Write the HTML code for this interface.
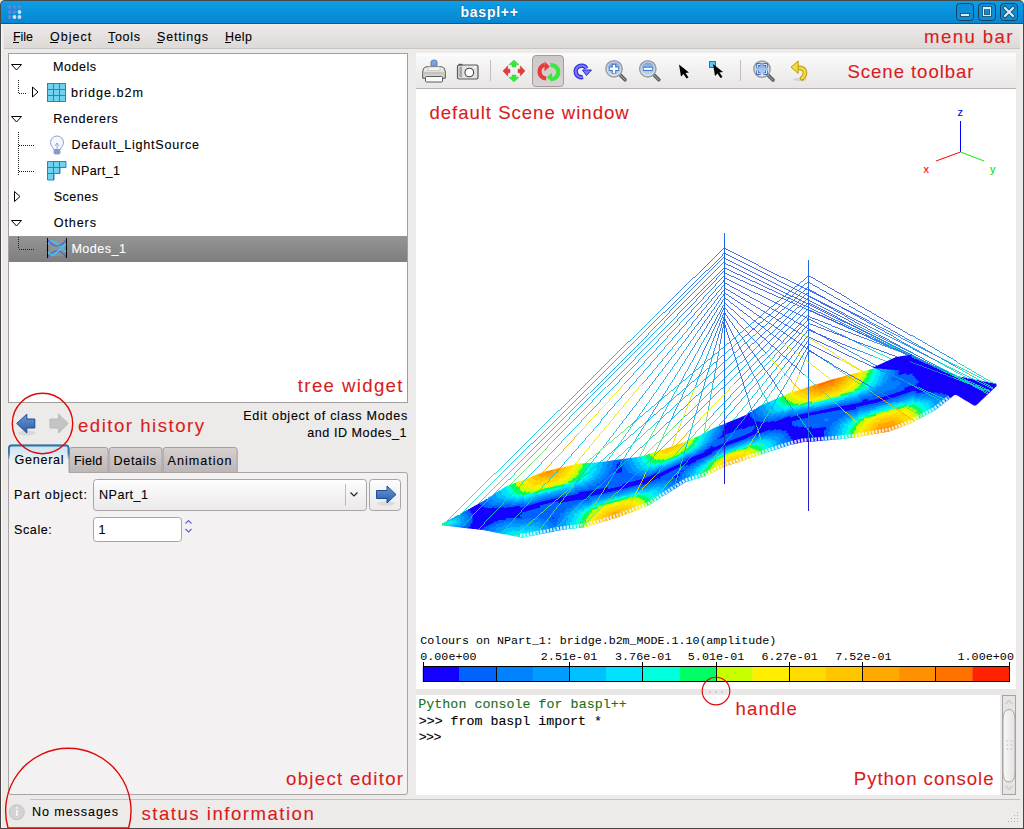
<!DOCTYPE html>
<html><head><meta charset="utf-8">
<style>
*{box-sizing:border-box}
html,body{margin:0;padding:0}
body{width:1024px;height:829px;overflow:hidden;position:relative;background:#edebea;font-family:"Liberation Sans",sans-serif}
.a{position:absolute}
</style></head><body>
<div class="a" style="left:0;top:0;width:1024px;height:829px;background:#4a4747;border-radius:5px 5px 0 0"></div>
<div class="a" style="left:1px;top:24px;width:1022px;height:804px;background:#edebea;border-left:1px solid #f8f7f7"></div>
<div class="a" style="left:1px;top:1px;width:1022px;height:23px;background:linear-gradient(#0c9ee8,#0a92dc 45%,#0886d0);border-radius:4px 4px 0 0;border-bottom:1px solid #0b5b92"></div>
<div class="a" style="left:4px;top:24px;width:1016px;height:25px;background:linear-gradient(#edebea,#dcd9d7);border-bottom:1px solid #c9c5c3"></div>
<div class="a" style="left:8px;top:53px;width:400px;height:350px;background:#fff;border:1px solid #a39d9d"></div>
<div class="a" style="left:8px;top:472px;width:400px;height:323px;background:#f3f1f1;border:1px solid #aaa4a4;border-radius:0 3px 3px 3px"></div>
<div class="a" style="left:416px;top:53px;width:600px;height:36px;background:linear-gradient(#fbfbfb,#e8e6e5);border-bottom:1px solid #bab5b5"></div>
<div class="a" style="left:416px;top:89px;width:600px;height:600px;background:#fff"></div>
<div class="a" style="left:416px;top:695px;width:584px;height:100px;background:#fff"></div>
<div class="a" style="left:30px;top:799px;width:990px;height:1px;background:#c6c1c0"></div>
<svg class="a" style="left:0;top:0" width="1024" height="829" viewBox="0 0 1024 829"><defs>
<linearGradient id="tabblue" x1="0" y1="0" x2="0" y2="1"><stop offset="0" stop-color="#2a76aa"/><stop offset="0.5" stop-color="#2a76aa"/><stop offset="1" stop-color="#2a76aa" stop-opacity="0"/></linearGradient>
<linearGradient id="selg" x1="0" y1="0" x2="0" y2="1"><stop offset="0" stop-color="#959595"/><stop offset="1" stop-color="#7e7e7e"/></linearGradient>
<linearGradient id="blueg" x1="0" y1="0" x2="0" y2="1"><stop offset="0" stop-color="#6a98d4"/><stop offset="1" stop-color="#2c5ca8"/></linearGradient>
<linearGradient id="tabg" x1="0" y1="0" x2="0" y2="1"><stop offset="0" stop-color="#d6d0d0"/><stop offset="1" stop-color="#bdb6b6"/></linearGradient>
<linearGradient id="acttab" x1="0" y1="0" x2="0" y2="1"><stop offset="0" stop-color="#c8e2f2"/><stop offset="0.6" stop-color="#eef2f4"/><stop offset="1" stop-color="#f3f1f1"/></linearGradient>
<linearGradient id="combog" x1="0" y1="0" x2="0" y2="1"><stop offset="0" stop-color="#fdfdfd"/><stop offset="1" stop-color="#ebe9e9"/></linearGradient>
<linearGradient id="pressg" x1="0" y1="0" x2="0" y2="1"><stop offset="0" stop-color="#cdc8c8"/><stop offset="1" stop-color="#d8d4d4"/></linearGradient>
<linearGradient id="scrollg" x1="0" y1="0" x2="1" y2="0"><stop offset="0" stop-color="#f8f8f8"/><stop offset="1" stop-color="#e4e2e2"/></linearGradient>
<linearGradient id="lensg" x1="0" y1="0" x2="0" y2="1"><stop offset="0" stop-color="#6e9edc"/><stop offset="1" stop-color="#cfe2f6"/></linearGradient>
<linearGradient id="printg" x1="0" y1="0" x2="0" y2="1"><stop offset="0" stop-color="#f2f2f0"/><stop offset="1" stop-color="#c8cac4"/></linearGradient>
</defs><circle cx="9.5" cy="7" r="1.9" fill="#5a86dc"/>
<circle cx="14.5" cy="7" r="1.9" fill="#5a86dc"/>
<circle cx="19.5" cy="7" r="1.9" fill="#5a86dc"/>
<circle cx="9.5" cy="12" r="1.9" fill="#5a86dc"/>
<circle cx="14.5" cy="12" r="1.9" fill="#5a86dc"/>
<circle cx="19.5" cy="12" r="1.9" fill="#d0e0fa"/>
<circle cx="9.5" cy="17" r="1.9" fill="#5a86dc"/>
<circle cx="14.5" cy="17" r="1.9" fill="#d0e0fa"/>
<circle cx="19.5" cy="17" r="1.9" fill="#d0e0fa"/>
<text x="460.5" y="16.8" font-family="Liberation Sans" font-size="14" fill="#fff" font-weight="bold" textLength="57.5" lengthAdjust="spacing" stroke="#0a3a60" stroke-width="0.4" paint-order="stroke">baspl++</text>
<rect x="956.5" y="3.5" width="17" height="17" rx="3.2" fill="#0a90d8" stroke="#15405e" stroke-width="1"/>
<rect x="978.5" y="3.5" width="17" height="17" rx="3.2" fill="#0a90d8" stroke="#15405e" stroke-width="1"/>
<rect x="1000.5" y="3.5" width="17" height="17" rx="3.2" fill="#0a90d8" stroke="#15405e" stroke-width="1"/>
<rect x="960.5" y="13.5" width="9" height="3" fill="#d4eefa" stroke="#15405e" stroke-width="0.8"/>
<rect x="983.5" y="7.5" width="7" height="8" fill="none" stroke="#15405e" stroke-width="2.6"/><rect x="983.5" y="7.5" width="7" height="8" fill="none" stroke="#d4eefa" stroke-width="1.2"/><rect x="983" y="7" width="8" height="2" fill="#d4eefa"/>
<path d="M1005 8 L1013 16 M1013 8 L1005 16" stroke="#15405e" stroke-width="3.8" stroke-linecap="square"/>
<path d="M1005 8 L1013 16 M1013 8 L1005 16" stroke="#d8f0fc" stroke-width="2.2" stroke-linecap="square"/>
<text x="13.0" y="40.5" font-family="Liberation Sans" font-size="12.5" fill="#000" textLength="20.0" lengthAdjust="spacing" stroke="#000" stroke-width="0.1">File</text>
<rect x="13" y="42" width="6" height="1" fill="#000"/>
<text x="50.0" y="40.5" font-family="Liberation Sans" font-size="12.5" fill="#000" textLength="41.2" lengthAdjust="spacing" stroke="#000" stroke-width="0.1">Object</text>
<rect x="50" y="42" width="8" height="1" fill="#000"/>
<text x="108.0" y="40.5" font-family="Liberation Sans" font-size="12.5" fill="#000" textLength="32.0" lengthAdjust="spacing" stroke="#000" stroke-width="0.1">Tools</text>
<rect x="108" y="42" width="6" height="1" fill="#000"/>
<text x="157.0" y="40.5" font-family="Liberation Sans" font-size="12.5" fill="#000" textLength="51.0" lengthAdjust="spacing" stroke="#000" stroke-width="0.1">Settings</text>
<rect x="157" y="42" width="6" height="1" fill="#000"/>
<text x="225.0" y="40.5" font-family="Liberation Sans" font-size="12.5" fill="#000" textLength="27.0" lengthAdjust="spacing" stroke="#000" stroke-width="0.1">Help</text>
<rect x="225" y="42" width="6" height="1" fill="#000"/>
<text x="924.0" y="43.0" font-family="Liberation Sans" font-size="18.6" fill="#d91c1c" textLength="88.5" lengthAdjust="spacing" stroke="#d91c1c" stroke-width="0.1">menu bar</text>
<rect x="9" y="236" width="398" height="26" fill="url(#selg)"/>
<path d="M11.5 64.5 L21.5 64.5 L16.5 70.0 Z" fill="none" stroke="#000" stroke-width="1"/>
<text x="53.1" y="70.8" font-family="Liberation Sans" font-size="12.6" fill="#000" textLength="43.0" lengthAdjust="spacing" stroke="#000" stroke-width="0.1">Models</text>
<line x1="18.5" y1="80" x2="18.5" y2="93" stroke="#222" stroke-width="1" stroke-dasharray="1 1"/>
<line x1="19" y1="93.5" x2="26" y2="93.5" stroke="#222" stroke-width="1" stroke-dasharray="1 1"/>
<path d="M32.5 87 L38.0 92 L32.5 97 Z" fill="none" stroke="#000" stroke-width="1"/>
<rect x="47.5" y="83.5" width="18" height="18" fill="#6fd3f0" stroke="#2b7fd0"/>
<path d="M53.5 84 V101 M59.5 84 V101 M48 89.5 H65 M48 95.5 H65" stroke="#2b7fd0" stroke-width="1"/>
<text x="71.1" y="96.9" font-family="Liberation Sans" font-size="12.6" fill="#000" textLength="72.0" lengthAdjust="spacing" stroke="#000" stroke-width="0.1">bridge.b2m</text>
<path d="M11.5 116.5 L21.5 116.5 L16.5 122.0 Z" fill="none" stroke="#000" stroke-width="1"/>
<text x="53.3" y="123.0" font-family="Liberation Sans" font-size="12.6" fill="#000" textLength="64.6" lengthAdjust="spacing" stroke="#000" stroke-width="0.1">Renderers</text>
<line x1="18.5" y1="132" x2="18.5" y2="175" stroke="#222" stroke-width="1" stroke-dasharray="1 1"/>
<line x1="19" y1="145.5" x2="35" y2="145.5" stroke="#222" stroke-width="1" stroke-dasharray="1 1"/>
<line x1="19" y1="171.5" x2="35" y2="171.5" stroke="#222" stroke-width="1" stroke-dasharray="1 1"/>
<path d="M57 136 a6.5 6.5 0 0 1 6.5 6.5 c0 3 -2.5 4.5 -3 7 h-7 c-0.5 -2.5 -3 -4 -3 -7 a6.5 6.5 0 0 1 6.5 -6.5z" fill="#f4f8fc" stroke="#8aa0c8" stroke-width="1"/>
<path d="M55 146 l2 -3 l2 3 M57 143 v6.5" stroke="#8aa0c8" fill="none" stroke-width="0.8"/>
<rect x="53.5" y="149.5" width="7" height="5" rx="2" fill="#8a9cc0"/>
<text x="71.4" y="148.7" font-family="Liberation Sans" font-size="12.6" fill="#000" textLength="127.6" lengthAdjust="spacing" stroke="#000" stroke-width="0.1">Default_LightSource</text>
<path d="M47.5 161.5 H66 V167.5 H60 V173.5 H54 V180 H47.5 Z" fill="#6fd3f0" stroke="#2b7fd0"/>
<path d="M53.5 162 V180 M59.5 162 V174 M48 167.5 H60 M48 173.5 H54" stroke="#2b7fd0" stroke-width="1"/>
<text x="71.4" y="174.7" font-family="Liberation Sans" font-size="12.6" fill="#000" textLength="48.6" lengthAdjust="spacing" stroke="#000" stroke-width="0.1">NPart_1</text>
<path d="M14.5 191.5 L20.0 196.5 L14.5 201.5 Z" fill="none" stroke="#000" stroke-width="1"/>
<text x="53.7" y="201.0" font-family="Liberation Sans" font-size="12.6" fill="#000" textLength="44.3" lengthAdjust="spacing" stroke="#000" stroke-width="0.1">Scenes</text>
<path d="M11.5 220.5 L21.5 220.5 L16.5 226.0 Z" fill="none" stroke="#000" stroke-width="1"/>
<text x="53.7" y="227.0" font-family="Liberation Sans" font-size="12.6" fill="#000" textLength="42.3" lengthAdjust="spacing" stroke="#000" stroke-width="0.1">Others</text>
<line x1="18.5" y1="237" x2="18.5" y2="249" stroke="#222" stroke-width="1" stroke-dasharray="1 1"/>
<line x1="19" y1="249.5" x2="35" y2="249.5" stroke="#222" stroke-width="1" stroke-dasharray="1 1"/>
<rect x="50" y="241" width="14" height="15" fill="#8898a4" opacity="0.7"/>
<path d="M47.5 238 V258 M66.5 238 V258" stroke="#000" stroke-width="1"/>
<path d="M48 244 q4.5 -6 9 0 t9 0" fill="none" stroke="#39c8f0" stroke-width="1.3"/>
<path d="M48 240 q9 12 18 0" fill="none" stroke="#4a58f0" stroke-width="1.2"/>
<path d="M48 257 q9 -12 18 0" fill="none" stroke="#4a58f0" stroke-width="1.2"/>
<path d="M48 252 q4.5 6 9 0 t9 0" fill="none" stroke="#39c8f0" stroke-width="1.3"/>
<text x="71.4" y="253.0" font-family="Liberation Sans" font-size="12.6" fill="#fff" textLength="54.7" lengthAdjust="spacing" stroke="#fff" stroke-width="0.1">Modes_1</text>
<text x="297.8" y="391.8" font-family="Liberation Sans" font-size="18.6" fill="#d91c1c" textLength="104.7" lengthAdjust="spacing" stroke="#d91c1c" stroke-width="0.1">tree widget</text>
<ellipse cx="27" cy="433" rx="9" ry="2.5" fill="#000" opacity="0.08"/>
<path d="M16.7 423.4 L26.8 414.2 V419 H34.8 V428 H26.8 V433 Z" fill="url(#blueg)" stroke="#1c4c94" stroke-width="1" stroke-linejoin="round"/>
<path d="M68.1 423.4 L58.6 414.2 V419 H50 V428 H58.6 V433 Z" fill="#c4c4c4" stroke="#b8b8b8" stroke-width="1" stroke-linejoin="round"/>
<text x="78.0" y="431.5" font-family="Liberation Sans" font-size="18.6" fill="#d91c1c" textLength="126.0" lengthAdjust="spacing" stroke="#d91c1c" stroke-width="0.1">editor history</text>
<text x="243.2" y="419.7" font-family="Liberation Sans" font-size="12.6" fill="#000" textLength="164.0" lengthAdjust="spacing" stroke="#000" stroke-width="0.1">Edit object of class Modes</text>
<text x="307.3" y="436.6" font-family="Liberation Sans" font-size="12.6" fill="#000" textLength="99.3" lengthAdjust="spacing" stroke="#000" stroke-width="0.1">and ID Modes_1</text>
<path d="M69.5 472 V450 q0 -2.5 2.5 -2.5 H105.6 q2.5 0 2.5 2.5 V472" fill="url(#tabg)" stroke="#a59d9d" stroke-width="1"/>
<path d="M109.1 472 V450 q0 -2.5 2.5 -2.5 H159.6 q2.5 0 2.5 2.5 V472" fill="url(#tabg)" stroke="#a59d9d" stroke-width="1"/>
<path d="M163.1 472 V450 q0 -2.5 2.5 -2.5 H234.7 q2.5 0 2.5 2.5 V472" fill="url(#tabg)" stroke="#a59d9d" stroke-width="1"/>
<path d="M8.5 473 V448 q0 -3 3 -3 H66 q3 0 3 3 V473" fill="url(#acttab)" stroke="#a9a3a3" stroke-width="1"/>
<path d="M9 460 V448 q0 -2.5 2.5 -2.5 H66 q2.5 0 2.5 2.5 V460" fill="none" stroke="url(#tabblue)" stroke-width="1.8"/>
<rect x="9" y="471" width="59.5" height="3" fill="#f3f1f1"/>
<text x="14.4" y="464.0" font-family="Liberation Sans" font-size="12.6" fill="#000" textLength="49.2" lengthAdjust="spacing" stroke="#000" stroke-width="0.1">General</text>
<text x="73.9" y="465.0" font-family="Liberation Sans" font-size="12.6" fill="#000" textLength="28.4" lengthAdjust="spacing" stroke="#000" stroke-width="0.1">Field</text>
<text x="113.4" y="465.0" font-family="Liberation Sans" font-size="12.6" fill="#000" textLength="42.7" lengthAdjust="spacing" stroke="#000" stroke-width="0.1">Details</text>
<text x="167.6" y="465.0" font-family="Liberation Sans" font-size="12.6" fill="#000" textLength="64.0" lengthAdjust="spacing" stroke="#000" stroke-width="0.1">Animation</text>
<text x="14.1" y="499.3" font-family="Liberation Sans" font-size="12.6" fill="#000" textLength="72.8" lengthAdjust="spacing" stroke="#000" stroke-width="0.1">Part object:</text>
<rect x="93.5" y="479.5" width="273" height="31" rx="3" fill="url(#combog)" stroke="#aaa3a3"/>
<line x1="345.5" y1="484" x2="345.5" y2="506" stroke="#c0baba"/>
<path d="M350.5 492.5 L354 496 L357.5 492.5" fill="none" stroke="#222" stroke-width="1.2"/>
<text x="99.0" y="499.0" font-family="Liberation Sans" font-size="12.6" fill="#000" textLength="49.0" lengthAdjust="spacing" stroke="#000" stroke-width="0.1">NPart_1</text>
<rect x="369.5" y="479.5" width="31" height="31" rx="3" fill="url(#combog)" stroke="#aaa3a3"/>
<ellipse cx="386" cy="503.5" rx="9" ry="2" fill="#000" opacity="0.08"/>
<path d="M396 494.5 L387 486 V490.5 H376.5 V498.5 H387 V503 Z" fill="url(#blueg)" stroke="#1c4c94" stroke-width="1" stroke-linejoin="round"/>
<text x="14.1" y="534.0" font-family="Liberation Sans" font-size="12.6" fill="#000" textLength="37.7" lengthAdjust="spacing" stroke="#000" stroke-width="0.1">Scale:</text>
<rect x="93.5" y="517.5" width="88" height="24" rx="3" fill="#fff" stroke="#a9a2a2"/>
<text x="98.6" y="534.0" font-family="Liberation Sans" font-size="12.6" fill="#000" stroke="#000" stroke-width="0.1">1</text>
<path d="M185.5 523.5 L188.5 520.5 L191.5 523.5 M185.5 529 L188.5 532 L191.5 529" fill="none" stroke="#5a64d0" stroke-width="1.1"/>
<text x="286.0" y="785.3" font-family="Liberation Sans" font-size="18.6" fill="#d91c1c" textLength="117.0" lengthAdjust="spacing" stroke="#d91c1c" stroke-width="0.1">object editor</text>
<circle cx="16.8" cy="812.3" r="7.5" fill="#d4d2d2" stroke="#c4c2c2"/>
<rect x="16" y="810" width="1.8" height="6" fill="#f4f4f4"/><rect x="16" y="807" width="1.8" height="1.8" fill="#f4f4f4"/>
<text x="32.0" y="816.0" font-family="Liberation Sans" font-size="12.6" fill="#000" textLength="86.0" lengthAdjust="spacing" stroke="#000" stroke-width="0.1">No messages</text>
<text x="141.5" y="820.0" font-family="Liberation Sans" font-size="18.6" fill="#d91c1c" textLength="172.3" lengthAdjust="spacing" stroke="#d91c1c" stroke-width="0.1">status information</text>
<rect x="1017" y="812" width="1" height="1" fill="#b0acab"/>
<rect x="1014" y="815" width="1" height="1" fill="#b0acab"/>
<rect x="1017" y="815" width="1" height="1" fill="#b0acab"/>
<rect x="1011" y="818" width="1" height="1" fill="#b0acab"/>
<rect x="1014" y="818" width="1" height="1" fill="#b0acab"/>
<rect x="1017" y="818" width="1" height="1" fill="#b0acab"/>
<rect x="1008" y="821" width="1" height="1" fill="#b0acab"/>
<rect x="1011" y="821" width="1" height="1" fill="#b0acab"/>
<rect x="1014" y="821" width="1" height="1" fill="#b0acab"/>
<rect x="1017" y="821" width="1" height="1" fill="#b0acab"/>
<path d="M431 66 V62 Q431 60 434 60 Q437 60 437 62 V66 Z" fill="#7aa4dc" stroke="#4c78bc" stroke-width="0.9"/>
<path d="M426 66.8 H442 Q445.3 67.5 445.3 72 V78.3 H422.7 V72 Q422.7 67.5 426 66.8 Z" fill="url(#printg)" stroke="#5b5d59" stroke-width="1"/>
<path d="M428 67 H440 V70.5 H428 Z" fill="#f4f4f2" stroke="#b8bab6" stroke-width="0.6"/>
<rect x="423.5" y="72" width="21" height="2.5" fill="#c2c4be"/>
<rect x="443.5" y="72" width="1.2" height="1.5" fill="#e8d840"/>
<rect x="425.5" y="76.5" width="17" height="5.5" rx="1" fill="#fafaf8" stroke="#5b5d59" stroke-width="1"/>
<rect x="457.5" y="65" width="20.5" height="14" rx="1.5" fill="#e2e2e0" stroke="#585858" stroke-width="1.2"/>
<rect x="459.3" y="66.8" width="2.8" height="10.5" fill="#a6a6a4"/>
<circle cx="469.3" cy="72.5" r="4.3" fill="#fff" stroke="#444" stroke-width="1.1"/>
<rect x="458.5" y="63.8" width="4" height="1.6" fill="#585858"/>
<rect x="473" y="66.5" width="3" height="1" fill="#fff"/>
<line x1="490.5" y1="60" x2="490.5" y2="81" stroke="#c2bebe"/>
<path d="M513.9 60 L519 64.7 H516 V67 H512 V64.7 H508.9 Z M513.9 81.9 L519 77.2 H516 V75 H512 V77.2 H508.9 Z" fill="#3ae83a" stroke="#30c030" stroke-width="0.4"/>
<path d="M502.9 70.9 L507.8 65.8 V69.2 H510 V72.8 H507.8 V75.9 Z M525 70.9 L520.3 65.8 V69.2 H518 V72.8 H520.3 V75.9 Z" fill="#e83a3a" stroke="#c82828" stroke-width="0.4"/>
<rect x="532.5" y="55.5" width="31" height="31" rx="3.5" fill="url(#pressg)" stroke="#a39d9d"/>
<path d="M546.2 78.5 A7 7 0 0 1 544.5 64.8" fill="none" stroke="#e83a3a" stroke-width="4.2"/>
<path d="M544.5 61.5 L549.8 66.5 L544.5 71.2 Z" fill="#e83a3a"/>
<path d="M550.5 65.2 A7 7 0 0 1 552 79.2" fill="none" stroke="#3ae83a" stroke-width="4.2"/>
<path d="M552 72.8 L546.6 77.2 L552 81.8 Z" fill="#3ae83a"/>
<path d="M586.5 68.5 A5.8 5.8 0 1 0 583 77" fill="none" stroke="#2a2ae0" stroke-width="4.4"/>
<path d="M586.5 68.5 A5.8 5.8 0 1 0 583 77" fill="none" stroke="#7878f8" stroke-width="2.2"/>
<path d="M582.5 70 L591.5 70 L586.5 75.5 Z" fill="#7878f8" stroke="#2a2ae0" stroke-width="1"/>
<line x1="620" y1="74.8" x2="625" y2="79.8" stroke="#5a5a5a" stroke-width="3.6" stroke-linecap="round"/><line x1="620" y1="74.8" x2="625" y2="79.8" stroke="#9a9a9a" stroke-width="1.2" stroke-linecap="round"/><circle cx="614" cy="68.8" r="8.1" fill="url(#lensg)" stroke="#9c9c9c" stroke-width="1.6"/><circle cx="614" cy="68.8" r="6.9" fill="none" stroke="#f0f4f8" stroke-width="0.7"/><path d="M609.3 68.8 H618.7 M614 64.1 V73.5" stroke="#3a6ec0" stroke-width="4.4"/><path d="M609.9 68.8 H618.1 M614 64.7 V72.9" stroke="#fff" stroke-width="2.4"/>
<line x1="653.8" y1="74.8" x2="658.8" y2="79.8" stroke="#5a5a5a" stroke-width="3.6" stroke-linecap="round"/><line x1="653.8" y1="74.8" x2="658.8" y2="79.8" stroke="#9a9a9a" stroke-width="1.2" stroke-linecap="round"/><circle cx="647.8" cy="68.8" r="8.1" fill="url(#lensg)" stroke="#9c9c9c" stroke-width="1.6"/><circle cx="647.8" cy="68.8" r="6.9" fill="none" stroke="#f0f4f8" stroke-width="0.7"/><path d="M643 68.8 H652.6" stroke="#3a6ec0" stroke-width="4.2"/><path d="M643.6 68.8 H652" stroke="#fff" stroke-width="2.2"/>
<line x1="768" y1="75.1" x2="773" y2="80.1" stroke="#5a5a5a" stroke-width="3.6" stroke-linecap="round"/><line x1="768" y1="75.1" x2="773" y2="80.1" stroke="#9a9a9a" stroke-width="1.2" stroke-linecap="round"/><circle cx="762" cy="69.1" r="8.1" fill="url(#lensg)" stroke="#9c9c9c" stroke-width="1.6"/><circle cx="762" cy="69.1" r="6.9" fill="none" stroke="#f0f4f8" stroke-width="0.7"/><path d="M757.5 67.5 V64.5 H760.5 M766.5 67.5 V64.5 H763.5 M757.5 70.7 V73.7 H760.5 M766.5 70.7 V73.7 H763.5" fill="none" stroke="#2a5cb8" stroke-width="2.4"/><path d="M757.5 67.5 V64.5 H760.5 M766.5 67.5 V64.5 H763.5 M757.5 70.7 V73.7 H760.5 M766.5 70.7 V73.7 H763.5" fill="none" stroke="#f4f8ff" stroke-width="0.9"/>
<path d="M679 64.5 L689 72.5 L685.5 73 L688.5 77.5 L686.5 78.5 L683.5 74 L681 76.5 Z" fill="#000"/>
<rect x="709.5" y="61.5" width="6" height="6" fill="#5ac8f0" stroke="#2a70d0"/>
<path d="M713 64 L723 72 L719.5 72.5 L722.5 77 L720.5 78 L717.5 73.5 L715 76 Z" fill="#000"/>
<line x1="740.5" y1="60" x2="740.5" y2="81" stroke="#c2bebe"/>
<ellipse cx="800" cy="79.5" rx="7" ry="1.8" fill="#000" opacity="0.09"/>
<path d="M797 67.6 Q805 67.6 805 72.5 Q805 76 802 78.3" fill="none" stroke="#b89a10" stroke-width="4.6" stroke-linecap="round"/>
<path d="M797 67.6 Q805 67.6 805 72.5 Q805 76 802 78.3" fill="none" stroke="#f0dc40" stroke-width="2.6" stroke-linecap="round"/>
<path d="M791 67.2 L798.2 61 V73.4 Z" fill="#f0dc40" stroke="#b89a10" stroke-width="1" stroke-linejoin="round"/>
<text x="847.5" y="78.0" font-family="Liberation Sans" font-size="18.6" fill="#d91c1c" textLength="126.0" lengthAdjust="spacing" stroke="#d91c1c" stroke-width="0.1">Scene toolbar</text>
<text x="429.4" y="119.4" font-family="Liberation Sans" font-size="18.6" fill="#d91c1c" textLength="199.3" lengthAdjust="spacing" stroke="#d91c1c" stroke-width="0.1">default Scene window</text>
<line x1="960.5" y1="121" x2="960.5" y2="152" stroke="#0000ff"/>
<line x1="960.5" y1="152" x2="936" y2="161" stroke="#ff0000"/>
<line x1="960.5" y1="152" x2="984" y2="161" stroke="#00ee00"/>
<text x="957.5" y="116.0" font-family="Liberation Sans" font-size="11" fill="#0000ff" textLength="6.0" lengthAdjust="spacing" stroke="#0000ff" stroke-width="0.1">z</text>
<text x="923.5" y="172.5" font-family="Liberation Sans" font-size="11" fill="#ff0000" textLength="6.5" lengthAdjust="spacing" stroke="#ff0000" stroke-width="0.1">x</text>
<text x="990.0" y="172.5" font-family="Liberation Sans" font-size="11" fill="#00dd00" textLength="6.5" lengthAdjust="spacing" stroke="#00dd00" stroke-width="0.1">y</text>
<path fill="#1400ff" d="M468.0 509.4L470.5 508.3L470.5 510.9L468.0 511.8ZM468.0 526.0L470.5 526.1L470.5 528.6L468.0 528.4ZM470.0 508.3L472.5 507.2L472.5 513.4L470.0 514.2ZM470.0 522.8L472.5 522.7L472.5 528.9L470.0 528.6ZM472.0 507.2L474.5 506.1L474.5 529.1L472.0 528.9ZM474.0 506.1L476.5 505.0L476.5 529.3L474.0 529.1ZM476.0 505.0L478.5 503.9L478.5 529.6L476.0 529.3ZM478.0 503.9L480.5 502.8L480.5 529.8L478.0 529.6ZM480.0 504.6L482.5 503.6L482.5 530.1L480.0 529.8ZM482.0 506.3L484.5 505.3L484.5 529.3L482.0 529.1ZM484.0 507.2L486.5 506.3L486.5 527.6L484.0 527.4ZM486.0 507.4L488.5 506.5L488.5 526.7L486.0 526.6ZM488.0 507.6L490.5 506.8L490.5 525.8L488.0 525.6ZM490.0 507.9L492.5 507.2L492.5 524.7L490.0 524.6ZM492.0 507.2L494.5 506.5L494.5 523.5L492.0 523.5ZM494.0 507.7L496.5 507.1L496.5 522.1L494.0 522.2ZM496.0 507.1L498.5 506.4L498.5 522.1L496.0 522.1ZM498.0 507.7L500.5 507.1L500.5 520.6L498.0 520.7ZM500.0 507.1L502.5 506.5L502.5 520.5L500.0 520.6ZM502.0 506.5L504.5 505.9L504.5 520.4L502.0 520.5ZM504.0 507.4L506.5 507.0L506.5 520.3L504.0 520.4ZM506.0 507.0L508.5 506.7L508.5 518.7L506.0 518.7ZM508.0 506.7L510.5 506.5L510.5 518.7L508.0 518.7ZM510.0 506.5L512.5 506.2L512.5 518.8L510.0 518.7ZM512.0 506.2L514.5 505.9L514.5 518.8L512.0 518.8ZM514.0 505.9L516.5 505.7L516.5 518.8L514.0 518.8ZM516.0 505.7L518.5 505.4L518.5 518.8L516.0 518.8ZM518.0 505.4L520.5 505.1L520.5 518.8L518.0 518.8ZM520.0 507.0L522.5 506.8L522.5 515.0L520.0 515.1ZM520.0 516.3L522.5 516.3L522.5 518.8L520.0 518.8ZM522.0 506.8L524.5 506.2L524.5 512.5L522.0 513.1ZM524.0 506.2L526.5 505.6L526.5 512.0L524.0 512.5ZM526.0 505.6L528.5 505.0L528.5 511.4L526.0 512.0ZM528.0 505.0L530.5 504.4L530.5 510.9L528.0 511.4ZM530.0 504.4L532.5 503.8L532.5 510.3L530.0 510.9ZM532.0 503.8L534.5 503.2L534.5 509.7L532.0 510.3ZM534.0 503.2L536.5 502.6L536.5 509.2L534.0 509.7ZM536.0 502.6L538.5 502.0L538.5 508.6L536.0 509.2ZM538.0 502.0L540.5 501.4L540.5 508.1L538.0 508.6ZM540.0 501.4L542.5 500.8L542.5 505.5L540.0 506.1ZM542.0 500.8L544.5 500.2L544.5 504.9L542.0 505.5ZM544.0 500.2L546.5 499.8L546.5 504.5L544.0 504.9ZM546.0 499.8L548.5 499.4L548.5 504.0L546.0 504.5ZM548.0 499.4L550.5 498.9L550.5 503.6L548.0 504.0ZM550.0 498.9L552.5 498.5L552.5 503.2L550.0 503.6ZM552.0 498.5L554.5 498.0L554.5 502.7L552.0 503.2ZM552.0 516.9L554.5 516.5L554.5 519.2L552.0 519.6ZM554.0 498.0L556.5 497.6L556.5 502.3L554.0 502.7ZM556.0 497.6L558.5 497.1L558.5 501.9L556.0 502.3ZM558.0 497.1L560.5 496.7L560.5 503.5L558.0 503.9ZM560.0 496.7L562.5 496.3L562.5 503.1L560.0 503.5ZM562.0 496.3L564.5 496.0L564.5 502.8L562.0 503.1ZM564.0 496.0L566.5 495.6L566.5 502.4L564.0 502.8ZM566.0 495.6L568.5 495.2L568.5 502.1L566.0 502.4ZM568.0 495.2L570.5 494.8L570.5 501.8L568.0 502.1ZM570.0 494.8L572.5 494.5L572.5 501.4L570.0 501.8ZM572.0 494.5L574.5 494.1L574.5 501.1L572.0 501.4ZM574.0 494.1L576.5 493.7L576.5 500.7L574.0 501.1ZM576.0 493.7L578.5 493.5L578.5 500.4L576.0 500.7ZM578.0 491.3L580.5 491.1L580.5 500.3L578.0 500.4ZM580.0 491.1L582.5 491.0L582.5 500.1L580.0 500.3ZM582.0 491.0L584.5 490.8L584.5 499.9L582.0 500.1ZM584.0 490.8L586.5 490.5L586.5 499.6L584.0 499.9ZM586.0 490.5L588.5 490.2L588.5 499.2L586.0 499.6ZM588.0 490.2L590.5 489.8L590.5 496.7L588.0 497.1ZM590.0 489.8L592.5 489.5L592.5 496.3L590.0 496.7ZM592.0 489.5L594.5 489.2L594.5 495.9L592.0 496.3ZM594.0 489.2L596.5 488.8L596.5 495.5L594.0 495.9ZM596.0 488.8L598.5 488.5L598.5 495.1L596.0 495.5ZM598.0 488.5L600.5 488.1L600.5 494.7L598.0 495.1ZM600.0 488.1L602.5 487.7L602.5 494.3L600.0 494.7ZM602.0 487.7L604.5 487.3L604.5 493.8L602.0 494.3ZM604.0 487.3L606.5 486.8L606.5 493.4L604.0 493.8ZM606.0 486.8L608.5 486.4L608.5 492.9L606.0 493.4ZM608.0 488.4L610.5 488.0L610.5 492.5L608.0 492.9ZM610.0 488.0L612.5 487.5L612.5 492.0L610.0 492.5ZM612.0 487.5L614.5 487.1L614.5 491.6L612.0 492.0ZM614.0 469.8L616.5 469.4L616.5 473.9L614.0 474.2ZM614.0 487.1L616.5 486.7L616.5 491.1L614.0 491.6ZM616.0 463.7L618.5 463.4L618.5 473.5L616.0 473.9ZM616.0 486.7L618.5 486.2L618.5 490.7L616.0 491.1ZM618.0 461.5L620.5 461.2L620.5 473.1L618.0 473.5ZM618.0 486.2L620.5 485.7L620.5 490.1L618.0 490.7ZM620.0 466.9L622.5 466.5L622.5 472.7L620.0 473.1ZM620.0 485.7L622.5 485.2L622.5 489.6L620.0 490.1ZM622.0 483.4L624.5 482.9L624.5 489.0L622.0 489.6ZM624.0 482.9L626.5 482.4L626.5 488.5L624.0 489.0ZM626.0 482.4L628.5 481.9L628.5 488.0L626.0 488.5ZM628.0 481.9L630.5 481.4L630.5 487.4L628.0 488.0ZM630.0 481.4L632.5 480.9L632.5 486.9L630.0 487.4ZM632.0 480.9L634.5 480.4L634.5 486.4L632.0 486.9ZM634.0 480.4L636.5 479.9L636.5 485.8L634.0 486.4ZM636.0 479.9L638.5 479.5L638.5 485.3L636.0 485.8ZM638.0 479.5L640.5 479.0L640.5 484.7L638.0 485.3ZM640.0 479.0L642.5 478.5L642.5 484.2L640.0 484.7ZM642.0 478.5L644.5 477.8L644.5 485.2L642.0 485.9ZM644.0 477.8L646.5 477.1L646.5 484.5L644.0 485.2ZM646.0 477.1L648.5 476.4L648.5 483.7L646.0 484.5ZM648.0 476.4L650.5 475.4L650.5 482.7L648.0 483.7ZM650.0 475.4L652.5 474.5L652.5 481.7L650.0 482.7ZM652.0 474.5L654.5 473.6L654.5 480.7L652.0 481.7ZM654.0 473.6L656.5 472.6L656.5 479.7L654.0 480.7ZM656.0 472.6L658.5 471.7L658.5 478.7L656.0 479.7ZM658.0 473.3L660.5 472.3L660.5 479.2L658.0 480.3ZM660.0 472.3L662.5 471.4L662.5 476.6L660.0 477.7ZM662.0 471.4L664.5 470.4L664.5 475.6L662.0 476.6ZM664.0 470.4L666.5 469.5L666.5 474.6L664.0 475.6ZM666.0 469.5L668.5 468.5L668.5 473.6L666.0 474.6ZM668.0 468.5L670.5 467.6L670.5 472.6L668.0 473.6ZM670.0 467.6L672.5 466.6L672.5 471.6L670.0 472.6ZM672.0 466.6L674.5 465.7L674.5 470.6L672.0 471.6ZM672.0 476.8L674.5 475.7L674.5 477.7L672.0 478.8ZM674.0 465.7L676.5 464.8L676.5 469.6L674.0 470.6ZM674.0 475.7L676.5 474.6L676.5 478.1L674.0 479.2ZM676.0 464.8L678.5 463.8L678.5 468.6L676.0 469.6ZM676.0 474.6L678.5 473.5L678.5 479.7L676.0 480.9ZM678.0 463.8L680.5 462.8L680.5 467.5L678.0 468.6ZM678.0 473.5L680.5 472.4L680.5 475.8L678.0 476.9ZM680.0 462.8L682.5 461.8L682.5 466.5L680.0 467.5ZM680.0 471.1L682.5 469.9L682.5 471.9L680.0 473.0ZM682.0 461.8L684.5 460.8L684.5 465.4L682.0 466.5ZM682.0 469.9L684.5 468.8L684.5 470.8L682.0 471.9ZM684.0 460.8L686.5 459.9L686.5 465.9L684.0 466.8ZM686.0 458.6L688.5 457.9L688.5 465.2L686.0 465.9ZM688.0 457.9L690.5 457.1L690.5 465.9L688.0 466.6ZM690.0 457.1L692.5 456.4L692.5 463.8L690.0 464.5ZM692.0 456.4L694.5 455.7L694.5 463.2L692.0 463.8ZM694.0 455.7L696.5 455.0L696.5 462.5L694.0 463.2ZM696.0 455.0L698.5 454.2L698.5 460.4L696.0 461.1ZM698.0 454.2L700.5 453.4L700.5 459.6L698.0 460.4ZM700.0 453.4L702.5 452.5L702.5 458.8L700.0 459.6ZM702.0 452.5L704.5 451.6L704.5 457.9L702.0 458.8ZM704.0 450.2L706.5 449.2L706.5 457.0L704.0 457.9ZM706.0 449.2L708.5 448.3L708.5 456.0L706.0 457.0ZM708.0 448.3L710.5 447.3L710.5 455.0L708.0 456.0ZM710.0 445.8L712.5 444.9L712.5 454.1L710.0 455.0ZM712.0 446.3L714.5 445.3L714.5 451.7L712.0 452.6ZM714.0 446.8L716.5 445.8L716.5 450.7L714.0 451.7ZM716.0 445.8L718.5 444.9L718.5 449.9L716.0 450.7ZM718.0 437.7L720.5 436.9L720.5 439.0L718.0 439.8ZM718.0 444.9L720.5 444.1L720.5 449.0L718.0 449.9ZM720.0 435.5L722.5 434.7L722.5 438.1L720.0 439.0ZM720.0 444.1L722.5 443.3L722.5 448.2L720.0 449.0ZM722.0 430.4L724.5 429.6L724.5 437.3L722.0 438.1ZM722.0 443.3L724.5 442.4L724.5 447.3L722.0 448.2ZM724.0 425.3L726.5 424.5L726.5 435.1L724.0 435.9ZM724.0 442.4L726.5 441.6L726.5 446.5L724.0 447.3ZM726.0 423.1L728.5 422.3L728.5 434.3L726.0 435.1ZM726.0 441.6L728.5 440.8L728.5 445.6L726.0 446.5ZM728.0 422.3L730.5 421.5L730.5 433.5L728.0 434.3ZM728.0 440.8L730.5 440.0L730.5 444.9L728.0 445.6ZM730.0 421.5L732.5 420.6L732.5 432.7L730.0 433.5ZM730.0 440.0L732.5 439.3L732.5 444.2L730.0 444.9ZM732.0 420.6L734.5 419.8L734.5 431.9L732.0 432.7ZM732.0 439.3L734.5 438.5L734.5 443.4L732.0 444.2ZM734.0 419.8L736.5 419.0L736.5 431.1L734.0 431.9ZM734.0 438.5L736.5 437.8L736.5 442.7L734.0 443.4ZM736.0 419.0L738.5 418.2L738.5 430.4L736.0 431.1ZM736.0 437.8L738.5 437.0L738.5 442.0L736.0 442.7ZM738.0 418.2L740.5 417.4L740.5 429.6L738.0 430.4ZM738.0 437.0L740.5 436.3L740.5 441.2L738.0 442.0ZM740.0 417.4L742.5 416.5L742.5 428.8L740.0 429.6ZM740.0 436.3L742.5 435.5L742.5 440.5L740.0 441.2ZM742.0 416.5L744.5 415.7L744.5 429.5L742.0 430.3ZM742.0 435.5L744.5 434.8L744.5 439.8L742.0 440.5ZM744.0 415.7L746.5 414.7L746.5 428.6L744.0 429.5ZM744.0 434.8L746.5 433.9L746.5 438.9L744.0 439.8ZM746.0 414.7L748.5 413.4L748.5 427.5L746.0 428.6ZM746.0 433.9L748.5 432.9L748.5 438.0L746.0 438.9ZM748.0 413.4L750.5 412.1L750.5 426.4L748.0 427.5ZM748.0 432.9L750.5 431.9L750.5 437.0L748.0 438.0ZM750.0 416.7L752.5 415.4L752.5 426.8L750.0 427.9ZM750.0 431.9L752.5 430.8L752.5 436.1L750.0 437.0ZM752.0 418.5L754.5 417.3L754.5 425.7L752.0 426.8ZM752.0 429.3L754.5 428.3L754.5 435.1L752.0 436.1ZM754.0 420.5L756.5 419.3L756.5 435.7L754.0 436.7ZM756.0 420.9L758.5 419.8L758.5 434.8L756.0 435.7ZM758.0 421.4L760.5 420.3L760.5 433.9L758.0 434.8ZM760.0 421.9L762.5 421.1L762.5 433.1L760.0 433.9ZM762.0 421.1L764.5 420.3L764.5 432.4L762.0 433.1ZM764.0 422.0L766.5 421.2L766.5 431.6L764.0 432.4ZM766.0 421.2L768.5 420.4L768.5 430.9L766.0 431.6ZM768.0 422.0L770.5 421.2L770.5 430.1L768.0 430.9ZM770.0 421.2L772.5 420.4L772.5 431.0L770.0 431.8ZM772.0 420.4L774.5 419.7L774.5 430.3L772.0 431.0ZM774.0 421.3L776.5 420.5L776.5 429.5L774.0 430.3ZM776.0 420.5L778.5 419.8L778.5 430.5L776.0 431.2ZM778.0 419.8L780.5 419.0L780.5 429.7L778.0 430.5ZM780.0 419.0L782.5 418.2L782.5 430.7L780.0 431.4ZM782.0 418.2L784.5 417.4L784.5 431.6L782.0 432.4ZM784.0 417.4L786.5 416.6L786.5 430.9L784.0 431.6ZM786.0 416.6L788.5 415.9L788.5 433.6L786.0 434.3ZM788.0 415.9L790.5 415.1L790.5 436.4L788.0 437.1ZM790.0 416.9L792.5 416.3L792.5 439.4L790.0 439.9ZM792.0 416.3L794.5 415.7L794.5 421.6L792.0 422.1ZM792.0 425.0L794.5 424.4L794.5 444.1L792.0 444.6ZM794.0 415.7L796.5 415.2L796.5 421.0L794.0 421.6ZM794.0 426.2L796.5 425.7L796.5 443.7L794.0 444.1ZM796.0 415.2L798.5 414.6L798.5 420.5L796.0 421.0ZM796.0 425.7L798.5 425.1L798.5 443.2L796.0 443.7ZM798.0 414.6L800.5 414.1L800.5 419.9L798.0 420.5ZM798.0 426.9L800.5 426.4L800.5 442.8L798.0 443.2ZM800.0 414.1L802.5 413.5L802.5 419.4L800.0 419.9ZM800.0 426.4L802.5 425.9L802.5 442.3L800.0 442.8ZM802.0 413.5L804.5 413.1L804.5 419.0L802.0 419.4ZM802.0 425.9L804.5 425.6L804.5 442.1L802.0 442.3ZM804.0 413.1L806.5 412.7L806.5 418.7L804.0 419.0ZM804.0 427.3L806.5 427.0L806.5 442.0L804.0 442.1ZM806.0 412.7L808.5 412.3L808.5 418.3L806.0 418.7ZM806.0 427.0L808.5 426.8L808.5 441.8L806.0 442.0ZM808.0 412.3L810.5 411.9L810.5 416.1L808.0 416.5ZM808.0 426.8L810.5 426.5L810.5 441.7L808.0 441.8ZM810.0 411.9L812.5 411.5L812.5 415.7L810.0 416.1ZM810.0 426.5L812.5 426.2L812.5 441.5L810.0 441.7ZM812.0 411.5L814.5 411.1L814.5 415.4L812.0 415.7ZM812.0 428.0L814.5 427.8L814.5 441.4L812.0 441.5ZM814.0 411.1L816.5 410.6L816.5 415.0L814.0 415.4ZM814.0 427.8L816.5 427.5L816.5 441.2L814.0 441.4ZM816.0 410.6L818.5 410.2L818.5 414.6L816.0 415.0ZM816.0 427.5L818.5 427.2L818.5 441.0L816.0 441.2ZM818.0 410.2L820.5 409.8L820.5 414.2L818.0 414.6ZM818.0 427.2L820.5 426.9L820.5 440.9L818.0 441.0ZM820.0 409.8L822.5 409.4L822.5 413.8L820.0 414.2ZM820.0 426.9L822.5 426.7L822.5 440.7L820.0 440.9ZM822.0 409.4L824.5 409.0L824.5 413.5L822.0 413.8ZM822.0 426.7L824.5 426.4L824.5 438.6L822.0 438.8ZM824.0 409.0L826.5 408.6L826.5 413.1L824.0 413.5ZM824.0 426.4L826.5 426.1L826.5 430.6L824.0 430.9ZM826.0 408.6L828.5 408.2L828.5 412.7L826.0 413.1ZM828.0 408.2L830.5 407.7L830.5 412.3L828.0 412.7ZM830.0 407.7L832.5 407.3L832.5 411.9L830.0 412.3ZM832.0 407.3L834.5 406.9L834.5 411.6L832.0 411.9ZM834.0 406.9L836.5 406.6L836.5 411.2L834.0 411.6ZM836.0 406.6L838.5 406.2L838.5 410.9L836.0 411.2ZM838.0 406.2L840.5 405.9L840.5 410.6L838.0 410.9ZM840.0 405.9L842.5 405.5L842.5 410.2L840.0 410.6ZM842.0 405.5L844.5 405.1L844.5 409.8L842.0 410.2ZM844.0 405.1L846.5 404.7L846.5 411.5L844.0 411.9ZM846.0 404.7L848.5 404.3L848.5 411.2L846.0 411.5ZM848.0 404.3L850.5 403.9L850.5 410.8L848.0 411.2ZM850.0 403.9L852.5 403.5L852.5 410.5L850.0 410.8ZM852.0 403.5L854.5 403.2L854.5 410.1L852.0 410.5ZM854.0 403.2L856.5 402.8L856.5 409.7L854.0 410.1ZM856.0 402.8L858.5 402.3L858.5 407.2L856.0 407.6ZM858.0 402.3L860.5 401.9L860.5 406.8L858.0 407.2ZM860.0 401.9L862.5 401.5L862.5 406.3L860.0 406.8ZM862.0 399.3L864.5 398.9L864.5 405.9L862.0 406.3ZM864.0 398.9L866.5 398.4L866.5 405.5L864.0 405.9ZM866.0 398.4L868.5 398.0L868.5 405.0L866.0 405.5ZM868.0 400.1L870.5 399.7L870.5 404.6L868.0 405.0ZM870.0 399.7L872.5 399.3L872.5 404.2L870.0 404.6ZM872.0 399.3L874.5 398.8L874.5 403.8L872.0 404.2ZM874.0 398.8L876.5 398.4L876.5 403.3L874.0 403.8ZM876.0 398.4L878.5 397.8L878.5 402.8L876.0 403.3ZM878.0 397.8L880.5 397.2L880.5 402.2L878.0 402.8ZM880.0 397.2L882.5 396.5L882.5 401.6L880.0 402.2ZM882.0 396.5L884.5 395.9L884.5 401.0L882.0 401.6ZM884.0 395.9L886.5 395.2L886.5 400.4L884.0 401.0ZM886.0 395.2L888.5 394.6L888.5 399.8L886.0 400.4ZM888.0 394.6L890.5 394.1L890.5 399.3L888.0 399.8ZM890.0 394.1L892.5 393.5L892.5 398.6L890.0 399.3ZM892.0 393.5L894.5 392.8L894.5 397.9L892.0 398.6ZM894.0 392.8L896.5 392.1L896.5 397.3L894.0 397.9ZM896.0 392.1L898.5 391.5L898.5 396.6L896.0 397.3ZM898.0 371.1L900.5 370.5L900.5 375.6L898.0 376.2ZM898.0 391.5L900.5 390.8L900.5 395.9L898.0 396.6ZM900.0 366.0L902.5 365.4L902.5 375.0L900.0 375.6ZM900.0 390.8L902.5 390.1L902.5 395.2L900.0 395.9ZM902.0 358.6L904.5 358.0L904.5 374.3L902.0 375.0ZM902.0 390.1L904.5 389.5L904.5 394.5L902.0 395.2ZM904.0 358.0L906.5 357.4L906.5 373.7L904.0 374.3ZM904.0 387.2L906.5 386.6L906.5 393.9L904.0 394.5ZM906.0 357.4L908.5 356.9L908.5 375.3L906.0 376.0ZM906.0 386.6L908.5 385.9L908.5 393.2L906.0 393.9ZM908.0 356.9L910.5 356.3L910.5 374.7L908.0 375.3ZM908.0 385.9L910.5 385.2L910.5 392.5L908.0 393.2ZM910.0 356.3L912.5 355.7L912.5 374.0L910.0 374.7ZM910.0 385.2L912.5 384.5L912.5 391.7L910.0 392.5ZM912.0 355.7L914.5 356.6L914.5 376.6L912.0 376.2ZM912.0 384.5L914.5 384.6L914.5 391.6L912.0 391.7ZM914.0 356.6L916.5 357.6L916.5 379.0L914.0 378.7ZM914.0 384.6L916.5 384.6L916.5 391.5L914.0 391.6ZM916.0 357.6L918.5 358.5L918.5 381.2L916.0 381.1ZM916.0 382.5L918.5 382.7L918.5 393.3L916.0 393.5ZM918.0 358.5L920.5 359.4L920.5 393.1L918.0 393.3ZM920.0 359.4L922.5 360.4L922.5 392.9L920.0 393.1ZM922.0 360.4L924.5 361.3L924.5 392.7L922.0 392.9ZM924.0 361.3L926.5 362.2L926.5 392.5L924.0 392.7ZM926.0 362.2L928.5 363.1L928.5 392.3L926.0 392.5ZM928.0 363.1L930.5 364.1L930.5 392.1L928.0 392.3ZM930.0 364.1L932.5 365.0L932.5 393.4L930.0 393.7ZM932.0 365.0L934.5 365.9L934.5 393.1L932.0 393.4ZM934.0 365.9L936.5 366.9L936.5 392.7L934.0 393.1ZM936.0 366.9L938.5 367.8L938.5 393.4L936.0 394.1ZM938.0 367.8L940.5 368.7L940.5 394.0L938.0 394.7ZM940.0 368.7L942.5 369.7L942.5 393.2L940.0 394.0ZM942.0 369.7L944.5 370.6L944.5 394.6L942.0 395.5ZM944.0 370.6L946.5 371.5L946.5 394.6L944.0 395.7ZM946.0 371.5L948.5 372.4L948.5 395.4L946.0 396.6ZM948.0 372.4L950.5 373.4L950.5 397.5L948.0 399.0ZM950.0 373.4L952.5 374.3L952.5 396.7L950.0 398.3ZM952.0 374.3L954.5 375.2L954.5 395.1L952.0 396.7ZM954.0 375.2L956.5 375.9L956.5 394.9L954.0 395.1ZM956.0 375.9L958.5 376.3L958.5 396.1L956.0 394.9ZM958.0 376.3L960.5 376.7L960.5 397.3L958.0 396.1ZM960.0 376.7L962.5 377.1L962.5 398.5L960.0 397.3ZM962.0 377.1L964.5 377.5L964.5 399.7L962.0 398.5ZM964.0 377.5L966.5 377.8L966.5 400.9L964.0 399.7ZM966.0 377.8L968.5 378.2L968.5 402.1L966.0 400.9ZM968.0 378.2L970.5 378.6L970.5 403.3L968.0 402.1ZM970.0 378.6L972.5 379.0L972.5 404.5L970.0 403.3ZM972.0 379.0L974.5 379.4L974.5 405.7L972.0 404.5ZM974.0 379.4L976.5 379.8L976.5 405.3L974.0 405.7ZM976.0 379.8L978.5 380.2L978.5 403.4L976.0 405.3ZM978.0 380.2L980.5 380.6L980.5 401.5L978.0 403.4ZM980.0 380.6L982.5 381.0L982.5 399.6L980.0 401.5ZM982.0 381.0L984.5 381.4L984.5 397.7L982.0 399.6ZM984.0 381.4L986.5 381.7L986.5 395.8L984.0 397.7ZM986.0 381.7L988.5 382.1L988.5 393.9L986.0 395.8ZM988.0 382.1L990.5 382.5L990.5 392.0L988.0 393.9ZM990.0 382.5L992.5 382.9L992.5 390.1L990.0 392.0ZM992.0 382.9L994.5 383.3L994.5 388.2L992.0 390.1ZM994.0 383.3L996.5 383.7L996.5 386.3L994.0 388.2Z"/>
<path fill="#0062ff" d="M462.0 512.7L464.5 511.6L464.5 512.7L462.0 513.8ZM462.0 526.6L464.5 526.8L464.5 527.9L462.0 527.7ZM464.0 511.6L466.5 510.5L466.5 513.4L464.0 514.3ZM464.0 525.2L466.5 525.3L466.5 528.2L464.0 527.9ZM466.0 510.5L468.5 509.4L468.5 515.5L466.0 516.2ZM466.0 522.4L468.5 522.3L468.5 528.4L466.0 528.2ZM468.0 511.2L470.5 510.3L470.5 526.7L468.0 526.6ZM470.0 513.6L472.5 512.8L472.5 523.3L470.0 523.4ZM480.0 502.8L482.5 501.7L482.5 504.2L480.0 505.2ZM482.0 501.7L484.5 500.4L484.5 505.9L482.0 506.9ZM482.0 528.5L484.5 528.7L484.5 530.3L482.0 530.1ZM484.0 500.4L486.5 499.1L486.5 506.9L484.0 507.8ZM484.0 526.8L486.5 527.0L486.5 530.7L484.0 530.3ZM486.0 502.2L488.5 501.1L488.5 507.1L486.0 508.0ZM486.0 526.0L488.5 526.1L488.5 531.1L486.0 530.7ZM488.0 503.2L490.5 502.2L490.5 507.4L488.0 508.2ZM488.0 525.0L490.5 525.2L490.5 530.3L488.0 530.0ZM490.0 504.5L492.5 503.6L492.5 507.8L490.0 508.5ZM490.0 524.0L492.5 524.1L492.5 528.3L490.0 528.0ZM492.0 504.8L494.5 504.0L494.5 507.1L492.0 507.8ZM492.0 522.9L494.5 522.9L494.5 527.2L492.0 527.1ZM494.0 505.2L496.5 504.4L496.5 507.7L494.0 508.3ZM494.0 521.6L496.5 521.5L496.5 526.1L494.0 526.0ZM496.0 504.4L498.5 503.6L498.5 507.0L496.0 507.7ZM496.0 521.5L498.5 521.5L498.5 524.8L496.0 524.8ZM498.0 505.0L500.5 504.3L500.5 507.7L498.0 508.3ZM498.0 520.1L500.5 520.0L500.5 524.9L498.0 524.8ZM500.0 504.3L502.5 503.5L502.5 507.1L500.0 507.7ZM500.0 520.0L502.5 519.9L502.5 523.4L500.0 523.4ZM502.0 505.0L504.5 504.3L504.5 506.5L502.0 507.1ZM502.0 519.9L504.5 519.8L504.5 523.4L502.0 523.4ZM504.0 504.3L506.5 503.8L506.5 507.6L504.0 508.0ZM504.0 519.8L506.5 519.7L506.5 521.9L504.0 521.9ZM506.0 503.8L508.5 503.5L508.5 507.3L506.0 507.6ZM506.0 518.1L508.5 518.1L508.5 522.0L506.0 521.9ZM508.0 503.5L510.5 503.1L510.5 507.1L508.0 507.3ZM508.0 518.1L510.5 518.1L510.5 522.1L508.0 522.0ZM510.0 504.8L512.5 504.5L512.5 506.8L510.0 507.1ZM510.0 518.1L512.5 518.2L512.5 522.2L510.0 522.1ZM512.0 504.5L514.5 504.2L514.5 506.5L512.0 506.8ZM512.0 518.2L514.5 518.2L514.5 522.3L512.0 522.2ZM514.0 504.2L516.5 503.9L516.5 506.3L514.0 506.5ZM514.0 518.2L516.5 518.2L516.5 520.6L514.0 520.5ZM516.0 503.9L518.5 503.6L518.5 506.0L516.0 506.3ZM516.0 518.2L518.5 518.2L518.5 520.6L516.0 520.6ZM518.0 503.6L520.5 503.3L520.5 505.7L518.0 506.0ZM518.0 518.2L520.5 518.2L520.5 520.6L518.0 520.6ZM520.0 503.3L522.5 503.0L522.5 507.4L520.0 507.6ZM520.0 514.5L522.5 514.4L522.5 516.9L520.0 516.9ZM520.0 518.2L522.5 518.2L522.5 520.7L520.0 520.6ZM522.0 503.0L524.5 502.4L524.5 506.8L522.0 507.4ZM522.0 512.5L524.5 511.9L524.5 520.2L522.0 520.7ZM524.0 504.3L526.5 503.7L526.5 506.2L524.0 506.8ZM524.0 511.9L526.5 511.4L526.5 519.7L524.0 520.2ZM526.0 503.7L528.5 503.1L528.5 505.6L526.0 506.2ZM526.0 511.4L528.5 510.8L528.5 519.2L526.0 519.7ZM528.0 503.1L530.5 502.5L530.5 505.0L528.0 505.6ZM528.0 510.8L530.5 510.3L530.5 518.7L528.0 519.2ZM530.0 502.5L532.5 501.8L532.5 504.4L530.0 505.0ZM530.0 510.3L532.5 509.7L532.5 520.1L530.0 520.6ZM532.0 501.8L534.5 501.2L534.5 503.8L532.0 504.4ZM532.0 509.7L534.5 509.1L534.5 519.6L532.0 520.1ZM534.0 501.2L536.5 500.6L536.5 503.2L534.0 503.8ZM534.0 509.1L536.5 508.6L536.5 519.1L534.0 519.6ZM536.0 500.6L538.5 500.0L538.5 502.6L536.0 503.2ZM536.0 508.6L538.5 508.0L538.5 518.6L536.0 519.1ZM538.0 500.0L540.5 499.4L540.5 502.0L538.0 502.6ZM538.0 508.0L540.5 507.5L540.5 518.1L538.0 518.6ZM540.0 499.4L542.5 498.8L542.5 501.4L540.0 502.0ZM540.0 505.5L542.5 504.9L542.5 519.7L540.0 520.2ZM542.0 498.8L544.5 498.2L544.5 500.8L542.0 501.4ZM542.0 504.9L544.5 504.3L544.5 519.2L542.0 519.7ZM544.0 498.2L546.5 497.8L546.5 500.4L544.0 500.8ZM544.0 504.3L546.5 503.9L546.5 520.8L544.0 521.2ZM546.0 497.8L548.5 497.3L548.5 500.0L546.0 500.4ZM546.0 503.9L548.5 503.4L548.5 520.4L546.0 520.8ZM548.0 497.3L550.5 496.9L550.5 499.5L548.0 500.0ZM548.0 503.4L550.5 503.0L550.5 522.0L548.0 522.4ZM550.0 496.9L552.5 496.4L552.5 499.1L550.0 499.5ZM550.0 503.0L552.5 502.6L552.5 523.7L550.0 524.1ZM552.0 496.4L554.5 496.0L554.5 498.6L552.0 499.1ZM552.0 502.6L554.5 502.1L554.5 517.1L552.0 517.5ZM552.0 519.0L554.5 518.6L554.5 525.3L552.0 525.7ZM554.0 496.0L556.5 495.5L556.5 498.2L554.0 498.6ZM554.0 502.1L556.5 501.7L556.5 529.0L554.0 529.4ZM556.0 495.5L558.5 495.1L558.5 497.7L556.0 498.2ZM556.0 501.7L558.5 501.3L558.5 522.5L556.0 522.9ZM558.0 495.1L560.5 494.6L560.5 497.3L558.0 497.7ZM558.0 503.3L560.5 502.9L560.5 517.9L558.0 518.3ZM560.0 494.6L562.5 494.3L562.5 496.9L560.0 497.3ZM560.0 502.9L562.5 502.5L562.5 513.5L560.0 513.8ZM562.0 494.3L564.5 493.9L564.5 496.6L562.0 496.9ZM562.0 502.5L564.5 502.2L564.5 513.2L562.0 513.5ZM564.0 493.9L566.5 493.5L566.5 496.2L564.0 496.6ZM564.0 502.2L566.5 501.8L566.5 510.8L564.0 511.1ZM566.0 493.5L568.5 493.1L568.5 495.8L566.0 496.2ZM566.0 501.8L568.5 501.5L568.5 508.4L566.0 508.7ZM568.0 493.1L570.5 492.7L570.5 495.4L568.0 495.8ZM568.0 501.5L570.5 501.2L570.5 508.1L568.0 508.4ZM570.0 492.7L572.5 492.4L572.5 495.1L570.0 495.4ZM570.0 501.2L572.5 500.8L572.5 507.7L570.0 508.1ZM572.0 492.4L574.5 492.0L574.5 494.7L572.0 495.1ZM572.0 500.8L574.5 500.5L574.5 505.3L572.0 505.6ZM574.0 489.9L576.5 489.5L576.5 494.3L574.0 494.7ZM574.0 500.5L576.5 500.1L576.5 505.0L574.0 505.3ZM576.0 489.5L578.5 489.2L578.5 494.1L576.0 494.3ZM576.0 500.1L578.5 499.8L578.5 504.7L576.0 505.0ZM578.0 489.2L580.5 489.0L580.5 491.7L578.0 491.9ZM578.0 499.8L580.5 499.7L580.5 502.4L578.0 502.6ZM580.0 489.0L582.5 488.8L582.5 491.6L580.0 491.7ZM580.0 499.7L582.5 499.5L582.5 502.2L580.0 502.4ZM582.0 488.8L584.5 488.7L584.5 491.4L582.0 491.6ZM582.0 499.5L584.5 499.3L584.5 502.0L582.0 502.2ZM584.0 488.7L586.5 488.4L586.5 491.1L584.0 491.4ZM584.0 499.3L586.5 499.0L586.5 501.7L584.0 502.0ZM586.0 488.4L588.5 488.1L588.5 490.8L586.0 491.1ZM586.0 499.0L588.5 498.6L588.5 501.3L586.0 501.7ZM588.0 486.0L590.5 485.7L590.5 490.4L588.0 490.8ZM588.0 496.5L590.5 496.1L590.5 500.8L588.0 501.3ZM590.0 485.7L592.5 485.4L592.5 490.1L590.0 490.4ZM590.0 496.1L592.5 495.7L592.5 498.4L590.0 498.8ZM592.0 485.4L594.5 485.1L594.5 489.8L592.0 490.1ZM592.0 495.7L594.5 495.3L594.5 498.0L592.0 498.4ZM594.0 485.1L596.5 484.8L596.5 489.4L594.0 489.8ZM594.0 495.3L596.5 494.9L596.5 497.5L594.0 498.0ZM596.0 482.7L598.5 482.4L598.5 489.1L596.0 489.4ZM596.0 494.9L598.5 494.5L598.5 497.1L596.0 497.5ZM598.0 482.4L600.5 482.1L600.5 488.7L598.0 489.1ZM598.0 494.5L600.5 494.1L600.5 496.7L598.0 497.1ZM600.0 480.1L602.5 479.7L602.5 488.3L600.0 488.7ZM600.0 494.1L602.5 493.7L602.5 496.3L600.0 496.7ZM602.0 479.7L604.5 479.3L604.5 487.9L602.0 488.3ZM602.0 493.7L604.5 493.2L604.5 495.8L602.0 496.3ZM604.0 477.4L606.5 477.0L606.5 487.4L604.0 487.9ZM604.0 493.2L606.5 492.8L606.5 495.3L604.0 495.8ZM606.0 475.0L608.5 474.7L608.5 487.0L606.0 487.4ZM606.0 492.8L608.5 492.3L608.5 494.9L606.0 495.3ZM608.0 470.8L610.5 470.4L610.5 488.6L608.0 489.0ZM608.0 492.3L610.5 491.9L610.5 494.4L608.0 494.9ZM610.0 466.5L612.5 466.2L612.5 488.1L610.0 488.6ZM610.0 491.9L612.5 491.4L612.5 493.9L610.0 494.4ZM612.0 460.4L614.5 460.1L614.5 487.7L612.0 488.1ZM612.0 491.4L614.5 491.0L614.5 493.5L612.0 493.9ZM614.0 460.1L616.5 459.9L616.5 470.0L614.0 470.4ZM614.0 473.6L616.5 473.3L616.5 487.3L614.0 487.7ZM614.0 491.0L616.5 490.5L616.5 493.0L614.0 493.5ZM616.0 459.9L618.5 459.6L618.5 464.0L616.0 464.3ZM616.0 473.3L618.5 472.9L618.5 486.8L616.0 487.3ZM616.0 490.5L618.5 490.1L618.5 492.6L616.0 493.0ZM618.0 459.6L620.5 459.3L620.5 461.8L618.0 462.1ZM618.0 472.9L620.5 472.5L620.5 486.3L618.0 486.8ZM618.0 490.1L620.5 489.5L620.5 492.0L618.0 492.6ZM620.0 459.3L622.5 459.0L622.5 467.1L620.0 467.5ZM620.0 472.5L622.5 472.1L622.5 485.8L620.0 486.3ZM620.0 489.5L622.5 489.0L622.5 491.4L620.0 492.0ZM622.0 459.0L624.5 458.8L624.5 483.5L622.0 484.0ZM622.0 489.0L624.5 488.4L624.5 490.9L622.0 491.4ZM624.0 466.2L626.5 465.8L626.5 483.0L624.0 483.5ZM624.0 488.4L626.5 487.9L626.5 490.3L624.0 490.9ZM626.0 469.5L628.5 469.2L628.5 482.5L626.0 483.0ZM626.0 487.9L628.5 487.4L628.5 489.8L626.0 490.3ZM628.0 472.8L630.5 472.4L630.5 482.0L628.0 482.5ZM628.0 487.4L630.5 486.8L630.5 489.2L628.0 489.8ZM630.0 472.4L632.5 472.0L632.5 481.5L630.0 482.0ZM630.0 486.8L632.5 486.3L632.5 488.7L630.0 489.2ZM632.0 473.8L634.5 473.3L634.5 481.0L632.0 481.5ZM632.0 486.3L634.5 485.8L634.5 488.1L632.0 488.7ZM634.0 475.1L636.5 474.7L636.5 480.5L634.0 481.0ZM634.0 485.8L636.5 485.2L636.5 487.6L634.0 488.1ZM636.0 474.7L638.5 474.2L638.5 480.1L636.0 480.5ZM636.0 485.2L638.5 484.7L638.5 487.0L636.0 487.6ZM638.0 476.0L640.5 475.5L640.5 479.6L638.0 480.1ZM638.0 484.7L640.5 484.1L640.5 486.5L638.0 487.0ZM640.0 475.5L642.5 475.1L642.5 479.1L640.0 479.6ZM640.0 484.1L642.5 483.6L642.5 487.6L640.0 488.2ZM642.0 475.1L644.5 474.4L644.5 478.4L642.0 479.1ZM642.0 485.3L644.5 484.6L644.5 486.9L642.0 487.6ZM644.0 474.4L646.5 473.7L646.5 477.7L644.0 478.4ZM644.0 484.6L646.5 483.9L646.5 486.2L644.0 486.9ZM646.0 475.4L648.5 474.7L648.5 477.0L646.0 477.7ZM646.0 483.9L648.5 483.1L648.5 485.4L646.0 486.2ZM648.0 474.7L650.5 473.8L650.5 476.0L648.0 477.0ZM648.0 483.1L650.5 482.1L650.5 484.4L648.0 485.4ZM650.0 473.8L652.5 472.8L652.5 475.1L650.0 476.0ZM650.0 482.1L652.5 481.1L652.5 483.4L650.0 484.4ZM652.0 472.8L654.5 471.9L654.5 474.2L652.0 475.1ZM652.0 481.1L654.5 480.1L654.5 484.0L652.0 485.0ZM654.0 471.9L656.5 471.0L656.5 473.2L654.0 474.2ZM654.0 480.1L656.5 479.1L656.5 482.9L654.0 484.0ZM656.0 471.0L658.5 470.1L658.5 472.3L656.0 473.2ZM656.0 479.1L658.5 478.1L658.5 481.9L656.0 482.9ZM658.0 470.1L660.5 469.2L660.5 472.9L658.0 473.9ZM658.0 479.7L660.5 478.6L660.5 482.4L658.0 483.4ZM660.0 469.2L662.5 468.3L662.5 472.0L660.0 472.9ZM660.0 477.1L662.5 476.0L662.5 481.3L660.0 482.4ZM662.0 469.8L664.5 468.9L664.5 471.0L662.0 472.0ZM662.0 476.0L664.5 475.0L664.5 480.2L662.0 481.3ZM664.0 468.9L666.5 468.0L666.5 470.1L664.0 471.0ZM664.0 475.0L666.5 474.0L666.5 480.6L664.0 481.7ZM666.0 468.0L668.5 467.0L668.5 469.1L666.0 470.1ZM666.0 474.0L668.5 473.0L668.5 481.0L666.0 482.2ZM668.0 467.0L670.5 466.1L670.5 468.2L668.0 469.1ZM668.0 473.0L670.5 472.0L670.5 479.9L668.0 481.0ZM670.0 466.1L672.5 465.2L672.5 467.2L670.0 468.2ZM670.0 472.0L672.5 471.0L672.5 481.7L670.0 482.9ZM672.0 465.2L674.5 464.3L674.5 466.3L672.0 467.2ZM672.0 471.0L674.5 470.0L674.5 476.3L672.0 477.4ZM672.0 478.2L674.5 477.1L674.5 483.5L672.0 484.6ZM674.0 464.3L676.5 463.4L676.5 465.4L674.0 466.3ZM674.0 470.0L676.5 469.0L676.5 475.2L674.0 476.3ZM674.0 478.6L676.5 477.5L676.5 486.5L674.0 487.7ZM676.0 463.4L678.5 462.4L678.5 464.4L676.0 465.4ZM676.0 469.0L678.5 468.0L678.5 474.1L676.0 475.2ZM676.0 480.3L678.5 479.1L678.5 486.7L676.0 487.9ZM678.0 462.4L680.5 461.4L680.5 463.4L678.0 464.4ZM678.0 468.0L680.5 466.9L680.5 473.0L678.0 474.1ZM678.0 476.3L680.5 475.2L680.5 484.0L678.0 485.3ZM680.0 461.4L682.5 460.4L682.5 462.4L680.0 463.4ZM680.0 466.9L682.5 465.9L682.5 470.6L680.0 471.7ZM680.0 472.4L682.5 471.3L682.5 478.7L680.0 479.9ZM682.0 459.1L684.5 458.1L684.5 461.4L682.0 462.4ZM682.0 465.9L684.5 464.8L684.5 469.4L682.0 470.6ZM682.0 471.3L684.5 470.2L684.5 473.5L682.0 474.6ZM684.0 458.1L686.5 457.2L686.5 460.5L684.0 461.4ZM684.0 466.2L686.5 465.3L686.5 471.3L684.0 472.1ZM686.0 457.2L688.5 456.5L688.5 458.5L686.0 459.2ZM686.0 465.3L688.5 464.6L688.5 469.3L686.0 469.9ZM688.0 456.5L690.5 455.8L690.5 457.7L688.0 458.5ZM688.0 465.9L690.5 465.3L690.5 468.6L688.0 469.3ZM690.0 455.8L692.5 455.1L692.5 457.0L690.0 457.7ZM690.0 463.9L692.5 463.2L692.5 466.6L690.0 467.2ZM692.0 455.1L694.5 454.3L694.5 456.3L692.0 457.0ZM692.0 463.2L694.5 462.6L694.5 465.9L692.0 466.6ZM694.0 454.3L696.5 453.6L696.5 455.6L694.0 456.3ZM694.0 462.6L696.5 461.9L696.5 463.9L694.0 464.5ZM696.0 453.6L698.5 452.8L698.5 454.8L696.0 455.6ZM696.0 460.5L698.5 459.8L698.5 463.1L696.0 463.9ZM698.0 451.4L700.5 450.6L700.5 454.0L698.0 454.8ZM698.0 459.8L700.5 459.0L700.5 462.4L698.0 463.1ZM700.0 450.6L702.5 449.7L702.5 453.1L700.0 454.0ZM700.0 459.0L702.5 458.2L702.5 461.6L700.0 462.4ZM702.0 449.7L704.5 448.8L704.5 452.2L702.0 453.1ZM702.0 458.2L704.5 457.3L704.5 459.4L702.0 460.2ZM704.0 448.8L706.5 447.8L706.5 449.8L704.0 450.8ZM704.0 457.3L706.5 456.4L706.5 458.4L704.0 459.4ZM706.0 446.4L708.5 445.4L708.5 448.9L706.0 449.8ZM706.0 456.4L708.5 455.4L708.5 457.4L706.0 458.4ZM708.0 445.4L710.5 444.4L710.5 447.9L708.0 448.9ZM708.0 455.4L710.5 454.4L710.5 456.5L708.0 457.4ZM710.0 443.0L712.5 442.0L712.5 445.5L710.0 446.4ZM710.0 454.4L712.5 453.5L712.5 455.5L710.0 456.5ZM712.0 440.5L714.5 439.6L714.5 445.9L712.0 446.9ZM712.0 452.0L714.5 451.1L714.5 454.6L712.0 455.5ZM714.0 439.6L716.5 438.6L716.5 446.4L714.0 447.4ZM714.0 451.1L716.5 450.1L716.5 453.6L714.0 454.6ZM716.0 435.7L718.5 434.9L718.5 445.5L716.0 446.4ZM716.0 450.1L718.5 449.3L718.5 451.3L716.0 452.2ZM718.0 432.0L720.5 431.2L720.5 437.5L718.0 438.3ZM718.0 439.2L720.5 438.4L720.5 444.7L718.0 445.5ZM718.0 449.3L720.5 448.4L720.5 450.4L718.0 451.3ZM720.0 425.4L722.5 424.7L722.5 435.3L720.0 436.1ZM720.0 438.4L722.5 437.5L722.5 443.9L720.0 444.7ZM720.0 448.4L722.5 447.6L722.5 449.6L720.0 450.4ZM722.0 424.7L724.5 423.9L724.5 430.2L722.0 431.0ZM722.0 437.5L724.5 436.7L724.5 443.0L722.0 443.9ZM722.0 447.6L724.5 446.7L724.5 448.7L722.0 449.6ZM724.0 423.9L726.5 423.1L726.5 425.1L724.0 425.9ZM724.0 435.3L726.5 434.5L726.5 442.2L724.0 443.0ZM724.0 446.7L726.5 445.9L726.5 447.9L724.0 448.7ZM726.0 434.5L728.5 433.7L728.5 441.4L726.0 442.2ZM726.0 445.9L728.5 445.0L728.5 447.1L726.0 447.9ZM728.0 433.7L730.5 432.9L730.5 440.6L728.0 441.4ZM728.0 445.0L730.5 444.3L730.5 446.3L728.0 447.1ZM730.0 432.9L732.5 432.1L732.5 439.9L730.0 440.6ZM730.0 444.3L732.5 443.6L732.5 445.6L730.0 446.3ZM732.0 432.1L734.5 431.3L734.5 439.1L732.0 439.9ZM732.0 443.6L734.5 442.8L734.5 444.9L732.0 445.6ZM734.0 431.3L736.5 430.5L736.5 438.4L734.0 439.1ZM734.0 442.8L736.5 442.1L736.5 444.1L734.0 444.9ZM736.0 430.5L738.5 429.8L738.5 437.6L736.0 438.4ZM736.0 442.1L738.5 441.4L738.5 443.4L736.0 444.1ZM738.0 429.8L740.5 429.0L740.5 436.9L738.0 437.6ZM738.0 441.4L740.5 440.6L740.5 442.7L738.0 443.4ZM740.0 429.0L742.5 428.2L742.5 436.1L740.0 436.9ZM740.0 440.6L742.5 439.9L742.5 442.0L740.0 442.7ZM742.0 429.7L744.5 428.9L744.5 435.4L742.0 436.1ZM742.0 439.9L744.5 439.2L744.5 441.2L742.0 442.0ZM744.0 428.9L746.5 428.0L746.5 434.5L744.0 435.4ZM744.0 439.2L746.5 438.3L746.5 440.4L744.0 441.2ZM746.0 428.0L748.5 426.9L748.5 433.5L746.0 434.5ZM746.0 438.3L748.5 437.4L748.5 439.5L746.0 440.4ZM748.0 426.9L750.5 425.8L750.5 432.5L748.0 433.5ZM748.0 437.4L750.5 436.4L750.5 438.5L748.0 439.5ZM750.0 412.1L752.5 410.8L752.5 416.0L750.0 417.3ZM750.0 427.3L752.5 426.2L752.5 431.4L750.0 432.5ZM750.0 436.4L752.5 435.5L752.5 439.1L750.0 440.1ZM752.0 410.8L754.5 409.5L754.5 417.9L752.0 419.1ZM752.0 426.2L754.5 425.1L754.5 428.9L752.0 429.9ZM752.0 435.5L754.5 434.5L754.5 438.2L752.0 439.1ZM754.0 411.1L756.5 409.8L756.5 419.9L754.0 421.1ZM754.0 436.1L756.5 435.1L756.5 437.3L754.0 438.2ZM756.0 414.6L758.5 413.4L758.5 420.4L756.0 421.5ZM756.0 435.1L758.5 434.2L758.5 436.4L756.0 437.3ZM758.0 416.6L760.5 415.4L760.5 420.9L758.0 422.0ZM758.0 434.2L760.5 433.3L760.5 435.5L758.0 436.4ZM760.0 417.1L762.5 416.2L762.5 421.7L760.0 422.5ZM760.0 433.3L762.5 432.5L762.5 434.8L760.0 435.5ZM762.0 417.9L764.5 417.1L764.5 420.9L762.0 421.7ZM762.0 432.5L764.5 431.8L764.5 434.0L762.0 434.8ZM764.0 418.7L766.5 417.9L766.5 421.8L764.0 422.6ZM764.0 431.8L766.5 431.0L766.5 434.9L764.0 435.6ZM766.0 417.9L768.5 417.1L768.5 421.0L766.0 421.8ZM766.0 431.0L768.5 430.3L768.5 434.2L766.0 434.9ZM768.0 418.7L770.5 417.9L770.5 421.8L768.0 422.6ZM768.0 430.3L770.5 429.5L770.5 433.4L768.0 434.2ZM770.0 417.9L772.5 417.1L772.5 421.0L770.0 421.8ZM770.0 431.2L772.5 430.4L772.5 432.7L770.0 433.4ZM772.0 418.8L774.5 418.0L774.5 420.3L772.0 421.0ZM772.0 430.4L774.5 429.7L774.5 433.6L772.0 434.3ZM774.0 418.0L776.5 417.2L776.5 421.1L774.0 421.9ZM774.0 429.7L776.5 428.9L776.5 432.9L774.0 433.6ZM776.0 417.2L778.5 416.4L778.5 420.4L776.0 421.1ZM776.0 430.6L778.5 429.9L778.5 433.8L776.0 434.6ZM778.0 416.4L780.5 415.6L780.5 419.6L778.0 420.4ZM778.0 429.9L780.5 429.1L780.5 433.1L778.0 433.8ZM780.0 417.3L782.5 416.5L782.5 418.8L780.0 419.6ZM780.0 430.8L782.5 430.1L782.5 434.1L780.0 434.8ZM782.0 416.5L784.5 415.7L784.5 418.0L782.0 418.8ZM782.0 431.8L784.5 431.0L784.5 435.1L782.0 435.8ZM784.0 415.7L786.5 414.9L786.5 417.2L784.0 418.0ZM784.0 431.0L786.5 430.3L786.5 439.5L784.0 440.2ZM786.0 414.9L788.5 414.2L788.5 416.5L786.0 417.2ZM786.0 433.7L788.5 433.0L788.5 443.9L786.0 444.6ZM788.0 414.2L790.5 413.4L790.5 415.7L788.0 416.5ZM788.0 436.5L790.5 435.8L790.5 445.1L788.0 445.6ZM790.0 413.4L792.5 412.8L792.5 416.9L790.0 417.5ZM790.0 439.3L792.5 438.8L792.5 444.6L790.0 445.1ZM792.0 414.6L794.5 414.0L794.5 416.3L792.0 416.9ZM792.0 421.5L794.5 421.0L794.5 425.0L792.0 425.6ZM794.0 414.0L796.5 413.5L796.5 415.8L794.0 416.3ZM794.0 421.0L796.5 420.4L796.5 426.3L794.0 426.8ZM796.0 413.5L798.5 412.9L798.5 415.2L796.0 415.8ZM796.0 420.4L798.5 419.9L798.5 425.7L796.0 426.3ZM798.0 412.9L800.5 412.3L800.5 414.7L798.0 415.2ZM798.0 419.9L800.5 419.3L800.5 427.0L798.0 427.5ZM800.0 412.3L802.5 411.8L802.5 414.1L800.0 414.7ZM800.0 419.3L802.5 418.8L802.5 426.5L800.0 427.0ZM802.0 411.8L804.5 411.3L804.5 413.7L802.0 414.1ZM802.0 418.8L804.5 418.4L804.5 426.2L802.0 426.5ZM804.0 411.3L806.5 410.9L806.5 413.3L804.0 413.7ZM804.0 418.4L806.5 418.1L806.5 427.6L804.0 427.9ZM806.0 410.9L808.5 410.5L808.5 412.9L806.0 413.3ZM806.0 418.1L808.5 417.7L808.5 427.4L806.0 427.6ZM808.0 410.5L810.5 410.1L810.5 412.5L808.0 412.9ZM808.0 415.9L810.5 415.5L810.5 427.1L808.0 427.4ZM810.0 410.1L812.5 409.6L812.5 412.1L810.0 412.5ZM810.0 415.5L812.5 415.1L812.5 426.8L810.0 427.1ZM812.0 409.6L814.5 409.2L814.5 411.7L812.0 412.1ZM812.0 415.1L814.5 414.8L814.5 428.4L812.0 428.6ZM814.0 409.2L816.5 408.8L816.5 411.2L814.0 411.7ZM814.0 414.8L816.5 414.4L816.5 428.1L814.0 428.4ZM816.0 408.8L818.5 408.3L818.5 410.8L816.0 411.2ZM816.0 414.4L818.5 414.0L818.5 427.8L816.0 428.1ZM818.0 408.3L820.5 407.9L820.5 410.4L818.0 410.8ZM818.0 414.0L820.5 413.6L820.5 427.5L818.0 427.8ZM820.0 407.9L822.5 407.5L822.5 410.0L820.0 410.4ZM820.0 413.6L822.5 413.2L822.5 427.3L820.0 427.5ZM822.0 407.5L824.5 407.1L824.5 409.6L822.0 410.0ZM822.0 413.2L824.5 412.9L824.5 427.0L822.0 427.3ZM822.0 438.2L824.5 438.0L824.5 440.6L822.0 440.7ZM824.0 407.1L826.5 406.6L826.5 409.2L824.0 409.6ZM824.0 412.9L826.5 412.5L826.5 418.9L824.0 419.3ZM824.0 420.6L826.5 420.3L826.5 426.7L824.0 427.0ZM824.0 430.3L826.5 430.0L826.5 440.4L824.0 440.6ZM826.0 406.6L828.5 406.2L828.5 408.8L826.0 409.2ZM826.0 412.5L828.5 412.1L828.5 418.6L826.0 418.9ZM826.0 420.3L828.5 420.0L828.5 440.2L826.0 440.4ZM828.0 406.2L830.5 405.8L830.5 408.3L828.0 408.8ZM828.0 412.1L830.5 411.7L830.5 432.2L828.0 432.4ZM830.0 405.8L832.5 405.3L832.5 407.9L830.0 408.3ZM830.0 411.7L832.5 411.3L832.5 425.9L830.0 426.2ZM832.0 405.3L834.5 404.9L834.5 407.5L832.0 407.9ZM832.0 411.3L834.5 411.0L834.5 423.6L832.0 423.9ZM834.0 404.9L836.5 404.5L836.5 407.2L834.0 407.5ZM834.0 411.0L836.5 410.6L836.5 421.4L834.0 421.6ZM836.0 404.5L838.5 404.2L838.5 406.8L836.0 407.2ZM836.0 410.6L838.5 410.3L838.5 421.1L836.0 421.4ZM838.0 404.2L840.5 403.8L840.5 406.5L838.0 406.8ZM838.0 410.3L840.5 410.0L840.5 418.8L838.0 419.1ZM840.0 403.8L842.5 403.4L842.5 406.1L840.0 406.5ZM840.0 410.0L842.5 409.6L842.5 418.5L840.0 418.8ZM842.0 403.4L844.5 403.0L844.5 405.7L842.0 406.1ZM842.0 409.6L844.5 409.2L844.5 416.0L842.0 416.4ZM844.0 403.0L846.5 402.6L846.5 405.3L844.0 405.7ZM844.0 411.3L846.5 410.9L846.5 415.7L844.0 416.0ZM846.0 402.6L848.5 402.2L848.5 404.9L846.0 405.3ZM846.0 410.9L848.5 410.6L848.5 413.3L846.0 413.6ZM848.0 402.2L850.5 401.8L850.5 404.5L848.0 404.9ZM848.0 410.6L850.5 410.2L850.5 412.9L848.0 413.3ZM850.0 401.8L852.5 401.4L852.5 404.1L850.0 404.5ZM850.0 410.2L852.5 409.9L852.5 412.6L850.0 412.9ZM852.0 401.4L854.5 401.0L854.5 403.8L852.0 404.1ZM852.0 409.9L854.5 409.5L854.5 412.2L852.0 412.6ZM854.0 401.0L856.5 400.6L856.5 403.4L854.0 403.8ZM854.0 409.5L856.5 409.1L856.5 411.8L854.0 412.2ZM856.0 400.6L858.5 400.2L858.5 402.9L856.0 403.4ZM856.0 407.0L858.5 406.6L858.5 411.4L856.0 411.8ZM858.0 400.2L860.5 399.8L860.5 402.5L858.0 402.9ZM858.0 406.6L860.5 406.2L860.5 408.9L858.0 409.3ZM860.0 397.6L862.5 397.2L862.5 402.1L860.0 402.5ZM860.0 406.2L862.5 405.7L862.5 408.5L860.0 408.9ZM862.0 397.2L864.5 396.7L864.5 399.5L862.0 399.9ZM862.0 405.7L864.5 405.3L864.5 408.0L862.0 408.5ZM864.0 396.7L866.5 396.3L866.5 399.0L864.0 399.5ZM864.0 405.3L866.5 404.9L866.5 407.6L864.0 408.0ZM866.0 396.3L868.5 395.8L868.5 398.6L866.0 399.0ZM866.0 404.9L868.5 404.4L868.5 407.2L866.0 407.6ZM868.0 395.8L870.5 395.4L870.5 400.3L868.0 400.7ZM868.0 404.4L870.5 404.0L870.5 406.8L868.0 407.2ZM870.0 395.4L872.5 394.9L872.5 399.9L870.0 400.3ZM870.0 404.0L872.5 403.6L872.5 406.4L870.0 406.8ZM872.0 392.8L874.5 392.3L874.5 399.4L872.0 399.9ZM872.0 403.6L874.5 403.2L874.5 405.9L872.0 406.4ZM874.0 392.3L876.5 391.9L876.5 399.0L874.0 399.4ZM874.0 403.2L876.5 402.7L876.5 405.5L874.0 405.9ZM876.0 394.0L878.5 393.5L878.5 398.4L876.0 399.0ZM876.0 402.7L878.5 402.2L878.5 405.0L876.0 405.5ZM878.0 393.5L880.5 392.8L880.5 397.8L878.0 398.4ZM878.0 402.2L880.5 401.6L880.5 404.4L878.0 405.0ZM880.0 392.8L882.5 392.1L882.5 397.1L880.0 397.8ZM880.0 401.6L882.5 401.0L882.5 403.8L880.0 404.4ZM882.0 392.1L884.5 391.4L884.5 396.5L882.0 397.1ZM882.0 401.0L884.5 400.4L884.5 403.2L882.0 403.8ZM884.0 391.4L886.5 390.7L886.5 395.8L884.0 396.5ZM884.0 400.4L886.5 399.8L886.5 402.6L884.0 403.2ZM886.0 390.7L888.5 390.0L888.5 395.2L886.0 395.8ZM886.0 399.8L888.5 399.2L888.5 402.0L886.0 402.6ZM888.0 390.0L890.5 389.6L890.5 394.7L888.0 395.2ZM888.0 399.2L890.5 398.7L890.5 401.6L888.0 402.0ZM890.0 378.1L892.5 377.5L892.5 380.4L890.0 381.0ZM890.0 389.6L892.5 388.9L892.5 394.1L890.0 394.7ZM890.0 398.7L892.5 398.0L892.5 400.9L890.0 401.6ZM892.0 375.2L894.5 374.6L894.5 382.0L892.0 382.7ZM892.0 388.9L894.5 388.2L894.5 393.4L892.0 394.1ZM892.0 398.0L894.5 397.3L894.5 400.2L892.0 400.9ZM894.0 370.0L896.5 369.4L896.5 381.4L894.0 382.0ZM894.0 388.2L896.5 387.6L896.5 392.7L894.0 393.4ZM894.0 397.3L896.5 396.7L896.5 399.5L894.0 400.2ZM896.0 362.6L898.5 362.0L898.5 380.7L896.0 381.4ZM896.0 385.3L898.5 384.7L898.5 392.1L896.0 392.7ZM896.0 396.7L898.5 396.0L898.5 398.8L896.0 399.5ZM898.0 359.8L900.5 359.2L900.5 371.1L898.0 371.7ZM898.0 375.6L900.5 375.0L900.5 382.4L898.0 383.0ZM898.0 384.7L900.5 384.0L900.5 391.4L898.0 392.1ZM898.0 396.0L900.5 395.3L900.5 398.2L898.0 398.8ZM900.0 359.2L902.5 358.6L902.5 366.0L900.0 366.6ZM900.0 375.0L902.5 374.4L902.5 390.7L900.0 391.4ZM900.0 395.3L902.5 394.6L902.5 397.5L900.0 398.2ZM902.0 374.4L904.5 373.7L904.5 390.1L902.0 390.7ZM902.0 394.6L904.5 393.9L904.5 396.8L902.0 397.5ZM904.0 373.7L906.5 373.1L906.5 387.2L904.0 387.8ZM904.0 393.9L906.5 393.3L906.5 396.1L904.0 396.8ZM906.0 375.4L908.5 374.7L908.5 386.5L906.0 387.2ZM906.0 393.3L908.5 392.6L908.5 395.4L906.0 396.1ZM908.0 374.7L910.5 374.1L910.5 385.8L908.0 386.5ZM908.0 392.6L910.5 391.9L910.5 394.7L908.0 395.4ZM910.0 374.1L912.5 373.4L912.5 385.1L910.0 385.8ZM910.0 391.9L912.5 391.1L912.5 394.0L910.0 394.7ZM912.0 375.6L914.5 376.0L914.5 385.2L912.0 385.1ZM912.0 391.1L914.5 391.0L914.5 393.7L912.0 394.0ZM914.0 378.1L916.5 378.4L916.5 385.2L914.0 385.2ZM914.0 391.0L916.5 390.9L916.5 395.6L914.0 395.9ZM916.0 380.5L918.5 380.6L918.5 383.3L916.0 383.1ZM916.0 392.9L918.5 392.7L918.5 395.3L916.0 395.6ZM918.0 392.7L920.5 392.5L920.5 395.1L918.0 395.3ZM920.0 392.5L922.5 392.3L922.5 394.8L920.0 395.1ZM922.0 392.3L924.5 392.1L924.5 394.5L922.0 394.8ZM924.0 392.1L926.5 391.9L926.5 394.2L924.0 394.5ZM926.0 391.9L928.5 391.7L928.5 395.6L926.0 396.0ZM928.0 391.7L930.5 391.5L930.5 395.3L928.0 395.6ZM930.0 393.1L932.5 392.8L932.5 396.5L930.0 396.9ZM932.0 392.8L934.5 392.5L934.5 396.1L932.0 396.5ZM934.0 392.5L936.5 392.1L936.5 396.9L934.0 397.5ZM936.0 393.5L938.5 392.8L938.5 396.0L936.0 396.9ZM938.0 394.1L940.5 393.4L940.5 396.4L938.0 397.4ZM940.0 393.4L942.5 392.6L942.5 396.7L940.0 397.7ZM942.0 394.9L944.5 394.0L944.5 398.8L942.0 400.1ZM944.0 395.1L946.5 394.0L946.5 401.5L944.0 403.1ZM946.0 396.0L948.5 394.8L948.5 399.9L946.0 401.5ZM948.0 398.4L950.5 396.9L950.5 398.3L948.0 399.9Z"/>
<path fill="#0082ff" d="M456.0 516.0L458.5 514.9L458.5 515.9L456.0 516.9ZM456.0 526.0L458.5 526.2L458.5 527.2L456.0 527.0ZM458.0 514.9L460.5 513.8L460.5 515.7L458.0 516.7ZM458.0 525.4L460.5 525.5L460.5 527.4L458.0 527.2ZM460.0 513.8L462.5 512.7L462.5 515.7L460.0 516.6ZM460.0 524.7L462.5 524.7L462.5 527.7L460.0 527.4ZM462.0 513.2L464.5 512.1L464.5 516.9L462.0 517.6ZM462.0 522.8L464.5 522.6L464.5 527.4L462.0 527.2ZM464.0 513.7L466.5 512.8L466.5 525.9L464.0 525.8ZM466.0 515.6L468.5 514.9L468.5 522.9L466.0 523.0ZM486.0 499.1L488.5 497.8L488.5 501.7L486.0 502.8ZM488.0 497.8L490.5 496.5L490.5 502.8L488.0 503.8ZM488.0 529.4L490.5 529.7L490.5 531.5L488.0 531.1ZM490.0 497.6L492.5 496.4L492.5 504.2L490.0 505.1ZM490.0 527.4L492.5 527.7L492.5 531.9L490.0 531.5ZM492.0 500.0L494.5 498.9L494.5 504.6L492.0 505.4ZM492.0 526.5L494.5 526.6L494.5 532.3L492.0 531.9ZM494.0 501.4L496.5 500.5L496.5 505.0L494.0 505.8ZM494.0 525.4L496.5 525.5L496.5 531.4L494.0 531.0ZM496.0 501.8L498.5 500.9L498.5 504.2L496.0 505.0ZM496.0 524.2L498.5 524.2L498.5 528.9L496.0 528.7ZM498.0 502.3L500.5 501.4L500.5 504.9L498.0 505.6ZM498.0 524.2L500.5 524.3L500.5 527.7L498.0 527.6ZM500.0 501.4L502.5 500.5L502.5 504.1L500.0 504.9ZM500.0 522.8L502.5 522.8L502.5 527.9L500.0 527.7ZM502.0 502.0L504.5 501.2L504.5 504.9L502.0 505.6ZM502.0 522.8L504.5 522.8L504.5 526.5L502.0 526.4ZM504.0 501.2L506.5 500.6L506.5 504.4L504.0 504.9ZM504.0 521.3L506.5 521.3L506.5 525.1L504.0 525.0ZM506.0 502.2L508.5 501.8L508.5 504.1L506.0 504.4ZM506.0 521.3L508.5 521.4L508.5 525.3L506.0 525.1ZM508.0 501.8L510.5 501.5L510.5 503.7L508.0 504.1ZM508.0 521.4L510.5 521.5L510.5 525.4L508.0 525.3ZM510.0 501.5L512.5 501.1L512.5 505.1L510.0 505.4ZM510.0 521.5L512.5 521.6L512.5 523.9L510.0 523.8ZM512.0 502.8L514.5 502.4L514.5 504.8L512.0 505.1ZM512.0 521.6L514.5 521.7L514.5 524.0L512.0 523.9ZM514.0 502.4L516.5 502.1L516.5 504.5L514.0 504.8ZM514.0 519.9L516.5 520.0L516.5 524.1L514.0 524.0ZM516.0 502.1L518.5 501.8L518.5 504.2L516.0 504.5ZM516.0 520.0L518.5 520.0L518.5 524.2L516.0 524.1ZM518.0 501.8L520.5 501.4L520.5 503.9L518.0 504.2ZM518.0 520.0L520.5 520.0L520.5 524.4L518.0 524.2ZM520.0 501.4L522.5 501.1L522.5 503.6L520.0 503.9ZM520.0 520.0L522.5 520.1L522.5 524.5L520.0 524.4ZM522.0 501.1L524.5 500.4L524.5 503.0L522.0 503.6ZM522.0 520.1L524.5 519.6L524.5 524.0L522.0 524.5ZM524.0 502.4L526.5 501.7L526.5 504.3L524.0 504.9ZM524.0 519.6L526.5 519.1L526.5 523.5L524.0 524.0ZM526.0 501.7L528.5 501.1L528.5 503.7L526.0 504.3ZM526.0 519.1L528.5 518.6L528.5 523.0L526.0 523.5ZM528.0 501.1L530.5 500.5L530.5 503.1L528.0 503.7ZM528.0 518.6L530.5 518.1L530.5 522.6L528.0 523.0ZM530.0 500.5L532.5 499.9L532.5 502.4L530.0 503.1ZM530.0 520.0L532.5 519.5L532.5 522.1L530.0 522.6ZM532.0 499.9L534.5 499.3L534.5 501.8L532.0 502.4ZM532.0 519.5L534.5 519.0L534.5 521.6L532.0 522.1ZM534.0 499.3L536.5 498.6L536.5 501.2L534.0 501.8ZM534.0 519.0L536.5 518.5L536.5 523.1L534.0 523.6ZM536.0 498.6L538.5 498.0L538.5 500.6L536.0 501.2ZM536.0 518.5L538.5 518.0L538.5 522.6L536.0 523.1ZM538.0 498.0L540.5 497.4L540.5 500.0L538.0 500.6ZM538.0 518.0L540.5 517.5L540.5 522.2L538.0 522.6ZM540.0 497.4L542.5 496.8L542.5 499.4L540.0 500.0ZM540.0 519.6L542.5 519.1L542.5 523.7L540.0 524.2ZM542.0 496.8L544.5 496.2L544.5 498.8L542.0 499.4ZM542.0 519.1L544.5 518.6L544.5 525.3L542.0 525.7ZM544.0 496.2L546.5 495.7L546.5 498.4L544.0 498.8ZM544.0 520.6L546.5 520.2L546.5 524.9L544.0 525.3ZM546.0 495.7L548.5 495.3L548.5 497.9L546.0 498.4ZM546.0 520.2L548.5 519.8L548.5 526.5L546.0 526.9ZM548.0 495.3L550.5 494.8L550.5 497.5L548.0 497.9ZM548.0 521.8L550.5 521.4L550.5 530.2L548.0 530.6ZM550.0 494.8L552.5 494.4L552.5 497.0L550.0 497.5ZM550.0 523.5L552.5 523.1L552.5 531.9L550.0 532.3ZM552.0 494.4L554.5 493.9L554.5 496.6L552.0 497.0ZM552.0 525.1L554.5 524.7L554.5 531.5L552.0 531.9ZM554.0 493.9L556.5 493.5L556.5 496.1L554.0 496.6ZM554.0 528.8L556.5 528.4L556.5 531.1L554.0 531.5ZM556.0 493.5L558.5 493.0L558.5 495.7L556.0 496.1ZM556.0 522.3L558.5 521.9L558.5 530.7L556.0 531.1ZM558.0 493.0L560.5 492.6L560.5 495.2L558.0 495.7ZM558.0 517.7L560.5 517.3L560.5 530.3L558.0 530.7ZM560.0 492.6L562.5 492.2L562.5 494.9L560.0 495.2ZM560.0 513.2L562.5 512.9L562.5 523.8L560.0 524.1ZM562.0 492.2L564.5 491.8L564.5 494.5L562.0 494.9ZM562.0 512.9L564.5 512.6L564.5 519.4L562.0 519.7ZM564.0 491.8L566.5 491.4L566.5 494.1L564.0 494.5ZM564.0 510.5L566.5 510.2L566.5 515.0L564.0 515.3ZM566.0 491.4L568.5 491.0L568.5 493.7L566.0 494.1ZM566.0 508.1L568.5 507.8L568.5 512.6L566.0 512.9ZM568.0 491.0L570.5 490.6L570.5 493.3L568.0 493.7ZM568.0 507.8L570.5 507.5L570.5 512.3L568.0 512.6ZM570.0 490.6L572.5 490.3L572.5 493.0L570.0 493.3ZM570.0 507.5L572.5 507.1L572.5 509.9L570.0 510.2ZM572.0 490.3L574.5 489.9L574.5 492.6L572.0 493.0ZM572.0 505.0L574.5 504.7L574.5 509.5L572.0 509.9ZM574.0 487.7L576.5 487.3L576.5 490.1L574.0 490.5ZM574.0 504.7L576.5 504.4L576.5 507.1L574.0 507.4ZM576.0 487.3L578.5 487.1L578.5 489.8L576.0 490.1ZM576.0 504.4L578.5 504.1L578.5 506.8L576.0 507.1ZM578.0 487.1L580.5 486.9L580.5 489.6L578.0 489.8ZM578.0 502.0L580.5 501.8L580.5 506.6L578.0 506.8ZM580.0 486.9L582.5 486.7L582.5 489.4L580.0 489.6ZM580.0 501.8L582.5 501.6L582.5 504.3L580.0 504.5ZM582.0 486.7L584.5 486.5L584.5 489.3L582.0 489.4ZM582.0 501.6L584.5 501.4L584.5 504.1L582.0 504.3ZM584.0 486.5L586.5 486.3L586.5 489.0L584.0 489.3ZM584.0 501.4L586.5 501.1L586.5 503.8L584.0 504.1ZM586.0 484.2L588.5 483.9L588.5 488.7L586.0 489.0ZM586.0 501.1L588.5 500.7L588.5 503.3L586.0 503.8ZM588.0 483.9L590.5 483.6L590.5 486.3L588.0 486.6ZM588.0 500.7L590.5 500.2L590.5 502.9L588.0 503.3ZM590.0 483.6L592.5 483.3L592.5 486.0L590.0 486.3ZM590.0 498.2L592.5 497.8L592.5 502.5L590.0 502.9ZM592.0 481.2L594.5 481.0L594.5 485.7L592.0 486.0ZM592.0 497.8L594.5 497.4L594.5 500.0L592.0 500.4ZM594.0 481.0L596.5 480.7L596.5 485.4L594.0 485.7ZM594.0 497.4L596.5 496.9L596.5 499.6L594.0 500.0ZM596.0 478.7L598.5 478.4L598.5 483.0L596.0 483.3ZM596.0 496.9L598.5 496.5L598.5 499.2L596.0 499.6ZM598.0 478.4L600.5 478.1L600.5 482.7L598.0 483.0ZM598.0 496.5L600.5 496.1L600.5 498.7L598.0 499.2ZM600.0 476.1L602.5 475.7L602.5 480.3L600.0 480.7ZM600.0 496.1L602.5 495.7L602.5 498.2L600.0 498.7ZM602.0 473.7L604.5 473.4L604.5 479.9L602.0 480.3ZM602.0 495.7L604.5 495.2L604.5 497.8L602.0 498.2ZM604.0 469.4L606.5 469.1L606.5 477.6L604.0 478.0ZM604.0 495.2L606.5 494.7L606.5 497.3L604.0 497.8ZM606.0 463.2L608.5 462.9L608.5 475.3L606.0 475.6ZM606.0 494.7L608.5 494.3L608.5 496.8L606.0 497.3ZM608.0 461.0L610.5 460.7L610.5 471.0L608.0 471.4ZM608.0 494.3L610.5 493.8L610.5 496.4L608.0 496.8ZM610.0 460.7L612.5 460.4L612.5 466.8L610.0 467.1ZM610.0 493.8L612.5 493.3L612.5 495.9L610.0 496.4ZM612.0 493.3L614.5 492.9L614.5 495.4L612.0 495.9ZM614.0 492.9L616.5 492.4L616.5 494.9L614.0 495.4ZM616.0 492.4L618.5 492.0L618.5 494.5L616.0 494.9ZM618.0 492.0L620.5 491.4L620.5 493.9L618.0 494.5ZM620.0 491.4L622.5 490.8L622.5 493.3L620.0 493.9ZM622.0 490.8L624.5 490.3L624.5 492.7L622.0 493.3ZM624.0 458.8L626.5 458.5L626.5 466.4L624.0 466.8ZM624.0 490.3L626.5 489.7L626.5 492.2L624.0 492.7ZM626.0 458.5L628.5 458.2L628.5 469.8L626.0 470.1ZM626.0 489.7L628.5 489.2L628.5 491.6L626.0 492.2ZM628.0 463.7L630.5 463.4L630.5 473.0L628.0 473.4ZM628.0 489.2L630.5 488.6L630.5 491.0L628.0 491.6ZM630.0 467.0L632.5 466.6L632.5 472.6L630.0 473.0ZM630.0 488.6L632.5 488.1L632.5 490.5L630.0 491.0ZM632.0 470.2L634.5 469.8L634.5 473.9L632.0 474.4ZM632.0 488.1L634.5 487.5L634.5 489.9L632.0 490.5ZM634.0 471.6L636.5 471.2L636.5 475.3L634.0 475.7ZM634.0 487.5L636.5 487.0L636.5 489.3L634.0 489.9ZM636.0 471.2L638.5 470.8L638.5 474.8L636.0 475.3ZM636.0 487.0L638.5 486.4L638.5 488.8L636.0 489.3ZM638.0 472.5L640.5 472.1L640.5 476.1L638.0 476.6ZM638.0 486.4L640.5 485.9L640.5 489.9L638.0 490.5ZM640.0 472.1L642.5 471.7L642.5 475.7L640.0 476.1ZM640.0 487.6L642.5 487.0L642.5 489.3L640.0 489.9ZM642.0 473.4L644.5 472.7L644.5 475.0L642.0 475.7ZM642.0 487.0L644.5 486.3L644.5 488.6L642.0 489.3ZM644.0 472.7L646.5 472.0L646.5 474.3L644.0 475.0ZM644.0 486.3L646.5 485.6L646.5 487.9L644.0 488.6ZM646.0 472.0L648.5 471.3L648.5 475.3L646.0 476.0ZM646.0 485.6L648.5 484.8L648.5 487.1L646.0 487.9ZM648.0 473.0L650.5 472.1L650.5 474.4L648.0 475.3ZM648.0 484.8L650.5 483.8L650.5 486.1L648.0 487.1ZM650.0 472.1L652.5 471.2L652.5 473.4L650.0 474.4ZM650.0 483.8L652.5 482.8L652.5 486.7L650.0 487.8ZM652.0 471.2L654.5 470.3L654.5 472.5L652.0 473.4ZM652.0 484.4L654.5 483.4L654.5 485.6L652.0 486.7ZM654.0 470.3L656.5 469.4L656.5 471.6L654.0 472.5ZM654.0 483.4L656.5 482.3L656.5 484.5L654.0 485.6ZM656.0 469.4L658.5 468.5L658.5 470.7L656.0 471.6ZM656.0 482.3L658.5 481.3L658.5 485.0L656.0 486.1ZM658.0 468.5L660.5 467.6L660.5 469.8L658.0 470.7ZM658.0 482.8L660.5 481.8L660.5 483.9L658.0 485.0ZM660.0 467.6L662.5 466.7L662.5 468.9L660.0 469.8ZM660.0 481.8L662.5 480.7L662.5 484.4L660.0 485.5ZM662.0 466.7L664.5 465.8L664.5 469.5L662.0 470.4ZM662.0 480.7L664.5 479.6L664.5 483.3L662.0 484.4ZM664.0 467.4L666.5 466.5L666.5 468.6L664.0 469.5ZM664.0 481.1L666.5 480.0L666.5 483.7L664.0 484.8ZM666.0 466.5L668.5 465.5L668.5 467.6L666.0 468.6ZM666.0 481.6L668.5 480.4L668.5 485.5L666.0 486.7ZM668.0 465.5L670.5 464.6L670.5 466.7L668.0 467.6ZM668.0 480.4L670.5 479.3L670.5 487.3L668.0 488.5ZM670.0 464.6L672.5 463.7L672.5 465.8L670.0 466.7ZM670.0 482.3L672.5 481.1L672.5 490.4L670.0 491.7ZM672.0 463.7L674.5 462.8L674.5 464.9L672.0 465.8ZM672.0 484.0L674.5 482.9L674.5 489.2L672.0 490.4ZM674.0 462.8L676.5 461.9L676.5 464.0L674.0 464.9ZM674.0 487.1L676.5 485.9L676.5 487.9L674.0 489.2ZM676.0 461.9L678.5 461.0L678.5 463.0L676.0 464.0ZM678.0 461.0L680.5 460.0L680.5 462.0L678.0 463.0ZM678.0 484.7L680.5 483.4L680.5 485.4L678.0 486.7ZM680.0 458.7L682.5 457.7L682.5 461.0L680.0 462.0ZM680.0 479.3L682.5 478.1L682.5 484.2L680.0 485.4ZM682.0 457.7L684.5 456.7L684.5 458.7L682.0 459.7ZM682.0 474.0L684.5 472.9L684.5 482.9L682.0 484.2ZM684.0 456.7L686.5 455.9L686.5 457.8L684.0 458.7ZM684.0 471.5L686.5 470.7L686.5 478.0L684.0 478.9ZM686.0 455.9L688.5 455.2L688.5 457.1L686.0 457.8ZM686.0 469.3L688.5 468.7L688.5 473.3L686.0 473.9ZM688.0 455.2L690.5 454.4L690.5 456.4L688.0 457.1ZM688.0 468.7L690.5 468.0L690.5 471.3L688.0 472.0ZM690.0 454.4L692.5 453.7L692.5 455.7L690.0 456.4ZM690.0 466.6L692.5 466.0L692.5 469.3L690.0 469.9ZM692.0 453.7L694.5 453.0L694.5 454.9L692.0 455.7ZM692.0 466.0L694.5 465.3L694.5 468.6L692.0 469.3ZM694.0 453.0L696.5 452.2L696.5 454.2L694.0 454.9ZM694.0 463.9L696.5 463.3L696.5 466.6L694.0 467.3ZM696.0 450.9L698.5 450.1L698.5 453.4L696.0 454.2ZM696.0 463.3L698.5 462.5L698.5 465.9L696.0 466.6ZM698.0 450.1L700.5 449.2L700.5 451.2L698.0 452.0ZM698.0 462.5L700.5 461.8L700.5 463.8L698.0 464.5ZM700.0 449.2L702.5 448.3L702.5 450.3L700.0 451.2ZM700.0 461.8L702.5 461.0L702.5 463.0L700.0 463.8ZM702.0 446.9L704.5 445.9L704.5 449.4L702.0 450.3ZM702.0 459.6L704.5 458.8L704.5 462.2L702.0 463.0ZM704.0 445.9L706.5 445.0L706.5 448.4L704.0 449.4ZM704.0 458.8L706.5 457.8L706.5 459.8L704.0 460.8ZM706.0 443.5L708.5 442.5L708.5 446.0L706.0 447.0ZM706.0 457.8L708.5 456.8L708.5 458.9L706.0 459.8ZM708.0 442.5L710.5 441.5L710.5 445.0L708.0 446.0ZM708.0 456.8L710.5 455.9L710.5 457.9L708.0 458.9ZM710.0 440.1L712.5 439.1L712.5 442.6L710.0 443.6ZM710.0 455.9L712.5 454.9L712.5 457.0L710.0 457.9ZM712.0 436.2L714.5 435.2L714.5 440.2L712.0 441.1ZM712.0 454.9L714.5 454.0L714.5 456.0L712.0 457.0ZM714.0 432.3L716.5 431.3L716.5 439.2L714.0 440.2ZM714.0 454.0L716.5 453.0L716.5 455.0L714.0 456.0ZM716.0 427.0L718.5 426.2L718.5 435.5L716.0 436.3ZM716.0 451.6L718.5 450.7L718.5 452.7L716.0 453.6ZM718.0 426.2L720.5 425.4L720.5 431.8L718.0 432.6ZM718.0 450.7L720.5 449.8L720.5 451.9L718.0 452.7ZM720.0 449.8L722.5 449.0L722.5 451.0L720.0 451.9ZM722.0 449.0L724.5 448.1L724.5 450.2L722.0 451.0ZM724.0 448.1L726.5 447.3L726.5 449.3L724.0 450.2ZM726.0 447.3L728.5 446.5L728.5 448.5L726.0 449.3ZM728.0 446.5L730.5 445.7L730.5 447.8L728.0 448.5ZM730.0 445.7L732.5 445.0L732.5 447.0L730.0 447.8ZM732.0 445.0L734.5 444.3L734.5 446.3L732.0 447.0ZM734.0 444.3L736.5 443.5L736.5 445.6L734.0 446.3ZM736.0 443.5L738.5 442.8L738.5 444.9L736.0 445.6ZM738.0 442.8L740.5 442.1L740.5 444.1L738.0 444.9ZM740.0 442.1L742.5 441.4L742.5 443.4L740.0 444.1ZM742.0 441.4L744.5 440.6L744.5 442.7L742.0 443.4ZM744.0 440.6L746.5 439.8L746.5 441.9L744.0 442.7ZM746.0 439.8L748.5 438.9L748.5 441.0L746.0 441.9ZM748.0 438.9L750.5 437.9L750.5 440.1L748.0 441.0ZM750.0 439.5L752.5 438.5L752.5 440.7L750.0 441.6ZM752.0 438.5L754.5 437.6L754.5 439.8L752.0 440.7ZM754.0 409.5L756.5 408.3L756.5 410.4L754.0 411.7ZM754.0 437.6L756.5 436.7L756.5 438.9L754.0 439.8ZM756.0 408.3L758.5 407.0L758.5 414.0L756.0 415.2ZM756.0 436.7L758.5 435.8L758.5 438.0L756.0 438.9ZM758.0 407.0L760.5 405.7L760.5 416.0L758.0 417.2ZM758.0 435.8L760.5 434.9L760.5 437.1L758.0 438.0ZM760.0 410.6L762.5 409.7L762.5 416.8L760.0 417.7ZM760.0 434.9L762.5 434.2L762.5 436.4L760.0 437.1ZM762.0 413.0L764.5 412.1L764.5 417.7L762.0 418.5ZM762.0 434.2L764.5 433.4L764.5 437.3L762.0 438.0ZM764.0 415.4L766.5 414.6L766.5 418.5L764.0 419.3ZM764.0 435.0L766.5 434.3L766.5 436.5L764.0 437.3ZM766.0 416.2L768.5 415.4L768.5 417.7L766.0 418.5ZM766.0 434.3L768.5 433.6L768.5 435.8L766.0 436.5ZM768.0 415.4L770.5 414.6L770.5 418.5L768.0 419.3ZM768.0 433.6L770.5 432.8L770.5 436.7L768.0 437.5ZM770.0 416.3L772.5 415.5L772.5 417.7L770.0 418.5ZM770.0 432.8L772.5 432.1L772.5 436.0L770.0 436.7ZM772.0 415.5L774.5 414.7L774.5 418.6L772.0 419.4ZM772.0 433.7L774.5 433.0L774.5 436.9L772.0 437.7ZM774.0 414.7L776.5 413.8L776.5 417.8L774.0 418.6ZM774.0 433.0L776.5 432.3L776.5 436.2L774.0 436.9ZM776.0 415.5L778.5 414.7L778.5 417.0L776.0 417.8ZM776.0 434.0L778.5 433.2L778.5 437.2L776.0 437.9ZM778.0 414.7L780.5 413.9L780.5 416.2L778.0 417.0ZM778.0 433.2L780.5 432.5L780.5 438.2L778.0 438.9ZM780.0 413.9L782.5 413.1L782.5 417.1L780.0 417.9ZM780.0 434.2L782.5 433.5L782.5 442.5L780.0 443.2ZM782.0 414.8L784.5 414.0L784.5 416.3L782.0 417.1ZM782.0 435.2L784.5 434.5L784.5 447.0L782.0 447.6ZM784.0 414.0L786.5 413.2L786.5 415.5L784.0 416.3ZM784.0 439.6L786.5 438.9L786.5 446.3L784.0 447.0ZM786.0 413.2L788.5 412.4L788.5 414.8L786.0 415.5ZM786.0 444.0L788.5 443.3L788.5 445.6L786.0 446.3ZM788.0 412.4L790.5 411.7L790.5 414.0L788.0 414.8ZM790.0 411.7L792.5 411.1L792.5 413.4L790.0 414.0ZM792.0 411.1L794.5 410.5L794.5 414.6L792.0 415.2ZM794.0 412.3L796.5 411.7L796.5 414.1L794.0 414.6ZM796.0 411.7L798.5 411.1L798.5 413.5L796.0 414.1ZM798.0 411.1L800.5 410.6L800.5 412.9L798.0 413.5ZM800.0 410.6L802.5 410.0L802.5 412.4L800.0 412.9ZM802.0 410.0L804.5 409.6L804.5 411.9L802.0 412.4ZM804.0 409.6L806.5 409.1L806.5 411.5L804.0 411.9ZM806.0 409.1L808.5 408.7L808.5 411.1L806.0 411.5ZM808.0 408.7L810.5 408.2L810.5 410.7L808.0 411.1ZM810.0 408.2L812.5 407.8L812.5 410.2L810.0 410.7ZM812.0 407.8L814.5 407.3L814.5 409.8L812.0 410.2ZM814.0 407.3L816.5 406.9L816.5 409.4L814.0 409.8ZM816.0 406.9L818.5 406.4L818.5 408.9L816.0 409.4ZM818.0 406.4L820.5 406.0L820.5 408.5L818.0 408.9ZM820.0 406.0L822.5 405.6L822.5 408.1L820.0 408.5ZM822.0 405.6L824.5 405.1L824.5 407.7L822.0 408.1ZM824.0 405.1L826.5 404.7L826.5 407.2L824.0 407.7ZM824.0 418.7L826.5 418.3L826.5 420.9L824.0 421.2ZM826.0 404.7L828.5 404.2L828.5 406.8L826.0 407.2ZM826.0 418.3L828.5 418.0L828.5 420.6L826.0 420.9ZM828.0 404.2L830.5 403.8L830.5 406.4L828.0 406.8ZM828.0 431.8L830.5 431.6L830.5 440.1L828.0 440.2ZM830.0 403.8L832.5 403.3L832.5 405.9L830.0 406.4ZM830.0 425.6L832.5 425.3L832.5 439.9L830.0 440.1ZM832.0 403.3L834.5 402.9L834.5 405.5L832.0 405.9ZM832.0 423.3L834.5 423.0L834.5 431.7L832.0 431.9ZM834.0 402.9L836.5 402.5L836.5 405.1L834.0 405.5ZM834.0 421.0L836.5 420.8L836.5 427.5L834.0 427.7ZM836.0 402.5L838.5 402.1L838.5 404.8L836.0 405.1ZM836.0 420.8L838.5 420.5L838.5 425.2L836.0 425.4ZM838.0 402.1L840.5 401.8L840.5 404.4L838.0 404.8ZM838.0 418.5L840.5 418.2L840.5 422.9L838.0 423.1ZM840.0 401.8L842.5 401.4L842.5 404.0L840.0 404.4ZM840.0 418.2L842.5 417.9L842.5 420.5L840.0 420.8ZM842.0 401.4L844.5 401.0L844.5 403.6L842.0 404.0ZM842.0 415.8L844.5 415.4L844.5 420.2L842.0 420.5ZM844.0 401.0L846.5 400.6L846.5 403.2L844.0 403.6ZM844.0 415.4L846.5 415.1L846.5 417.8L844.0 418.1ZM846.0 400.6L848.5 400.2L848.5 402.8L846.0 403.2ZM846.0 413.0L848.5 412.7L848.5 417.4L846.0 417.8ZM848.0 400.2L850.5 399.7L850.5 402.4L848.0 402.8ZM848.0 412.7L850.5 412.3L850.5 417.1L848.0 417.4ZM850.0 399.7L852.5 399.3L852.5 402.0L850.0 402.4ZM850.0 412.3L852.5 412.0L852.5 414.7L850.0 415.0ZM852.0 399.3L854.5 398.9L854.5 401.6L852.0 402.0ZM852.0 412.0L854.5 411.6L854.5 414.3L852.0 414.7ZM854.0 398.9L856.5 398.5L856.5 401.2L854.0 401.6ZM854.0 411.6L856.5 411.2L856.5 414.0L854.0 414.3ZM856.0 398.5L858.5 398.1L858.5 400.8L856.0 401.2ZM856.0 411.2L858.5 410.8L858.5 413.6L856.0 414.0ZM858.0 395.9L860.5 395.5L860.5 400.4L858.0 400.8ZM858.0 408.7L860.5 408.3L860.5 411.0L858.0 411.4ZM860.0 395.5L862.5 395.0L862.5 397.8L860.0 398.2ZM860.0 408.3L862.5 407.9L862.5 410.6L860.0 411.0ZM862.0 395.0L864.5 394.6L864.5 397.3L862.0 397.8ZM862.0 407.9L864.5 407.4L864.5 410.2L862.0 410.6ZM864.0 394.6L866.5 394.1L866.5 396.9L864.0 397.3ZM864.0 407.4L866.5 407.0L866.5 409.8L864.0 410.2ZM866.0 394.1L868.5 393.7L868.5 396.4L866.0 396.9ZM866.0 407.0L868.5 406.6L868.5 409.4L866.0 409.8ZM868.0 393.7L870.5 393.2L870.5 396.0L868.0 396.4ZM868.0 406.6L870.5 406.2L870.5 408.9L868.0 409.4ZM870.0 391.1L872.5 390.6L872.5 395.5L870.0 396.0ZM870.0 406.2L872.5 405.8L872.5 408.5L870.0 408.9ZM872.0 390.6L874.5 390.2L874.5 392.9L872.0 393.4ZM872.0 405.8L874.5 405.3L874.5 408.1L872.0 408.5ZM874.0 390.2L876.5 389.7L876.5 392.5L874.0 392.9ZM874.0 405.3L876.5 404.9L876.5 407.7L874.0 408.1ZM876.0 387.5L878.5 386.9L878.5 394.1L876.0 394.6ZM876.0 404.9L878.5 404.4L878.5 407.2L876.0 407.7ZM878.0 386.9L880.5 386.2L880.5 393.4L878.0 394.1ZM878.0 404.4L880.5 403.8L880.5 406.6L878.0 407.2ZM880.0 386.2L882.5 385.4L882.5 392.7L880.0 393.4ZM880.0 403.8L882.5 403.2L882.5 406.0L880.0 406.6ZM882.0 383.2L884.5 382.4L884.5 392.0L882.0 392.7ZM882.0 403.2L884.5 402.6L884.5 405.5L882.0 406.0ZM884.0 382.4L886.5 381.7L886.5 391.3L884.0 392.0ZM884.0 402.6L886.5 402.0L886.5 404.9L884.0 405.5ZM886.0 379.4L888.5 378.6L888.5 390.6L886.0 391.3ZM886.0 402.0L888.5 401.4L888.5 404.3L886.0 404.9ZM888.0 374.1L890.5 373.5L890.5 390.2L888.0 390.6ZM888.0 401.4L890.5 401.0L890.5 403.9L888.0 404.3ZM890.0 369.0L892.5 368.4L892.5 378.1L890.0 378.7ZM890.0 380.4L892.5 379.8L892.5 389.5L890.0 390.2ZM890.0 401.0L892.5 400.3L892.5 403.2L890.0 403.9ZM892.0 361.5L894.5 360.9L894.5 375.2L892.0 375.8ZM892.0 382.1L894.5 381.4L894.5 388.8L892.0 389.5ZM892.0 400.3L894.5 399.6L894.5 402.5L892.0 403.2ZM894.0 360.9L896.5 360.4L896.5 370.0L894.0 370.6ZM894.0 381.4L896.5 380.8L896.5 388.2L894.0 388.8ZM894.0 399.6L896.5 398.9L896.5 401.8L894.0 402.5ZM896.0 360.4L898.5 359.8L898.5 362.6L896.0 363.2ZM896.0 380.8L898.5 380.1L898.5 385.3L896.0 385.9ZM896.0 398.9L898.5 398.2L898.5 401.1L896.0 401.8ZM898.0 382.4L900.5 381.8L900.5 384.6L898.0 385.3ZM898.0 398.2L900.5 397.6L900.5 400.4L898.0 401.1ZM900.0 397.6L902.5 396.9L902.5 399.7L900.0 400.4ZM902.0 396.9L904.5 396.2L904.5 399.0L902.0 399.7ZM904.0 396.2L906.5 395.5L906.5 398.3L904.0 399.0ZM906.0 395.5L908.5 394.8L908.5 397.7L906.0 398.3ZM908.0 394.8L910.5 394.1L910.5 397.0L908.0 397.7ZM910.0 394.1L912.5 393.4L912.5 396.2L910.0 397.0ZM912.0 393.4L914.5 393.1L914.5 395.9L912.0 396.2ZM914.0 395.3L916.5 395.0L916.5 397.7L914.0 398.0ZM916.0 395.0L918.5 394.7L918.5 397.4L916.0 397.7ZM918.0 394.7L920.5 394.5L920.5 397.0L918.0 397.4ZM920.0 394.5L922.5 394.2L922.5 396.7L920.0 397.0ZM922.0 394.2L924.5 393.9L924.5 398.1L922.0 398.5ZM924.0 393.9L926.5 393.6L926.5 397.7L924.0 398.1ZM926.0 395.4L928.5 395.0L928.5 397.3L926.0 397.7ZM928.0 395.0L930.5 394.7L930.5 398.5L928.0 399.0ZM930.0 396.3L932.5 395.9L932.5 398.0L930.0 398.5ZM932.0 395.9L934.5 395.5L934.5 399.0L932.0 399.6ZM934.0 396.9L936.5 396.3L936.5 399.7L934.0 400.5ZM936.0 396.3L938.5 395.4L938.5 400.0L936.0 401.1ZM938.0 396.8L940.5 395.8L940.5 401.4L938.0 402.6ZM940.0 397.1L942.5 396.1L942.5 404.7L940.0 406.3ZM942.0 399.5L944.5 398.2L944.5 403.1L942.0 404.7Z"/>
<path fill="#009cff" d="M448.0 520.4L450.5 519.3L450.5 520.1L448.0 521.2ZM448.0 525.2L450.5 525.4L450.5 526.3L448.0 526.0ZM450.0 519.3L452.5 518.2L452.5 519.3L450.0 520.3ZM450.0 525.2L452.5 525.4L452.5 526.5L450.0 526.3ZM452.0 518.2L454.5 517.1L454.5 518.6L452.0 519.6ZM452.0 525.1L454.5 525.2L454.5 526.7L452.0 526.5ZM454.0 517.1L456.5 516.0L456.5 518.0L454.0 518.9ZM454.0 524.9L456.5 525.0L456.5 527.0L454.0 526.7ZM456.0 516.3L458.5 515.3L458.5 517.8L456.0 518.7ZM456.0 524.3L458.5 524.3L458.5 526.8L456.0 526.6ZM458.0 516.1L460.5 515.1L460.5 518.7L458.0 519.4ZM458.0 522.7L460.5 522.5L460.5 526.1L458.0 526.0ZM460.0 516.0L462.5 515.1L462.5 525.3L460.0 525.3ZM462.0 517.0L464.5 516.3L464.5 523.2L462.0 523.4ZM490.0 496.5L492.5 495.2L492.5 497.0L490.0 498.2ZM492.0 495.2L494.5 493.9L494.5 499.5L492.0 500.6ZM494.0 493.9L496.5 492.6L496.5 501.1L494.0 502.0ZM494.0 530.4L496.5 530.8L496.5 532.7L494.0 532.3ZM496.0 496.5L498.5 495.4L498.5 501.5L496.0 502.4ZM496.0 528.1L498.5 528.3L498.5 533.1L496.0 532.7ZM498.0 498.1L500.5 497.1L500.5 502.0L498.0 502.9ZM498.0 527.0L500.5 527.1L500.5 533.5L498.0 533.1ZM500.0 498.5L502.5 497.6L502.5 501.1L500.0 502.0ZM500.0 527.1L502.5 527.3L502.5 532.4L500.0 532.0ZM502.0 499.1L504.5 498.2L504.5 501.8L502.0 502.6ZM502.0 525.8L504.5 525.9L504.5 531.2L502.0 530.9ZM504.0 499.7L506.5 499.0L506.5 501.2L504.0 501.8ZM504.0 524.4L506.5 524.5L506.5 529.9L504.0 529.6ZM506.0 499.0L508.5 498.6L508.5 502.4L506.0 502.8ZM506.0 524.5L508.5 524.7L508.5 528.5L506.0 528.3ZM508.0 500.2L510.5 499.8L510.5 502.1L508.0 502.4ZM508.0 524.7L510.5 524.8L510.5 528.8L508.0 528.5ZM510.0 499.8L512.5 499.4L512.5 501.7L510.0 502.1ZM510.0 523.2L512.5 523.3L512.5 527.3L510.0 527.1ZM512.0 499.4L514.5 499.0L514.5 503.0L512.0 503.4ZM512.0 523.3L514.5 523.4L514.5 527.5L512.0 527.3ZM514.0 500.7L516.5 500.3L516.5 502.7L514.0 503.0ZM514.0 523.4L516.5 523.5L516.5 527.7L514.0 527.5ZM516.0 500.3L518.5 499.9L518.5 502.4L516.0 502.7ZM516.0 523.5L518.5 523.6L518.5 527.9L516.0 527.7ZM518.0 499.9L520.5 499.6L520.5 502.0L518.0 502.4ZM518.0 523.6L520.5 523.8L520.5 528.1L518.0 527.9ZM520.0 499.6L522.5 499.2L522.5 501.7L520.0 502.0ZM520.0 523.8L522.5 523.9L522.5 526.4L520.0 526.2ZM522.0 499.2L524.5 498.5L524.5 501.0L522.0 501.7ZM522.0 523.9L524.5 523.4L524.5 525.9L522.0 526.4ZM524.0 500.4L526.5 499.8L526.5 502.3L524.0 503.0ZM524.0 523.4L526.5 522.9L526.5 527.4L524.0 527.8ZM526.0 499.8L528.5 499.2L528.5 501.7L526.0 502.3ZM526.0 522.9L528.5 522.4L528.5 526.9L526.0 527.4ZM528.0 499.2L530.5 498.5L530.5 501.1L528.0 501.7ZM528.0 522.4L530.5 522.0L530.5 526.5L528.0 526.9ZM530.0 498.5L532.5 497.9L532.5 500.5L530.0 501.1ZM530.0 522.0L532.5 521.5L532.5 526.0L530.0 526.5ZM532.0 497.9L534.5 497.3L534.5 499.9L532.0 500.5ZM532.0 521.5L534.5 521.0L534.5 525.6L532.0 526.0ZM534.0 497.3L536.5 496.7L536.5 499.2L534.0 499.9ZM534.0 523.0L536.5 522.5L536.5 527.1L534.0 527.5ZM536.0 496.7L538.5 496.0L538.5 498.6L536.0 499.2ZM536.0 522.5L538.5 522.0L538.5 526.6L536.0 527.1ZM538.0 496.0L540.5 495.4L540.5 498.0L538.0 498.6ZM538.0 522.0L540.5 521.6L540.5 528.2L538.0 528.6ZM540.0 495.4L542.5 494.8L542.5 497.4L540.0 498.0ZM540.0 523.6L542.5 523.1L542.5 529.8L540.0 530.2ZM542.0 494.8L544.5 494.1L544.5 496.8L542.0 497.4ZM542.0 525.1L544.5 524.7L544.5 531.4L542.0 531.8ZM544.0 494.1L546.5 493.7L546.5 496.3L544.0 496.8ZM544.0 524.7L546.5 524.3L546.5 533.1L544.0 533.5ZM546.0 493.7L548.5 493.2L548.5 495.9L546.0 496.3ZM546.0 526.3L548.5 525.9L548.5 532.7L546.0 533.1ZM548.0 493.2L550.5 492.8L550.5 495.4L548.0 495.9ZM548.0 530.0L550.5 529.6L550.5 532.3L548.0 532.7ZM550.0 492.8L552.5 492.3L552.5 495.0L550.0 495.4ZM552.0 492.3L554.5 491.9L554.5 494.5L552.0 495.0ZM554.0 491.9L556.5 491.4L556.5 494.1L554.0 494.5ZM556.0 491.4L558.5 491.0L558.5 493.6L556.0 494.1ZM558.0 491.0L560.5 490.5L560.5 493.2L558.0 493.6ZM560.0 490.5L562.5 490.1L562.5 492.8L560.0 493.2ZM560.0 523.5L562.5 523.2L562.5 530.1L560.0 530.3ZM562.0 490.1L564.5 489.7L564.5 492.4L562.0 492.8ZM562.0 519.1L564.5 518.8L564.5 529.8L562.0 530.1ZM564.0 489.7L566.5 489.3L566.5 492.0L564.0 492.4ZM564.0 514.7L566.5 514.4L566.5 525.4L564.0 525.7ZM566.0 489.3L568.5 488.9L568.5 491.6L566.0 492.0ZM566.0 512.3L568.5 512.0L568.5 521.0L566.0 521.2ZM568.0 488.9L570.5 488.5L570.5 491.2L568.0 491.6ZM568.0 512.0L570.5 511.7L570.5 516.5L568.0 516.8ZM570.0 488.5L572.5 488.1L572.5 490.9L570.0 491.2ZM570.0 509.6L572.5 509.3L572.5 514.1L570.0 514.4ZM572.0 488.1L574.5 487.7L574.5 490.5L572.0 490.9ZM572.0 509.3L574.5 508.9L574.5 511.7L572.0 512.0ZM574.0 485.6L576.5 485.2L576.5 487.9L574.0 488.3ZM574.0 506.8L576.5 506.5L576.5 511.4L574.0 511.7ZM576.0 485.2L578.5 484.9L578.5 487.7L576.0 487.9ZM576.0 506.5L578.5 506.2L578.5 509.0L576.0 509.2ZM578.0 484.9L580.5 484.8L580.5 487.5L578.0 487.7ZM578.0 506.2L580.5 506.0L580.5 508.8L578.0 509.0ZM580.0 484.8L582.5 484.6L582.5 487.3L580.0 487.5ZM580.0 503.9L582.5 503.7L582.5 508.5L580.0 508.8ZM582.0 484.6L584.5 484.4L584.5 487.1L582.0 487.3ZM582.0 503.7L584.5 503.5L584.5 506.2L582.0 506.4ZM584.0 482.3L586.5 482.1L586.5 486.9L584.0 487.1ZM584.0 503.5L586.5 503.2L586.5 505.9L584.0 506.2ZM586.0 482.1L588.5 481.8L588.5 484.5L586.0 484.8ZM586.0 503.2L588.5 502.7L588.5 505.4L586.0 505.9ZM588.0 481.8L590.5 481.5L590.5 484.2L588.0 484.5ZM588.0 502.7L590.5 502.3L590.5 505.0L588.0 505.4ZM590.0 479.4L592.5 479.2L592.5 483.9L590.0 484.2ZM590.0 502.3L592.5 501.9L592.5 504.5L590.0 505.0ZM592.0 479.2L594.5 478.9L594.5 481.6L592.0 481.8ZM592.0 499.8L594.5 499.4L594.5 502.0L592.0 502.5ZM594.0 476.9L596.5 476.6L596.5 481.3L594.0 481.6ZM594.0 499.4L596.5 499.0L596.5 501.6L594.0 502.0ZM596.0 474.6L598.5 474.4L598.5 479.0L596.0 479.3ZM596.0 499.0L598.5 498.6L598.5 501.2L596.0 501.6ZM598.0 472.4L600.5 472.1L600.5 478.7L598.0 479.0ZM598.0 498.6L600.5 498.1L600.5 500.7L598.0 501.2ZM600.0 468.1L602.5 467.8L602.5 476.3L600.0 476.7ZM600.0 498.1L602.5 497.6L602.5 500.2L600.0 500.7ZM602.0 461.8L604.5 461.5L604.5 474.0L602.0 474.3ZM602.0 497.6L604.5 497.2L604.5 499.8L602.0 500.2ZM604.0 461.5L606.5 461.2L606.5 469.7L604.0 470.0ZM604.0 497.2L606.5 496.7L606.5 499.3L604.0 499.8ZM606.0 461.2L608.5 461.0L608.5 463.5L606.0 463.8ZM606.0 496.7L608.5 496.2L608.5 498.8L606.0 499.3ZM608.0 496.2L610.5 495.8L610.5 498.3L608.0 498.8ZM610.0 495.8L612.5 495.3L612.5 497.8L610.0 498.3ZM612.0 495.3L614.5 494.8L614.5 497.3L612.0 497.8ZM614.0 494.8L616.5 494.3L616.5 496.8L614.0 497.3ZM616.0 494.3L618.5 493.9L618.5 496.4L616.0 496.8ZM618.0 493.9L620.5 493.3L620.5 495.8L618.0 496.4ZM620.0 493.3L622.5 492.7L622.5 495.2L620.0 495.8ZM622.0 492.7L624.5 492.1L624.5 494.6L622.0 495.2ZM624.0 492.1L626.5 491.6L626.5 494.0L624.0 494.6ZM626.0 491.6L628.5 491.0L628.5 493.4L626.0 494.0ZM628.0 458.2L630.5 457.9L630.5 464.0L628.0 464.3ZM628.0 491.0L630.5 490.4L630.5 492.8L628.0 493.4ZM630.0 457.9L632.5 457.7L632.5 467.2L630.0 467.6ZM630.0 490.4L632.5 489.9L632.5 492.3L630.0 492.8ZM632.0 461.2L634.5 460.9L634.5 470.4L632.0 470.8ZM632.0 489.9L634.5 489.3L634.5 491.7L632.0 492.3ZM634.0 464.5L636.5 464.1L636.5 471.8L634.0 472.2ZM634.0 489.3L636.5 488.7L636.5 491.1L634.0 491.7ZM636.0 467.7L638.5 467.3L638.5 471.4L636.0 471.8ZM636.0 488.7L638.5 488.2L638.5 490.5L636.0 491.1ZM638.0 469.0L640.5 468.6L640.5 472.7L638.0 473.1ZM638.0 489.9L640.5 489.3L640.5 491.6L638.0 492.2ZM640.0 470.4L642.5 470.0L642.5 472.3L640.0 472.7ZM640.0 489.3L642.5 488.7L642.5 491.0L640.0 491.6ZM642.0 470.0L644.5 469.3L644.5 473.3L642.0 474.0ZM642.0 488.7L644.5 488.0L644.5 490.3L642.0 491.0ZM644.0 471.0L646.5 470.3L646.5 472.6L644.0 473.3ZM644.0 488.0L646.5 487.3L646.5 489.6L644.0 490.3ZM646.0 470.3L648.5 469.6L648.5 471.9L646.0 472.6ZM646.0 487.3L648.5 486.5L648.5 488.8L646.0 489.6ZM648.0 469.6L650.5 468.7L650.5 472.7L648.0 473.6ZM648.0 486.5L650.5 485.5L650.5 489.4L648.0 490.5ZM650.0 470.4L652.5 469.5L652.5 471.8L650.0 472.7ZM650.0 487.2L652.5 486.1L652.5 488.3L650.0 489.4ZM652.0 469.5L654.5 468.7L654.5 470.9L652.0 471.8ZM652.0 486.1L654.5 485.0L654.5 487.2L652.0 488.3ZM654.0 468.7L656.5 467.8L656.5 470.0L654.0 470.9ZM654.0 485.0L656.5 483.9L656.5 487.8L654.0 488.9ZM656.0 467.8L658.5 466.9L658.5 469.1L656.0 470.0ZM656.0 485.5L658.5 484.4L658.5 486.6L656.0 487.8ZM658.0 466.9L660.5 466.1L660.5 468.2L658.0 469.1ZM658.0 484.4L660.5 483.3L660.5 487.1L658.0 488.2ZM660.0 466.1L662.5 465.2L662.5 467.3L660.0 468.2ZM660.0 484.9L662.5 483.8L662.5 487.5L660.0 488.7ZM662.0 465.2L664.5 464.3L664.5 466.4L662.0 467.3ZM662.0 483.8L664.5 482.7L664.5 489.4L662.0 490.6ZM664.0 465.8L666.5 464.9L666.5 467.1L664.0 468.0ZM664.0 484.2L666.5 483.1L666.5 491.2L664.0 492.5ZM666.0 464.9L668.5 464.1L668.5 466.1L666.0 467.1ZM666.0 486.1L668.5 484.9L668.5 492.9L666.0 494.2ZM668.0 464.1L670.5 463.2L670.5 465.2L668.0 466.1ZM668.0 487.9L670.5 486.7L670.5 491.7L668.0 492.9ZM670.0 463.2L672.5 462.3L672.5 464.3L670.0 465.2ZM672.0 462.3L674.5 461.4L674.5 463.4L672.0 464.3ZM674.0 461.4L676.5 460.5L676.5 462.5L674.0 463.4ZM676.0 460.5L678.5 459.6L678.5 461.6L676.0 462.5ZM678.0 459.6L680.5 458.7L680.5 460.6L678.0 461.6ZM680.0 457.3L682.5 456.3L682.5 458.3L680.0 459.3ZM682.0 456.3L684.5 455.4L684.5 457.3L682.0 458.3ZM684.0 455.4L686.5 454.5L686.5 456.5L684.0 457.3ZM684.0 478.3L686.5 477.4L686.5 482.0L684.0 482.9ZM686.0 454.5L688.5 453.8L688.5 455.8L686.0 456.5ZM686.0 473.3L688.5 472.7L688.5 481.4L686.0 482.0ZM688.0 453.8L690.5 453.1L690.5 455.0L688.0 455.8ZM688.0 471.4L690.5 470.7L690.5 478.1L688.0 478.7ZM690.0 453.1L692.5 452.3L692.5 454.3L690.0 455.0ZM690.0 469.3L692.5 468.7L692.5 473.4L690.0 474.0ZM692.0 452.3L694.5 451.6L694.5 453.6L692.0 454.3ZM692.0 468.7L694.5 468.0L694.5 471.4L692.0 472.0ZM694.0 450.2L696.5 449.5L696.5 452.8L694.0 453.6ZM694.0 466.7L696.5 466.0L696.5 469.4L694.0 470.0ZM696.0 449.5L698.5 448.7L698.5 450.7L696.0 451.5ZM696.0 466.0L698.5 465.3L698.5 467.3L696.0 468.0ZM698.0 448.7L700.5 447.8L700.5 449.8L698.0 450.7ZM698.0 463.9L700.5 463.2L700.5 466.6L698.0 467.3ZM700.0 446.4L702.5 445.5L702.5 448.9L700.0 449.8ZM700.0 463.2L702.5 462.4L702.5 464.5L700.0 465.2ZM702.0 445.5L704.5 444.5L704.5 446.5L702.0 447.5ZM702.0 462.4L704.5 461.6L704.5 463.6L702.0 464.5ZM704.0 443.1L706.5 442.1L706.5 445.6L704.0 446.5ZM704.0 460.2L706.5 459.2L706.5 462.7L704.0 463.6ZM706.0 440.7L708.5 439.7L708.5 443.1L706.0 444.1ZM706.0 459.2L708.5 458.3L708.5 460.3L706.0 461.3ZM708.0 436.8L710.5 435.8L710.5 442.1L708.0 443.1ZM708.0 458.3L710.5 457.3L710.5 459.3L708.0 460.3ZM710.0 432.9L712.5 431.9L712.5 439.7L710.0 440.7ZM710.0 457.3L712.5 456.4L712.5 458.4L710.0 459.3ZM712.0 429.0L714.5 428.0L714.5 435.8L712.0 436.8ZM712.0 456.4L714.5 455.4L714.5 457.4L712.0 458.4ZM714.0 428.0L716.5 427.0L716.5 431.9L714.0 432.9ZM714.0 455.4L716.5 454.4L716.5 456.5L714.0 457.4ZM716.0 453.0L718.5 452.1L718.5 454.2L716.0 455.0ZM718.0 452.1L720.5 451.3L720.5 453.3L718.0 454.2ZM720.0 451.3L722.5 450.4L722.5 452.5L720.0 453.3ZM722.0 450.4L724.5 449.6L724.5 451.6L722.0 452.5ZM724.0 449.6L726.5 448.7L726.5 450.7L724.0 451.6ZM726.0 448.7L728.5 447.9L728.5 449.9L726.0 450.7ZM728.0 447.9L730.5 447.2L730.5 449.2L728.0 449.9ZM730.0 447.2L732.5 446.4L732.5 448.5L730.0 449.2ZM732.0 446.4L734.5 445.7L734.5 447.8L732.0 448.5ZM734.0 445.7L736.5 445.0L736.5 447.0L734.0 447.8ZM736.0 445.0L738.5 444.3L738.5 446.3L736.0 447.0ZM738.0 444.3L740.5 443.5L740.5 445.6L738.0 446.3ZM740.0 443.5L742.5 442.8L742.5 444.9L740.0 445.6ZM742.0 442.8L744.5 442.1L744.5 444.2L742.0 444.9ZM744.0 442.1L746.5 441.3L746.5 443.4L744.0 444.2ZM746.0 441.3L748.5 440.4L748.5 442.5L746.0 443.4ZM748.0 440.4L750.5 439.5L750.5 441.6L748.0 442.5ZM750.0 441.0L752.5 440.1L752.5 442.2L750.0 443.1ZM752.0 440.1L754.5 439.2L754.5 441.4L752.0 442.2ZM754.0 439.2L756.5 438.3L756.5 440.5L754.0 441.4ZM756.0 438.3L758.5 437.4L758.5 439.6L756.0 440.5ZM758.0 437.4L760.5 436.5L760.5 438.7L758.0 439.6ZM760.0 405.7L762.5 404.8L762.5 410.3L760.0 411.2ZM760.0 436.5L762.5 435.8L762.5 439.6L760.0 440.4ZM762.0 404.8L764.5 404.0L764.5 412.7L762.0 413.6ZM762.0 437.4L764.5 436.7L764.5 438.9L762.0 439.6ZM764.0 405.6L766.5 404.7L766.5 415.2L764.0 416.0ZM764.0 436.7L766.5 435.9L766.5 438.2L764.0 438.9ZM766.0 409.7L768.5 408.8L768.5 416.0L766.0 416.8ZM766.0 435.9L768.5 435.2L768.5 439.1L766.0 439.8ZM768.0 410.5L770.5 409.6L770.5 415.2L768.0 416.0ZM768.0 436.9L770.5 436.1L770.5 438.4L768.0 439.1ZM770.0 413.0L772.5 412.1L772.5 416.1L770.0 416.9ZM770.0 436.1L772.5 435.4L772.5 439.3L770.0 440.0ZM772.0 413.8L774.5 413.0L774.5 415.3L772.0 416.1ZM772.0 437.1L774.5 436.3L774.5 440.3L772.0 441.0ZM774.0 413.0L776.5 412.2L776.5 414.4L774.0 415.3ZM774.0 436.3L776.5 435.6L776.5 441.3L774.0 442.0ZM776.0 412.2L778.5 411.4L778.5 415.3L776.0 416.1ZM776.0 437.3L778.5 436.6L778.5 445.6L776.0 446.3ZM778.0 413.0L780.5 412.2L780.5 414.5L778.0 415.3ZM778.0 438.3L780.5 437.6L780.5 448.3L778.0 449.0ZM780.0 412.2L782.5 411.4L782.5 413.7L780.0 414.5ZM780.0 442.6L782.5 441.9L782.5 447.6L780.0 448.3ZM782.0 411.4L784.5 410.6L784.5 414.6L782.0 415.4ZM784.0 412.3L786.5 411.5L786.5 413.8L784.0 414.6ZM786.0 411.5L788.5 410.7L788.5 413.0L786.0 413.8ZM788.0 410.7L790.5 410.0L790.5 412.3L788.0 413.0ZM790.0 410.0L792.5 409.4L792.5 411.7L790.0 412.3ZM792.0 409.4L794.5 408.8L794.5 411.1L792.0 411.7ZM794.0 410.5L796.5 410.0L796.5 412.3L794.0 412.9ZM796.0 410.0L798.5 409.4L798.5 411.7L796.0 412.3ZM798.0 409.4L800.5 408.8L800.5 411.2L798.0 411.7ZM800.0 408.8L802.5 408.2L802.5 410.6L800.0 411.2ZM802.0 408.2L804.5 407.8L804.5 410.2L802.0 410.6ZM804.0 407.8L806.5 407.3L806.5 409.7L804.0 410.2ZM806.0 407.3L808.5 406.9L808.5 409.3L806.0 409.7ZM808.0 406.9L810.5 406.4L810.5 408.8L808.0 409.3ZM810.0 406.4L812.5 405.9L812.5 408.4L810.0 408.8ZM812.0 405.9L814.5 405.5L814.5 407.9L812.0 408.4ZM832.0 431.3L834.5 431.1L834.5 439.8L832.0 439.9ZM834.0 427.1L836.5 426.9L836.5 439.6L834.0 439.8ZM836.0 424.8L838.5 424.6L838.5 433.3L836.0 433.5ZM838.0 400.1L840.5 399.7L840.5 402.4L838.0 402.7ZM838.0 422.5L840.5 422.3L840.5 429.0L838.0 429.3ZM840.0 399.7L842.5 399.3L842.5 402.0L840.0 402.4ZM840.0 420.2L842.5 419.9L842.5 424.6L840.0 424.9ZM842.0 399.3L844.5 398.9L844.5 401.6L842.0 402.0ZM842.0 419.9L844.5 419.6L844.5 422.3L842.0 422.6ZM844.0 398.9L846.5 398.5L846.5 401.2L844.0 401.6ZM844.0 417.5L846.5 417.2L846.5 421.9L844.0 422.3ZM846.0 398.5L848.5 398.1L848.5 400.8L846.0 401.2ZM846.0 417.2L848.5 416.8L848.5 419.5L846.0 419.9ZM848.0 398.1L850.5 397.6L850.5 400.3L848.0 400.8ZM848.0 416.8L850.5 416.5L850.5 419.2L848.0 419.5ZM850.0 397.6L852.5 397.2L852.5 399.9L850.0 400.3ZM850.0 414.4L852.5 414.1L852.5 418.9L850.0 419.2ZM852.0 397.2L854.5 396.8L854.5 399.5L852.0 399.9ZM852.0 414.1L854.5 413.7L854.5 416.4L852.0 416.8ZM854.0 396.8L856.5 396.4L856.5 399.1L854.0 399.5ZM854.0 413.7L856.5 413.4L856.5 416.1L854.0 416.4ZM856.0 396.4L858.5 395.9L858.5 398.7L856.0 399.1ZM856.0 413.4L858.5 413.0L858.5 415.7L856.0 416.1ZM858.0 393.8L860.5 393.4L860.5 396.1L858.0 396.5ZM858.0 410.8L860.5 410.4L860.5 413.1L858.0 413.6ZM860.0 393.4L862.5 392.9L862.5 395.6L860.0 396.1ZM860.0 410.4L862.5 410.0L862.5 412.7L860.0 413.1ZM862.0 392.9L864.5 392.4L864.5 395.2L862.0 395.6ZM862.0 410.0L864.5 409.6L864.5 412.3L862.0 412.7ZM864.0 392.4L866.5 392.0L866.5 394.7L864.0 395.2ZM864.0 409.6L866.5 409.2L866.5 411.9L864.0 412.3ZM866.0 392.0L868.5 391.5L868.5 394.3L866.0 394.7ZM866.0 409.2L868.5 408.8L868.5 411.5L866.0 411.9ZM868.0 389.4L870.5 388.9L870.5 393.8L868.0 394.3ZM868.0 408.8L870.5 408.3L870.5 411.1L868.0 411.5ZM870.0 388.9L872.5 388.4L872.5 391.2L870.0 391.7ZM870.0 408.3L872.5 407.9L872.5 410.7L870.0 411.1ZM872.0 388.4L874.5 388.0L874.5 390.8L872.0 391.2ZM872.0 407.9L874.5 407.5L874.5 410.3L872.0 410.7ZM874.0 385.8L876.5 385.3L876.5 390.3L874.0 390.8ZM874.0 407.5L876.5 407.1L876.5 409.9L874.0 410.3ZM876.0 385.3L878.5 384.7L878.5 387.5L876.0 388.1ZM878.0 384.7L880.5 384.0L880.5 386.8L878.0 387.5ZM880.0 381.8L882.5 381.0L882.5 386.0L880.0 386.8ZM882.0 376.5L884.5 375.7L884.5 383.0L882.0 383.8ZM884.0 373.5L886.5 372.6L886.5 382.3L884.0 383.0ZM886.0 365.9L888.5 365.0L888.5 379.2L886.0 380.0ZM888.0 362.7L890.5 362.1L890.5 374.1L888.0 374.7ZM890.0 362.1L892.5 361.5L892.5 369.0L890.0 369.6ZM896.0 401.2L898.5 400.5L898.5 403.4L896.0 404.1ZM898.0 400.5L900.5 399.8L900.5 402.7L898.0 403.4ZM900.0 399.8L902.5 399.1L902.5 402.0L900.0 402.7ZM902.0 399.1L904.5 398.4L904.5 401.3L902.0 402.0ZM904.0 398.4L906.5 397.7L906.5 400.6L904.0 401.3ZM906.0 397.7L908.5 397.1L908.5 399.9L906.0 400.6ZM908.0 397.1L910.5 396.4L910.5 399.2L908.0 399.9ZM910.0 396.4L912.5 395.6L912.5 398.4L910.0 399.2ZM912.0 395.6L914.5 395.3L914.5 398.0L912.0 398.4ZM914.0 397.4L916.5 397.1L916.5 399.8L914.0 400.2ZM916.0 397.1L918.5 396.8L918.5 399.4L916.0 399.8ZM918.0 396.8L920.5 396.4L920.5 399.0L918.0 399.4ZM920.0 396.4L922.5 396.1L922.5 400.4L920.0 400.9ZM922.0 397.9L924.5 397.5L924.5 399.9L922.0 400.4ZM924.0 397.5L926.5 397.1L926.5 399.5L924.0 399.9ZM926.0 397.1L928.5 396.7L928.5 400.7L926.0 401.2ZM928.0 398.4L930.5 397.9L930.5 400.1L928.0 400.7ZM930.0 397.9L932.5 397.4L932.5 401.1L930.0 401.7ZM932.0 399.0L934.5 398.4L934.5 403.5L932.0 404.2ZM934.0 399.9L936.5 399.1L936.5 405.3L934.0 406.4ZM936.0 400.5L938.5 399.4L938.5 407.9L936.0 409.5ZM938.0 402.0L940.5 400.8L940.5 406.3L938.0 407.9Z"/>
<path fill="#00c0ff" d="M442.0 523.7L444.5 522.6L444.5 523.5L442.0 524.4ZM442.0 524.6L444.5 524.6L444.5 525.5L442.0 525.3ZM444.0 522.6L446.5 521.5L446.5 522.6L444.0 523.5ZM444.0 524.6L446.5 524.7L446.5 525.8L444.0 525.5ZM446.0 521.5L448.5 520.4L448.5 521.7L446.0 522.6ZM446.0 524.7L448.5 524.7L448.5 526.0L446.0 525.8ZM448.0 520.6L450.5 519.5L450.5 521.0L448.0 521.8ZM448.0 524.6L450.5 524.6L450.5 526.0L448.0 525.8ZM450.0 519.7L452.5 518.7L452.5 520.3L450.0 521.2ZM450.0 524.4L452.5 524.4L452.5 526.0L450.0 525.8ZM452.0 519.0L454.5 518.0L454.5 520.1L452.0 520.9ZM452.0 523.8L454.5 523.7L454.5 525.8L452.0 525.7ZM454.0 518.3L456.5 517.4L456.5 520.4L454.0 521.0ZM454.0 522.8L456.5 522.6L456.5 525.6L454.0 525.5ZM456.0 518.1L458.5 517.2L458.5 524.9L456.0 524.9ZM458.0 518.8L460.5 518.1L460.5 523.1L458.0 523.3ZM496.0 492.6L498.5 491.3L498.5 496.0L496.0 497.1ZM498.0 491.3L500.5 490.0L500.5 497.7L498.0 498.7ZM500.0 491.4L502.5 490.1L502.5 498.2L500.0 499.1ZM500.0 531.4L502.5 531.8L502.5 533.9L500.0 533.5ZM502.0 494.6L504.5 493.5L504.5 498.8L502.0 499.7ZM502.0 530.3L504.5 530.6L504.5 534.2L502.0 533.9ZM504.0 495.1L506.5 494.3L506.5 499.6L504.0 500.3ZM504.0 529.0L506.5 529.3L506.5 534.6L504.0 534.2ZM506.0 497.5L508.5 497.0L508.5 499.2L506.0 499.6ZM506.0 527.7L508.5 527.9L508.5 533.4L506.0 533.1ZM508.0 497.0L510.5 496.5L510.5 500.4L508.0 500.8ZM508.0 527.9L510.5 528.2L510.5 532.1L508.0 531.8ZM510.0 498.1L512.5 497.7L512.5 500.0L510.0 500.4ZM510.0 526.5L512.5 526.7L512.5 532.4L510.0 532.1ZM512.0 497.7L514.5 497.2L514.5 499.6L512.0 500.0ZM512.0 526.7L514.5 526.9L514.5 531.0L512.0 530.7ZM514.0 497.2L516.5 496.7L516.5 500.9L514.0 501.3ZM514.0 526.9L516.5 527.1L516.5 531.3L514.0 531.0ZM516.0 498.5L518.5 498.1L518.5 500.5L516.0 500.9ZM516.0 527.1L518.5 527.3L518.5 531.5L516.0 531.3ZM518.0 498.1L520.5 497.7L520.5 500.2L518.0 500.5ZM518.0 527.3L520.5 527.5L520.5 531.8L518.0 531.5ZM520.0 497.7L522.5 497.3L522.5 499.8L520.0 500.2ZM520.0 525.6L522.5 525.8L522.5 530.2L520.0 530.0ZM522.0 497.3L524.5 496.6L524.5 499.1L522.0 499.8ZM522.0 525.8L524.5 525.3L524.5 529.8L522.0 530.2ZM524.0 498.5L526.5 497.9L526.5 500.4L524.0 501.0ZM524.0 527.2L526.5 526.8L526.5 531.2L524.0 531.7ZM526.0 497.9L528.5 497.2L528.5 499.8L526.0 500.4ZM526.0 526.8L528.5 526.3L528.5 530.8L526.0 531.2ZM528.0 497.2L530.5 496.6L530.5 499.1L528.0 499.8ZM528.0 526.3L530.5 525.9L530.5 530.4L528.0 530.8ZM530.0 496.6L532.5 496.0L532.5 498.5L530.0 499.1ZM530.0 525.9L532.5 525.4L532.5 529.9L530.0 530.4ZM532.0 496.0L534.5 495.3L534.5 497.9L532.0 498.5ZM532.0 525.4L534.5 525.0L534.5 531.5L532.0 531.9ZM534.0 495.3L536.5 494.7L536.5 497.3L534.0 497.9ZM534.0 526.9L536.5 526.5L536.5 531.1L534.0 531.5ZM536.0 494.7L538.5 494.0L538.5 496.6L536.0 497.3ZM536.0 526.5L538.5 526.0L538.5 532.6L536.0 533.0ZM538.0 494.0L540.5 493.4L540.5 496.0L538.0 496.6ZM538.0 528.0L540.5 527.6L540.5 534.2L538.0 534.6ZM540.0 493.4L542.5 492.7L542.5 495.4L540.0 496.0ZM540.0 529.6L542.5 529.2L542.5 533.9L540.0 534.2ZM542.0 492.7L544.5 492.1L544.5 494.7L542.0 495.4ZM542.0 531.2L544.5 530.8L544.5 533.5L542.0 533.9ZM544.0 492.1L546.5 491.6L546.5 494.3L544.0 494.7ZM546.0 491.6L548.5 491.2L548.5 493.8L546.0 494.3ZM550.0 490.7L552.5 490.3L552.5 492.9L550.0 493.4ZM552.0 490.3L554.5 489.8L554.5 492.5L552.0 492.9ZM554.0 489.8L556.5 489.4L556.5 492.0L554.0 492.5ZM556.0 489.4L558.5 488.9L558.5 491.6L556.0 492.0ZM558.0 488.9L560.5 488.4L560.5 491.1L558.0 491.6ZM560.0 488.4L562.5 488.0L562.5 490.7L560.0 491.1ZM562.0 488.0L564.5 487.6L564.5 490.3L562.0 490.7ZM564.0 487.6L566.5 487.2L566.5 489.9L564.0 490.3ZM564.0 525.1L566.5 524.8L566.5 529.6L564.0 529.8ZM566.0 487.2L568.5 486.8L568.5 489.5L566.0 489.9ZM566.0 520.6L568.5 520.4L568.5 529.3L566.0 529.6ZM568.0 486.8L570.5 486.4L570.5 489.1L568.0 489.5ZM568.0 516.2L570.5 515.9L570.5 529.1L568.0 529.3ZM570.0 486.4L572.5 486.0L572.5 488.7L570.0 489.1ZM570.0 513.8L572.5 513.5L572.5 522.5L570.0 522.8ZM572.0 486.0L574.5 485.6L574.5 488.3L572.0 488.7ZM572.0 511.4L574.5 511.1L574.5 518.0L572.0 518.3ZM574.0 483.5L576.5 483.1L576.5 485.8L574.0 486.2ZM574.0 511.1L576.5 510.8L576.5 513.5L574.0 513.8ZM576.0 483.1L578.5 482.8L578.5 485.5L576.0 485.8ZM576.0 508.6L578.5 508.4L578.5 513.2L576.0 513.5ZM578.0 482.8L580.5 482.6L580.5 485.4L578.0 485.5ZM578.0 508.4L580.5 508.2L580.5 510.9L578.0 511.1ZM580.0 482.6L582.5 482.5L582.5 485.2L580.0 485.4ZM580.0 508.2L582.5 507.9L582.5 510.7L580.0 510.9ZM582.0 480.3L584.5 480.2L584.5 485.0L582.0 485.2ZM582.0 505.8L584.5 505.6L584.5 510.5L582.0 510.7ZM584.0 480.2L586.5 480.0L586.5 482.7L584.0 482.9ZM584.0 505.6L586.5 505.3L586.5 508.0L584.0 508.3ZM586.0 480.0L588.5 479.7L588.5 482.4L586.0 482.7ZM586.0 505.3L588.5 504.8L588.5 507.5L586.0 508.0ZM588.0 477.6L590.5 477.4L590.5 482.1L588.0 482.4ZM588.0 504.8L590.5 504.4L590.5 507.1L588.0 507.5ZM590.0 477.4L592.5 477.1L592.5 479.8L590.0 480.0ZM590.0 504.4L592.5 503.9L592.5 506.6L590.0 507.1ZM592.0 473.0L594.5 472.8L594.5 479.5L592.0 479.8ZM592.0 501.9L594.5 501.4L594.5 504.1L592.0 504.5ZM594.0 470.7L596.5 470.5L596.5 477.2L594.0 477.5ZM594.0 501.4L596.5 501.0L596.5 503.6L594.0 504.1ZM596.0 464.4L598.5 464.3L598.5 475.0L596.0 475.2ZM596.0 501.0L598.5 500.6L598.5 503.2L596.0 503.6ZM598.0 462.3L600.5 462.1L600.5 472.7L598.0 473.0ZM598.0 500.6L600.5 500.1L600.5 502.7L598.0 503.2ZM600.0 462.1L602.5 461.8L602.5 468.4L600.0 468.7ZM600.0 500.1L602.5 499.6L602.5 502.2L600.0 502.7ZM602.0 499.6L604.5 499.2L604.5 501.7L602.0 502.2ZM604.0 499.2L606.5 498.7L606.5 501.2L604.0 501.7ZM606.0 498.7L608.5 498.2L608.5 500.7L606.0 501.2ZM608.0 498.2L610.5 497.7L610.5 500.2L608.0 500.7ZM610.0 497.7L612.5 497.2L612.5 499.8L610.0 500.2ZM612.0 497.2L614.5 496.7L614.5 499.3L612.0 499.8ZM616.0 496.2L618.5 495.8L618.5 498.3L616.0 498.8ZM618.0 495.8L620.5 495.2L620.5 497.7L618.0 498.3ZM620.0 495.2L622.5 494.6L622.5 497.1L620.0 497.7ZM622.0 494.6L624.5 494.0L624.5 496.5L622.0 497.1ZM624.0 494.0L626.5 493.4L626.5 495.9L624.0 496.5ZM626.0 493.4L628.5 492.8L628.5 495.3L626.0 495.9ZM628.0 492.8L630.5 492.2L630.5 494.6L628.0 495.3ZM630.0 492.2L632.5 491.7L632.5 494.0L630.0 494.6ZM632.0 457.7L634.5 457.4L634.5 461.5L632.0 461.8ZM632.0 491.7L634.5 491.1L634.5 493.4L632.0 494.0ZM634.0 457.4L636.5 457.1L636.5 464.7L634.0 465.1ZM634.0 491.1L636.5 490.5L636.5 492.8L634.0 493.4ZM636.0 458.9L638.5 458.6L638.5 467.9L636.0 468.3ZM636.0 490.5L638.5 489.9L638.5 492.2L636.0 492.8ZM638.0 462.1L640.5 461.7L640.5 469.2L638.0 469.6ZM638.0 491.6L640.5 491.0L640.5 493.4L638.0 494.0ZM640.0 465.2L642.5 464.8L642.5 470.6L640.0 471.0ZM640.0 491.0L642.5 490.4L642.5 492.7L640.0 493.4ZM642.0 468.2L644.5 467.6L644.5 469.9L642.0 470.6ZM642.0 490.4L644.5 489.7L644.5 492.0L642.0 492.7ZM644.0 467.6L646.5 466.9L646.5 470.9L644.0 471.6ZM644.0 489.7L646.5 489.0L646.5 491.3L644.0 492.0ZM646.0 468.6L648.5 467.9L648.5 470.2L646.0 470.9ZM646.0 489.0L648.5 488.2L648.5 492.2L646.0 493.0ZM648.0 467.9L650.5 467.1L650.5 469.3L648.0 470.2ZM648.0 489.9L650.5 488.8L650.5 491.1L648.0 492.2ZM650.0 467.1L652.5 466.2L652.5 470.1L650.0 471.0ZM650.0 488.8L652.5 487.7L652.5 490.0L650.0 491.1ZM652.0 467.9L654.5 467.0L654.5 469.3L652.0 470.1ZM652.0 487.7L654.5 486.6L654.5 490.5L652.0 491.6ZM654.0 467.0L656.5 466.2L656.5 468.4L654.0 469.3ZM654.0 488.3L656.5 487.2L656.5 489.4L654.0 490.5ZM656.0 466.2L658.5 465.3L658.5 467.5L656.0 468.4ZM656.0 487.2L658.5 486.0L658.5 491.4L656.0 492.6ZM658.0 465.3L660.5 464.5L660.5 466.7L658.0 467.5ZM658.0 487.6L660.5 486.5L660.5 493.4L658.0 494.6ZM660.0 464.5L662.5 463.6L662.5 465.8L660.0 466.7ZM660.0 488.1L662.5 486.9L662.5 496.8L660.0 498.1ZM662.0 490.0L664.5 488.8L664.5 495.5L662.0 496.8ZM664.0 464.3L666.5 463.4L666.5 465.5L664.0 466.4ZM664.0 491.9L666.5 490.6L666.5 494.2L664.0 495.5ZM666.0 463.4L668.5 462.6L668.5 464.7L666.0 465.5ZM668.0 462.6L670.5 461.7L670.5 463.8L668.0 464.7ZM670.0 461.7L672.5 460.8L672.5 462.9L670.0 463.8ZM672.0 460.8L674.5 460.0L674.5 462.0L672.0 462.9ZM674.0 460.0L676.5 459.1L676.5 461.1L674.0 462.0ZM676.0 459.1L678.5 458.2L678.5 460.2L676.0 461.1ZM678.0 458.2L680.5 457.3L680.5 459.3L678.0 460.2ZM682.0 455.0L684.5 454.0L684.5 456.0L682.0 456.9ZM684.0 454.0L686.5 453.2L686.5 455.1L684.0 456.0ZM686.0 453.2L688.5 452.4L688.5 454.4L686.0 455.1ZM688.0 452.4L690.5 451.7L690.5 453.7L688.0 454.4ZM688.0 478.1L690.5 477.5L690.5 480.8L688.0 481.4ZM690.0 451.7L692.5 451.0L692.5 452.9L690.0 453.7ZM690.0 473.4L692.5 472.8L692.5 480.2L690.0 480.8ZM692.0 449.6L694.5 448.9L694.5 452.2L692.0 452.9ZM692.0 471.4L694.5 470.8L694.5 478.2L692.0 478.8ZM694.0 448.9L696.5 448.1L696.5 450.1L694.0 450.8ZM694.0 469.4L696.5 468.8L696.5 473.5L694.0 474.1ZM696.0 448.1L698.5 447.3L698.5 449.3L696.0 450.1ZM696.0 467.4L698.5 466.7L698.5 470.1L696.0 470.7ZM698.0 445.9L700.5 445.0L700.5 448.4L698.0 449.3ZM698.0 466.7L700.5 466.0L700.5 468.0L698.0 468.7ZM700.0 445.0L702.5 444.1L702.5 446.1L700.0 447.0ZM700.0 464.6L702.5 463.9L702.5 465.9L700.0 466.6ZM702.0 441.2L704.5 440.2L704.5 445.1L702.0 446.1ZM702.0 463.9L704.5 463.0L704.5 465.1L702.0 465.9ZM704.0 437.4L706.5 436.4L706.5 442.7L704.0 443.7ZM704.0 463.0L706.5 462.1L706.5 464.1L704.0 465.1ZM706.0 433.5L708.5 432.5L708.5 440.3L706.0 441.3ZM706.0 460.7L708.5 459.7L708.5 461.7L706.0 462.7ZM708.0 431.1L710.5 430.1L710.5 436.4L708.0 437.4ZM708.0 459.7L710.5 458.7L710.5 460.8L708.0 461.7ZM710.0 430.1L712.5 429.0L712.5 432.5L710.0 433.5ZM710.0 458.7L712.5 457.8L712.5 459.8L710.0 460.8ZM712.0 457.8L714.5 456.8L714.5 458.9L712.0 459.8ZM714.0 456.8L716.5 455.9L716.5 457.9L714.0 458.9ZM716.0 454.4L718.5 453.6L718.5 455.6L716.0 456.5ZM718.0 453.6L720.5 452.7L720.5 454.8L718.0 455.6ZM720.0 452.7L722.5 451.9L722.5 453.9L720.0 454.8ZM722.0 451.9L724.5 451.0L724.5 453.0L722.0 453.9ZM724.0 451.0L726.5 450.1L726.5 452.1L724.0 453.0ZM726.0 450.1L728.5 449.3L728.5 451.3L726.0 452.1ZM728.0 449.3L730.5 448.6L730.5 450.6L728.0 451.3ZM730.0 448.6L732.5 447.9L732.5 449.9L730.0 450.6ZM732.0 447.9L734.5 447.2L734.5 449.2L732.0 449.9ZM734.0 447.2L736.5 446.4L736.5 448.5L734.0 449.2ZM736.0 446.4L738.5 445.7L738.5 447.8L736.0 448.5ZM738.0 445.7L740.5 445.0L740.5 447.1L738.0 447.8ZM740.0 445.0L742.5 444.3L742.5 446.3L740.0 447.1ZM742.0 444.3L744.5 443.6L744.5 445.6L742.0 446.3ZM744.0 443.6L746.5 442.8L746.5 444.8L744.0 445.6ZM746.0 442.8L748.5 441.9L748.5 444.0L746.0 444.8ZM748.0 441.9L750.5 441.0L750.5 443.1L748.0 444.0ZM750.0 442.5L752.5 441.6L752.5 443.8L750.0 444.6ZM752.0 441.6L754.5 440.8L754.5 442.9L752.0 443.8ZM754.0 440.8L756.5 439.9L756.5 442.1L754.0 442.9ZM756.0 439.9L758.5 439.0L758.5 441.2L756.0 442.1ZM758.0 439.0L760.5 438.1L760.5 440.4L758.0 441.2ZM760.0 439.8L762.5 439.0L762.5 441.3L760.0 442.0ZM762.0 439.0L764.5 438.3L764.5 440.5L762.0 441.3ZM764.0 404.0L766.5 403.1L766.5 405.3L764.0 406.2ZM764.0 438.3L766.5 437.6L766.5 439.8L764.0 440.5ZM766.0 403.1L768.5 402.2L768.5 409.4L766.0 410.3ZM766.0 439.2L768.5 438.5L768.5 440.8L766.0 441.5ZM768.0 402.2L770.5 401.4L770.5 410.2L768.0 411.1ZM768.0 438.5L770.5 437.8L770.5 441.7L768.0 442.4ZM770.0 404.7L772.5 403.8L772.5 412.7L770.0 413.6ZM770.0 439.4L772.5 438.7L772.5 444.3L770.0 445.0ZM772.0 407.1L774.5 406.3L774.5 413.6L772.0 414.4ZM772.0 440.4L774.5 439.7L774.5 448.6L772.0 449.3ZM774.0 409.6L776.5 408.8L776.5 412.8L774.0 413.6ZM774.0 441.4L776.5 440.7L776.5 449.6L774.0 450.3ZM776.0 410.5L778.5 409.7L778.5 412.0L776.0 412.8ZM776.0 445.7L778.5 445.0L778.5 449.0L776.0 449.6ZM778.0 411.4L780.5 410.5L780.5 412.8L778.0 413.6ZM780.0 410.5L782.5 409.7L782.5 412.0L780.0 412.8ZM782.0 409.7L784.5 408.9L784.5 411.2L782.0 412.0ZM784.0 410.6L786.5 409.8L786.5 412.1L784.0 412.9ZM786.0 409.8L788.5 409.0L788.5 411.3L786.0 412.1ZM788.0 409.0L790.5 408.2L790.5 410.6L788.0 411.3ZM790.0 408.2L792.5 407.6L792.5 410.0L790.0 410.6ZM794.0 408.8L796.5 408.2L796.5 410.6L794.0 411.1ZM796.0 408.2L798.5 407.6L798.5 410.0L796.0 410.6ZM798.0 407.6L800.5 407.1L800.5 409.4L798.0 410.0ZM800.0 407.1L802.5 406.5L802.5 408.8L800.0 409.4ZM802.0 406.5L804.5 406.0L804.5 408.4L802.0 408.8ZM804.0 406.0L806.5 405.5L806.5 407.9L804.0 408.4ZM806.0 405.5L808.5 405.1L808.5 407.5L806.0 407.9ZM814.0 405.5L816.5 405.0L816.5 407.5L814.0 407.9ZM816.0 405.0L818.5 404.6L818.5 407.0L816.0 407.5ZM818.0 404.6L820.5 404.1L820.5 406.6L818.0 407.0ZM820.0 404.1L822.5 403.6L822.5 406.2L820.0 406.6ZM822.0 403.6L824.5 403.2L824.5 405.7L822.0 406.2ZM824.0 403.2L826.5 402.7L826.5 405.3L824.0 405.7ZM826.0 402.7L828.5 402.3L828.5 404.8L826.0 405.3ZM828.0 402.3L830.5 401.8L830.5 404.4L828.0 404.8ZM830.0 401.8L832.5 401.3L832.5 403.9L830.0 404.4ZM832.0 401.3L834.5 400.9L834.5 403.5L832.0 403.9ZM834.0 400.9L836.5 400.5L836.5 403.1L834.0 403.5ZM836.0 400.5L838.5 400.1L838.5 402.7L836.0 403.1ZM836.0 432.9L838.5 432.7L838.5 439.5L836.0 439.6ZM838.0 428.7L840.5 428.4L840.5 439.3L838.0 439.5ZM840.0 424.3L842.5 424.0L842.5 434.9L840.0 435.2ZM842.0 422.0L844.5 421.7L844.5 428.5L842.0 428.8ZM844.0 396.8L846.5 396.4L846.5 399.1L844.0 399.5ZM844.0 421.7L846.5 421.3L846.5 424.0L844.0 424.3ZM846.0 396.4L848.5 396.0L848.5 398.7L846.0 399.1ZM846.0 419.3L848.5 418.9L848.5 423.7L846.0 424.0ZM848.0 396.0L850.5 395.6L850.5 398.2L848.0 398.7ZM848.0 418.9L850.5 418.6L850.5 421.3L848.0 421.6ZM850.0 395.6L852.5 395.1L852.5 397.8L850.0 398.2ZM850.0 418.6L852.5 418.3L852.5 421.0L850.0 421.3ZM852.0 395.1L854.5 394.7L854.5 397.4L852.0 397.8ZM852.0 416.2L854.5 415.8L854.5 418.5L852.0 418.9ZM854.0 394.7L856.5 394.3L856.5 397.0L854.0 397.4ZM854.0 415.8L856.5 415.5L856.5 418.2L854.0 418.5ZM856.0 394.3L858.5 393.8L858.5 396.5L856.0 397.0ZM856.0 415.5L858.5 415.1L858.5 417.8L856.0 418.2ZM858.0 413.0L860.5 412.5L860.5 415.3L858.0 415.7ZM860.0 391.2L862.5 390.8L862.5 393.5L860.0 394.0ZM860.0 412.5L862.5 412.1L862.5 414.9L860.0 415.3ZM862.0 390.8L864.5 390.3L864.5 393.0L862.0 393.5ZM862.0 412.1L864.5 411.7L864.5 414.5L862.0 414.9ZM864.0 390.3L866.5 389.8L866.5 392.6L864.0 393.0ZM864.0 411.7L866.5 411.3L866.5 414.1L864.0 414.5ZM866.0 389.8L868.5 389.4L868.5 392.1L866.0 392.6ZM866.0 411.3L868.5 410.9L868.5 413.7L866.0 414.1ZM868.0 387.2L870.5 386.8L870.5 389.5L868.0 390.0ZM868.0 410.9L870.5 410.5L870.5 413.2L868.0 413.7ZM870.0 386.8L872.5 386.3L872.5 389.0L870.0 389.5ZM872.0 386.3L874.5 385.8L874.5 388.6L872.0 389.0ZM874.0 383.6L876.5 383.2L876.5 385.9L874.0 386.4ZM876.0 381.0L878.5 380.4L878.5 385.3L876.0 385.9ZM876.0 407.1L878.5 406.6L878.5 409.4L876.0 409.9ZM878.0 376.0L880.5 375.2L880.5 384.6L878.0 385.3ZM878.0 406.6L880.5 406.0L880.5 408.8L878.0 409.4ZM880.0 370.7L882.5 369.9L882.5 381.6L880.0 382.4ZM880.0 406.0L882.5 405.4L882.5 408.3L880.0 408.8ZM882.0 365.4L884.5 364.5L884.5 376.3L882.0 377.1ZM882.0 405.4L884.5 404.9L884.5 407.7L882.0 408.3ZM884.0 364.5L886.5 363.6L886.5 373.2L884.0 374.1ZM884.0 404.9L886.5 404.3L886.5 407.1L884.0 407.7ZM886.0 363.6L888.5 362.7L888.5 365.6L886.0 366.5ZM886.0 404.3L888.5 403.7L888.5 406.6L886.0 407.1ZM888.0 403.7L890.5 403.3L890.5 406.2L888.0 406.6ZM890.0 403.3L892.5 402.6L892.5 405.5L890.0 406.2ZM892.0 402.6L894.5 401.9L894.5 404.8L892.0 405.5ZM894.0 401.9L896.5 401.2L896.5 404.1L894.0 404.8ZM902.0 401.4L904.5 400.7L904.5 403.5L902.0 404.2ZM904.0 400.7L906.5 400.0L906.5 402.8L904.0 403.5ZM906.0 400.0L908.5 399.3L908.5 402.1L906.0 402.8ZM908.0 399.3L910.5 398.6L910.5 401.4L908.0 402.1ZM910.0 398.6L912.5 397.8L912.5 400.6L910.0 401.4ZM912.0 397.8L914.5 397.4L914.5 400.2L912.0 400.6ZM914.0 399.6L916.5 399.2L916.5 401.9L914.0 402.3ZM916.0 399.2L918.5 398.8L918.5 401.4L916.0 401.9ZM918.0 398.8L920.5 398.4L920.5 400.9L918.0 401.4ZM920.0 400.3L922.5 399.8L922.5 402.3L920.0 402.9ZM922.0 399.8L924.5 399.3L924.5 401.8L922.0 402.3ZM924.0 399.3L926.5 398.9L926.5 403.0L924.0 403.6ZM926.0 400.6L928.5 400.1L928.5 402.3L926.0 403.0ZM928.0 400.1L930.5 399.5L930.5 405.0L928.0 405.7ZM930.0 401.1L932.5 400.5L932.5 408.8L930.0 409.8ZM932.0 403.6L934.5 402.9L934.5 410.8L932.0 411.9ZM934.0 405.8L936.5 404.7L936.5 409.5L934.0 410.8Z"/>
<path fill="#00e2ff" d="M442.0 523.8L444.5 522.9L444.5 523.8L442.0 524.6ZM442.0 524.4L444.5 524.3L444.5 525.2L442.0 525.2ZM444.0 522.9L446.5 522.0L446.5 523.1L444.0 523.8ZM444.0 524.3L446.5 524.2L446.5 525.3L444.0 525.2ZM446.0 522.0L448.5 521.1L448.5 522.3L446.0 523.1ZM446.0 524.2L448.5 524.1L448.5 525.3L446.0 525.3ZM448.0 521.2L450.5 520.4L450.5 521.8L448.0 522.5ZM448.0 523.9L450.5 523.7L450.5 525.2L448.0 525.2ZM450.0 520.6L452.5 519.7L452.5 521.6L450.0 522.2ZM450.0 523.3L452.5 523.1L452.5 525.0L450.0 525.0ZM452.0 520.3L454.5 519.5L454.5 524.3L452.0 524.4ZM454.0 520.4L456.5 519.8L456.5 523.2L454.0 523.4ZM500.0 490.0L502.5 488.7L502.5 490.7L500.0 492.0ZM502.0 488.7L504.5 487.4L504.5 494.1L502.0 495.2ZM504.0 487.4L506.5 486.3L506.5 494.9L504.0 495.7ZM506.0 489.5L508.5 488.8L508.5 497.6L506.0 498.1ZM506.0 532.5L508.5 532.8L508.5 535.0L506.0 534.6ZM508.0 492.1L510.5 491.5L510.5 497.1L508.0 497.6ZM508.0 531.2L510.5 531.5L510.5 535.4L508.0 535.0ZM510.0 494.8L512.5 494.3L512.5 498.3L510.0 498.7ZM510.0 531.5L512.5 531.8L512.5 535.8L510.0 535.4ZM512.0 496.0L514.5 495.5L514.5 497.8L512.0 498.3ZM512.0 530.1L514.5 530.4L514.5 536.2L512.0 535.8ZM514.0 495.5L516.5 495.0L516.5 497.3L514.0 497.8ZM514.0 530.4L516.5 530.7L516.5 534.8L514.0 534.5ZM516.0 496.7L518.5 496.3L518.5 498.7L516.0 499.1ZM516.0 530.7L518.5 530.9L518.5 535.2L516.0 534.8ZM518.0 496.3L520.5 495.8L520.5 498.3L518.0 498.7ZM518.0 530.9L520.5 531.2L520.5 535.5L518.0 535.2ZM520.0 495.8L522.5 495.4L522.5 497.9L520.0 498.3ZM520.0 529.4L522.5 529.6L522.5 534.0L520.0 533.7ZM522.0 495.4L524.5 494.7L524.5 497.2L522.0 497.9ZM522.0 529.6L524.5 529.2L524.5 533.6L522.0 534.0ZM524.0 496.6L526.5 496.0L526.5 498.5L524.0 499.1ZM524.0 531.1L526.5 530.6L526.5 535.1L524.0 535.5ZM526.0 496.0L528.5 495.3L528.5 497.8L526.0 498.5ZM526.0 530.6L528.5 530.2L528.5 534.7L526.0 535.1ZM528.0 495.3L530.5 494.6L530.5 497.2L528.0 497.8ZM528.0 530.2L530.5 529.8L530.5 534.3L528.0 534.7ZM530.0 494.6L532.5 494.0L532.5 496.6L530.0 497.2ZM530.0 529.8L532.5 529.3L532.5 535.8L530.0 536.2ZM532.0 494.0L534.5 493.3L534.5 495.9L532.0 496.6ZM532.0 531.3L534.5 530.9L534.5 535.4L532.0 535.8ZM534.0 493.3L536.5 492.7L536.5 495.3L534.0 495.9ZM534.0 530.9L536.5 530.5L536.5 535.0L534.0 535.4ZM536.0 492.7L538.5 492.0L538.5 494.6L536.0 495.3ZM536.0 532.4L538.5 532.0L538.5 534.6L536.0 535.0ZM548.0 491.2L550.5 490.7L550.5 493.4L548.0 493.8ZM560.0 486.4L562.5 486.0L562.5 488.6L560.0 489.0ZM562.0 486.0L564.5 485.6L564.5 488.2L562.0 488.6ZM564.0 485.6L566.5 485.2L566.5 487.8L564.0 488.2ZM566.0 485.2L568.5 484.7L568.5 487.4L566.0 487.8ZM568.0 484.7L570.5 484.3L570.5 487.0L568.0 487.4ZM570.0 484.3L572.5 483.9L572.5 486.6L570.0 487.0ZM570.0 522.2L572.5 521.9L572.5 528.9L570.0 529.1ZM572.0 483.9L574.5 483.5L574.5 486.2L572.0 486.6ZM572.0 517.7L574.5 517.4L574.5 528.6L572.0 528.9ZM574.0 481.4L576.5 481.0L576.5 483.7L574.0 484.1ZM574.0 513.2L576.5 512.9L576.5 524.1L574.0 524.4ZM576.0 481.0L578.5 480.7L578.5 483.4L576.0 483.7ZM576.0 512.9L578.5 512.6L578.5 519.6L576.0 519.9ZM578.0 480.7L580.5 480.5L580.5 483.2L578.0 483.4ZM578.0 510.5L580.5 510.3L580.5 515.1L578.0 515.4ZM580.0 480.5L582.5 480.3L582.5 483.1L580.0 483.2ZM580.0 510.3L582.5 510.1L582.5 512.8L580.0 513.0ZM582.0 478.2L584.5 478.1L584.5 480.8L582.0 480.9ZM582.0 510.1L584.5 509.9L584.5 512.6L582.0 512.8ZM584.0 478.1L586.5 477.9L586.5 480.6L584.0 480.8ZM584.0 507.7L586.5 507.4L586.5 510.1L584.0 510.5ZM586.0 475.7L588.5 475.5L588.5 480.3L586.0 480.6ZM586.0 507.4L588.5 506.9L588.5 509.6L586.0 510.1ZM588.0 471.3L590.5 471.1L590.5 478.0L588.0 478.2ZM588.0 506.9L590.5 506.5L590.5 509.2L588.0 509.6ZM590.0 467.0L592.5 466.8L592.5 477.7L590.0 478.0ZM592.0 462.7L594.5 462.5L594.5 473.4L592.0 473.6ZM592.0 503.9L594.5 503.5L594.5 506.1L592.0 506.6ZM594.0 462.5L596.5 462.4L596.5 471.1L594.0 471.3ZM594.0 503.5L596.5 503.0L596.5 505.7L594.0 506.1ZM596.0 462.4L598.5 462.3L598.5 464.9L596.0 465.0ZM596.0 503.0L598.5 502.6L598.5 505.2L596.0 505.7ZM598.0 502.6L600.5 502.1L600.5 504.7L598.0 505.2ZM600.0 502.1L602.5 501.6L602.5 504.2L600.0 504.7ZM602.0 501.6L604.5 501.1L604.5 503.7L602.0 504.2ZM614.0 496.7L616.5 496.2L616.5 498.8L614.0 499.3ZM626.0 495.3L628.5 494.7L628.5 497.1L626.0 497.7ZM628.0 494.7L630.5 494.0L630.5 496.5L628.0 497.1ZM630.0 494.0L632.5 493.4L632.5 495.8L630.0 496.5ZM632.0 493.4L634.5 492.8L634.5 495.2L632.0 495.8ZM634.0 492.8L636.5 492.2L636.5 494.6L634.0 495.2ZM636.0 457.1L638.5 456.8L638.5 459.2L636.0 459.5ZM636.0 492.2L638.5 491.6L638.5 494.0L636.0 494.6ZM638.0 456.8L640.5 456.6L640.5 462.3L638.0 462.7ZM640.0 456.6L642.5 456.3L642.5 465.4L640.0 465.8ZM640.0 492.8L642.5 492.1L642.5 494.4L640.0 495.1ZM642.0 461.4L644.5 460.7L644.5 468.2L642.0 468.8ZM642.0 492.1L644.5 491.4L644.5 493.7L642.0 494.4ZM644.0 462.4L646.5 461.8L646.5 467.5L644.0 468.2ZM644.0 491.4L646.5 490.7L646.5 493.0L644.0 493.7ZM646.0 465.2L648.5 464.5L648.5 468.5L646.0 469.2ZM646.0 492.4L648.5 491.6L648.5 493.9L646.0 494.7ZM648.0 466.2L650.5 465.4L650.5 467.7L648.0 468.5ZM648.0 491.6L650.5 490.5L650.5 492.8L648.0 493.9ZM650.0 465.4L652.5 464.6L652.5 466.8L650.0 467.7ZM650.0 490.5L652.5 489.4L652.5 493.3L650.0 494.5ZM652.0 466.2L654.5 465.4L654.5 467.6L652.0 468.5ZM652.0 491.0L654.5 489.9L654.5 495.4L652.0 496.6ZM654.0 465.4L656.5 464.6L656.5 466.8L654.0 467.6ZM654.0 489.9L656.5 488.8L656.5 497.4L654.0 498.7ZM656.0 464.6L658.5 463.7L658.5 465.9L656.0 466.8ZM656.0 492.0L658.5 490.8L658.5 499.4L656.0 500.7ZM658.0 463.7L660.5 462.9L660.5 465.1L658.0 465.9ZM658.0 494.0L660.5 492.8L660.5 498.1L658.0 499.4ZM660.0 462.9L662.5 462.1L662.5 464.2L660.0 465.1ZM662.0 463.6L664.5 462.8L664.5 464.9L662.0 465.8ZM664.0 462.8L666.5 461.9L666.5 464.0L664.0 464.9ZM666.0 461.9L668.5 461.1L668.5 463.2L666.0 464.0ZM668.0 461.1L670.5 460.2L670.5 462.3L668.0 463.2ZM670.0 460.2L672.5 459.4L672.5 461.4L670.0 462.3ZM672.0 459.4L674.5 458.6L674.5 460.6L672.0 461.4ZM674.0 458.6L676.5 457.7L676.5 459.7L674.0 460.6ZM676.0 457.7L678.5 456.8L678.5 458.8L676.0 459.7ZM678.0 456.8L680.5 455.9L680.5 457.9L678.0 458.8ZM680.0 455.9L682.5 455.0L682.5 456.9L680.0 457.9ZM682.0 453.6L684.5 452.7L684.5 454.6L682.0 455.6ZM684.0 452.7L686.5 451.8L686.5 453.8L684.0 454.6ZM686.0 451.8L688.5 451.1L688.5 453.1L686.0 453.8ZM688.0 451.1L690.5 450.4L690.5 452.3L688.0 453.1ZM690.0 450.4L692.5 449.6L692.5 451.6L690.0 452.3ZM692.0 448.2L694.5 447.5L694.5 449.5L692.0 450.2ZM692.0 478.2L694.5 477.6L694.5 479.6L692.0 480.2ZM694.0 447.5L696.5 446.7L696.5 448.7L694.0 449.5ZM694.0 473.5L696.5 472.9L696.5 479.0L694.0 479.6ZM696.0 445.4L698.5 444.5L698.5 447.9L696.0 448.7ZM696.0 470.1L698.5 469.5L698.5 478.4L696.0 479.0ZM698.0 441.7L700.5 440.8L700.5 445.6L698.0 446.5ZM698.0 468.1L700.5 467.4L700.5 473.6L698.0 474.2ZM700.0 439.4L702.5 438.4L702.5 444.7L700.0 445.6ZM700.0 466.0L702.5 465.3L702.5 470.1L700.0 470.8ZM702.0 434.1L704.5 433.1L704.5 440.8L702.0 441.8ZM702.0 465.3L704.5 464.5L704.5 467.9L702.0 468.7ZM704.0 433.1L706.5 432.1L706.5 437.0L704.0 438.0ZM704.0 464.5L706.5 463.5L706.5 465.5L704.0 466.5ZM706.0 432.1L708.5 431.1L708.5 433.1L706.0 434.1ZM706.0 462.1L708.5 461.1L708.5 464.6L706.0 465.5ZM708.0 461.1L710.5 460.2L710.5 462.2L708.0 463.2ZM710.0 460.2L712.5 459.2L712.5 461.3L710.0 462.2ZM712.0 459.2L714.5 458.3L714.5 460.3L712.0 461.3ZM714.0 458.3L716.5 457.3L716.5 459.4L714.0 460.3ZM716.0 455.9L718.5 455.0L718.5 457.1L716.0 457.9ZM718.0 455.0L720.5 454.2L720.5 456.2L718.0 457.1ZM720.0 454.2L722.5 453.3L722.5 455.3L720.0 456.2ZM722.0 453.3L724.5 452.4L724.5 454.4L722.0 455.3ZM724.0 452.4L726.5 451.5L726.5 453.6L724.0 454.4ZM726.0 451.5L728.5 450.7L728.5 452.8L726.0 453.6ZM728.0 450.7L730.5 450.0L730.5 452.1L728.0 452.8ZM730.0 450.0L732.5 449.3L732.5 451.3L730.0 452.1ZM732.0 449.3L734.5 448.6L734.5 450.6L732.0 451.3ZM734.0 448.6L736.5 447.9L736.5 449.9L734.0 450.6ZM736.0 447.9L738.5 447.2L738.5 449.2L736.0 449.9ZM738.0 447.2L740.5 446.5L740.5 448.5L738.0 449.2ZM740.0 446.5L742.5 445.7L742.5 447.8L740.0 448.5ZM742.0 445.7L744.5 445.0L744.5 447.1L742.0 447.8ZM744.0 445.0L746.5 444.2L746.5 446.3L744.0 447.1ZM746.0 444.2L748.5 443.4L748.5 445.5L746.0 446.3ZM748.0 443.4L750.5 442.5L750.5 444.6L748.0 445.5ZM750.0 444.0L752.5 443.2L752.5 445.3L750.0 446.1ZM752.0 443.2L754.5 442.3L754.5 444.5L752.0 445.3ZM754.0 442.3L756.5 441.5L756.5 443.6L754.0 444.5ZM756.0 441.5L758.5 440.6L758.5 442.8L756.0 443.6ZM758.0 440.6L760.5 439.8L760.5 443.6L758.0 444.4ZM760.0 441.4L762.5 440.7L762.5 442.9L760.0 443.6ZM762.0 440.7L764.5 439.9L764.5 443.8L762.0 444.5ZM764.0 439.9L766.5 439.2L766.5 444.8L764.0 445.5ZM766.0 440.9L768.5 440.2L768.5 447.4L766.0 448.0ZM768.0 441.8L770.5 441.1L770.5 451.6L768.0 452.3ZM770.0 401.4L772.5 400.5L772.5 404.4L770.0 405.3ZM770.0 444.4L772.5 443.7L772.5 451.0L770.0 451.6ZM772.0 400.5L774.5 399.6L774.5 406.9L772.0 407.7ZM772.0 448.7L774.5 448.0L774.5 450.3L772.0 451.0ZM774.0 401.3L776.5 400.4L776.5 409.4L774.0 410.2ZM776.0 403.8L778.5 402.9L778.5 410.3L776.0 411.1ZM778.0 406.3L780.5 405.5L780.5 411.1L778.0 412.0ZM780.0 407.2L782.5 406.3L782.5 410.3L780.0 411.1ZM782.0 408.0L784.5 407.2L784.5 409.5L782.0 410.3ZM784.0 408.9L786.5 408.1L786.5 410.4L784.0 411.2ZM786.0 408.1L788.5 407.3L788.5 409.6L786.0 410.4ZM788.0 407.3L790.5 406.5L790.5 408.8L788.0 409.6ZM790.0 406.5L792.5 405.9L792.5 408.2L790.0 408.8ZM792.0 407.6L794.5 407.1L794.5 409.4L792.0 410.0ZM794.0 407.1L796.5 406.5L796.5 408.8L794.0 409.4ZM796.0 406.5L798.5 405.9L798.5 408.2L796.0 408.8ZM798.0 405.9L800.5 405.3L800.5 407.7L798.0 408.2ZM800.0 405.3L802.5 404.7L802.5 407.1L800.0 407.7ZM802.0 404.7L804.5 404.2L804.5 406.6L802.0 407.1ZM808.0 405.1L810.5 404.6L810.5 407.0L808.0 407.5ZM810.0 404.6L812.5 404.1L812.5 406.5L810.0 407.0ZM812.0 404.1L814.5 403.6L814.5 406.1L812.0 406.5ZM814.0 403.6L816.5 403.1L816.5 405.6L814.0 406.1ZM816.0 403.1L818.5 402.7L818.5 405.2L816.0 405.6ZM818.0 402.7L820.5 402.2L820.5 404.7L818.0 405.2ZM820.0 402.2L822.5 401.7L822.5 404.2L820.0 404.7ZM822.0 401.7L824.5 401.2L824.5 403.8L822.0 404.2ZM824.0 401.2L826.5 400.8L826.5 403.3L824.0 403.8ZM826.0 400.8L828.5 400.3L828.5 402.9L826.0 403.3ZM828.0 400.3L830.5 399.8L830.5 402.4L828.0 402.9ZM830.0 399.8L832.5 399.3L832.5 401.9L830.0 402.4ZM832.0 399.3L834.5 398.9L834.5 401.5L832.0 401.9ZM834.0 398.9L836.5 398.5L836.5 401.1L834.0 401.5ZM836.0 398.5L838.5 398.1L838.5 400.7L836.0 401.1ZM838.0 398.1L840.5 397.7L840.5 400.3L838.0 400.7ZM840.0 397.7L842.5 397.3L842.5 399.9L840.0 400.3ZM840.0 434.6L842.5 434.3L842.5 439.1L840.0 439.3ZM842.0 397.3L844.5 396.8L844.5 399.5L842.0 399.9ZM842.0 428.2L844.5 427.9L844.5 438.8L842.0 439.1ZM844.0 423.7L846.5 423.4L846.5 434.4L844.0 434.7ZM846.0 423.4L848.5 423.1L848.5 430.0L846.0 430.2ZM848.0 393.9L850.5 393.5L850.5 396.2L848.0 396.6ZM848.0 421.0L850.5 420.7L850.5 425.5L848.0 425.8ZM850.0 393.5L852.5 393.0L852.5 395.7L850.0 396.2ZM850.0 420.7L852.5 420.4L852.5 423.1L850.0 423.4ZM852.0 393.0L854.5 392.6L854.5 395.3L852.0 395.7ZM852.0 418.3L854.5 417.9L854.5 420.7L852.0 421.0ZM854.0 392.6L856.5 392.2L856.5 394.9L854.0 395.3ZM854.0 417.9L856.5 417.6L856.5 420.3L854.0 420.7ZM856.0 392.2L858.5 391.7L858.5 394.4L856.0 394.9ZM856.0 417.6L858.5 417.2L858.5 419.9L856.0 420.3ZM858.0 391.7L860.5 391.2L860.5 394.0L858.0 394.4ZM858.0 415.1L860.5 414.7L860.5 417.4L858.0 417.8ZM860.0 389.1L862.5 388.6L862.5 391.4L860.0 391.8ZM860.0 414.7L862.5 414.3L862.5 417.0L860.0 417.4ZM862.0 388.6L864.5 388.2L864.5 390.9L862.0 391.4ZM862.0 414.3L864.5 413.9L864.5 416.6L862.0 417.0ZM864.0 388.2L866.5 387.7L866.5 390.4L864.0 390.9ZM864.0 413.9L866.5 413.5L866.5 416.2L864.0 416.6ZM866.0 387.7L868.5 387.2L868.5 390.0L866.0 390.4ZM866.0 413.5L868.5 413.1L868.5 415.8L866.0 416.2ZM868.0 385.1L870.5 384.6L870.5 387.4L868.0 387.8ZM870.0 382.4L872.5 382.0L872.5 386.9L870.0 387.4ZM870.0 410.5L872.5 410.1L872.5 412.8L870.0 413.2ZM872.0 379.8L874.5 379.3L874.5 386.4L872.0 386.9ZM872.0 410.1L874.5 409.7L874.5 412.4L872.0 412.8ZM874.0 375.0L876.5 374.5L876.5 383.8L874.0 384.2ZM874.0 409.7L876.5 409.3L876.5 412.0L874.0 412.4ZM876.0 370.1L878.5 369.4L878.5 381.0L876.0 381.6ZM876.0 409.3L878.5 408.8L878.5 411.6L876.0 412.0ZM878.0 367.2L880.5 366.3L880.5 375.8L878.0 376.6ZM878.0 408.8L880.5 408.2L880.5 411.0L878.0 411.6ZM880.0 366.3L882.5 365.4L882.5 370.5L880.0 371.3ZM880.0 408.2L882.5 407.7L882.5 410.5L880.0 411.0ZM882.0 407.7L884.5 407.1L884.5 409.9L882.0 410.5ZM884.0 407.1L886.5 406.5L886.5 409.4L884.0 409.9ZM886.0 406.5L888.5 406.0L888.5 408.9L886.0 409.4ZM888.0 406.0L890.5 405.6L890.5 408.4L888.0 408.9ZM890.0 405.6L892.5 404.9L892.5 407.7L890.0 408.4ZM892.0 404.9L894.5 404.2L894.5 407.0L892.0 407.7ZM894.0 404.2L896.5 403.5L896.5 406.3L894.0 407.0ZM896.0 403.5L898.5 402.8L898.5 405.6L896.0 406.3ZM898.0 402.8L900.5 402.1L900.5 404.9L898.0 405.6ZM900.0 402.1L902.5 401.4L902.5 404.2L900.0 404.9ZM904.0 402.9L906.5 402.2L906.5 405.1L904.0 405.8ZM906.0 402.2L908.5 401.5L908.5 404.4L906.0 405.1ZM908.0 401.5L910.5 400.8L910.5 403.6L908.0 404.4ZM910.0 400.8L912.5 400.0L912.5 402.8L910.0 403.6ZM912.0 400.0L914.5 399.6L914.5 402.3L912.0 402.8ZM914.0 401.7L916.5 401.3L916.5 403.9L914.0 404.5ZM916.0 401.3L918.5 400.8L918.5 403.4L916.0 403.9ZM918.0 400.8L920.5 400.3L920.5 402.9L918.0 403.4ZM920.0 402.3L922.5 401.7L922.5 404.2L920.0 404.8ZM922.0 401.7L924.5 401.2L924.5 405.4L922.0 406.1ZM924.0 403.0L926.5 402.4L926.5 408.2L924.0 409.0ZM926.0 402.4L928.5 401.7L928.5 410.7L926.0 411.7ZM928.0 405.1L930.5 404.4L930.5 413.0L928.0 414.1ZM930.0 409.2L932.5 408.2L932.5 411.9L930.0 413.0Z"/>
<path fill="#00ffdc" d="M442.0 524.0L444.5 523.2L444.5 524.1L442.0 524.7ZM442.0 524.3L444.5 524.1L444.5 524.9L442.0 525.0ZM444.0 523.2L446.5 522.5L446.5 523.4L444.0 524.1ZM444.0 524.1L446.5 523.8L446.5 524.8L444.0 524.9ZM446.0 522.5L448.5 521.7L448.5 523.2L446.0 523.7ZM446.0 523.6L448.5 523.2L448.5 524.7L446.0 524.8ZM448.0 521.9L450.5 521.2L450.5 524.3L448.0 524.5ZM450.0 521.6L452.5 521.0L452.5 523.7L450.0 523.9ZM506.0 486.3L508.5 485.5L508.5 489.4L506.0 490.1ZM508.0 485.5L510.5 484.8L510.5 492.1L508.0 492.7ZM510.0 486.4L512.5 485.7L512.5 494.9L510.0 495.4ZM512.0 489.1L514.5 488.5L514.5 496.1L512.0 496.6ZM514.0 492.0L516.5 491.4L516.5 495.6L514.0 496.1ZM514.0 533.9L516.5 534.2L516.5 536.6L514.0 536.2ZM516.0 493.2L518.5 492.6L518.5 496.9L516.0 497.3ZM516.0 534.2L518.5 534.6L518.5 537.0L516.0 536.6ZM518.0 494.5L520.5 494.0L520.5 496.4L518.0 496.9ZM518.0 534.6L520.5 534.9L520.5 537.4L518.0 537.0ZM520.0 494.0L522.5 493.5L522.5 496.0L520.0 496.4ZM520.0 533.1L522.5 533.4L522.5 537.8L520.0 537.4ZM522.0 533.4L524.5 533.0L524.5 537.4L522.0 537.8ZM524.0 494.7L526.5 494.0L526.5 496.6L524.0 497.2ZM524.0 534.9L526.5 534.5L526.5 537.0L524.0 537.4ZM526.0 494.0L528.5 493.4L528.5 495.9L526.0 496.6ZM526.0 534.5L528.5 534.1L528.5 536.6L526.0 537.0ZM528.0 493.4L530.5 492.7L530.5 495.2L528.0 495.9ZM528.0 534.1L530.5 533.7L530.5 536.2L528.0 536.6ZM530.0 492.7L532.5 492.0L532.5 494.6L530.0 495.2ZM532.0 492.0L534.5 491.4L534.5 493.9L532.0 494.6ZM538.0 492.0L540.5 491.4L540.5 494.0L538.0 494.6ZM540.0 491.4L542.5 490.7L542.5 493.3L540.0 494.0ZM542.0 490.7L544.5 490.0L544.5 492.7L542.0 493.3ZM544.0 490.0L546.5 489.6L546.5 492.2L544.0 492.7ZM546.0 489.6L548.5 489.1L548.5 491.8L546.0 492.2ZM548.0 489.1L550.5 488.7L550.5 491.3L548.0 491.8ZM550.0 488.7L552.5 488.2L552.5 490.9L550.0 491.3ZM552.0 488.2L554.5 487.8L554.5 490.4L552.0 490.9ZM554.0 487.8L556.5 487.3L556.5 490.0L554.0 490.4ZM556.0 487.3L558.5 486.8L558.5 489.5L556.0 490.0ZM558.0 486.8L560.5 486.4L560.5 489.0L558.0 489.5ZM564.0 483.5L566.5 483.1L566.5 485.8L564.0 486.2ZM566.0 483.1L568.5 482.6L568.5 485.3L566.0 485.8ZM568.0 482.6L570.5 482.2L570.5 484.9L568.0 485.3ZM570.0 482.2L572.5 481.8L572.5 484.5L570.0 484.9ZM572.0 481.8L574.5 481.4L574.5 484.1L572.0 484.5ZM574.0 523.8L576.5 523.5L576.5 528.4L574.0 528.6ZM576.0 478.8L578.5 478.5L578.5 481.3L576.0 481.6ZM576.0 519.3L578.5 519.0L578.5 528.1L576.0 528.4ZM578.0 478.5L580.5 478.4L580.5 481.1L578.0 481.3ZM578.0 514.8L580.5 514.5L580.5 525.8L578.0 526.0ZM580.0 476.3L582.5 476.1L582.5 480.9L580.0 481.1ZM580.0 512.4L582.5 512.2L582.5 521.3L580.0 521.5ZM582.0 474.0L584.5 473.8L584.5 478.7L582.0 478.8ZM582.0 512.2L584.5 512.0L584.5 516.8L582.0 517.0ZM584.0 469.6L586.5 469.4L586.5 478.5L584.0 478.7ZM584.0 509.9L586.5 509.5L586.5 514.3L584.0 514.7ZM586.0 465.2L588.5 465.0L588.5 476.1L586.0 476.3ZM586.0 509.5L588.5 509.0L588.5 511.7L586.0 512.2ZM588.0 462.9L590.5 462.8L590.5 471.7L588.0 471.9ZM588.0 509.0L590.5 508.6L590.5 511.2L588.0 511.7ZM590.0 462.8L592.5 462.7L592.5 467.4L590.0 467.6ZM590.0 506.5L592.5 506.0L592.5 508.7L590.0 509.2ZM592.0 506.0L594.5 505.5L594.5 508.2L592.0 508.7ZM594.0 505.5L596.5 505.1L596.5 507.7L594.0 508.2ZM596.0 505.1L598.5 504.6L598.5 507.2L596.0 507.7ZM598.0 504.6L600.5 504.1L600.5 506.7L598.0 507.2ZM604.0 501.1L606.5 500.6L606.5 503.2L604.0 503.7ZM606.0 500.6L608.5 500.1L608.5 502.7L606.0 503.2ZM608.0 500.1L610.5 499.6L610.5 502.2L608.0 502.7ZM610.0 499.6L612.5 499.2L612.5 501.7L610.0 502.2ZM612.0 499.2L614.5 498.7L614.5 501.2L612.0 501.7ZM614.0 498.7L616.5 498.2L616.5 500.7L614.0 501.2ZM616.0 498.2L618.5 497.7L618.5 500.2L616.0 500.7ZM618.0 497.7L620.5 497.1L620.5 499.5L618.0 500.2ZM620.0 497.1L622.5 496.5L622.5 498.9L620.0 499.5ZM622.0 496.5L624.5 495.9L624.5 498.3L622.0 498.9ZM624.0 495.9L626.5 495.3L626.5 497.7L624.0 498.3ZM630.0 495.9L632.5 495.2L632.5 497.6L630.0 498.3ZM632.0 495.2L634.5 494.6L634.5 497.0L632.0 497.6ZM634.0 494.6L636.5 494.0L636.5 496.4L634.0 497.0ZM636.0 494.0L638.5 493.4L638.5 495.7L636.0 496.4ZM638.0 493.4L640.5 492.8L640.5 495.1L638.0 495.7ZM640.0 494.5L642.5 493.8L642.5 496.2L640.0 496.8ZM642.0 456.3L644.5 455.6L644.5 461.3L642.0 462.0ZM642.0 493.8L644.5 493.1L644.5 495.4L642.0 496.2ZM644.0 455.6L646.5 455.0L646.5 462.4L644.0 463.0ZM644.0 493.1L646.5 492.4L646.5 496.4L644.0 497.1ZM646.0 458.4L648.5 457.7L648.5 465.1L646.0 465.8ZM646.0 494.1L648.5 493.3L648.5 497.3L646.0 498.1ZM648.0 459.4L650.5 458.7L650.5 466.0L648.0 466.8ZM648.0 493.3L650.5 492.2L650.5 499.5L648.0 500.7ZM650.0 462.0L652.5 461.3L652.5 465.2L650.0 466.0ZM650.0 493.9L652.5 492.7L652.5 501.6L650.0 502.8ZM652.0 462.9L654.5 462.1L654.5 466.0L652.0 466.8ZM652.0 496.0L654.5 494.8L654.5 501.9L652.0 503.2ZM654.0 463.8L656.5 463.0L656.5 465.2L654.0 466.0ZM654.0 498.1L656.5 496.8L656.5 500.7L654.0 501.9ZM656.0 463.0L658.5 462.1L658.5 464.3L656.0 465.2ZM658.0 462.1L660.5 461.3L660.5 463.5L658.0 464.3ZM662.0 462.1L664.5 461.3L664.5 463.4L662.0 464.2ZM664.0 461.3L666.5 460.4L666.5 462.5L664.0 463.4ZM666.0 460.4L668.5 459.6L668.5 461.7L666.0 462.5ZM668.0 459.6L670.5 458.8L670.5 460.8L668.0 461.7ZM670.0 458.8L672.5 457.9L672.5 460.0L670.0 460.8ZM672.0 457.9L674.5 457.1L674.5 459.2L672.0 460.0ZM674.0 457.1L676.5 456.3L676.5 458.3L674.0 459.2ZM676.0 456.3L678.5 455.4L678.5 457.4L676.0 458.3ZM678.0 455.4L680.5 454.5L680.5 456.5L678.0 457.4ZM680.0 454.5L682.5 453.6L682.5 455.6L680.0 456.5ZM684.0 451.3L686.5 450.5L686.5 452.4L684.0 453.3ZM686.0 450.5L688.5 449.8L688.5 451.7L686.0 452.4ZM688.0 449.8L690.5 449.0L690.5 451.0L688.0 451.7ZM690.0 447.6L692.5 446.9L692.5 450.2L690.0 451.0ZM692.0 445.5L694.5 444.8L694.5 448.1L692.0 448.8ZM694.0 442.0L696.5 441.2L696.5 447.3L694.0 448.1ZM696.0 439.9L698.5 439.0L698.5 445.1L696.0 446.0ZM698.0 436.2L700.5 435.2L700.5 441.4L698.0 442.3ZM698.0 473.6L700.5 473.0L700.5 477.8L698.0 478.4ZM700.0 435.2L702.5 434.1L702.5 439.0L700.0 440.0ZM700.0 470.2L702.5 469.5L702.5 477.2L700.0 477.8ZM702.0 468.1L704.5 467.3L704.5 473.6L702.0 474.4ZM704.0 465.9L706.5 464.9L706.5 469.8L704.0 470.7ZM706.0 464.9L708.5 464.0L708.5 467.5L706.0 468.4ZM708.0 462.6L710.5 461.6L710.5 465.1L708.0 466.0ZM710.0 461.6L712.5 460.7L712.5 462.7L710.0 463.7ZM712.0 460.7L714.5 459.7L714.5 461.8L712.0 462.7ZM716.0 457.3L718.5 456.5L718.5 458.5L716.0 459.4ZM718.0 456.5L720.5 455.6L720.5 457.6L718.0 458.5ZM720.0 455.6L722.5 454.7L722.5 456.7L720.0 457.6ZM722.0 454.7L724.5 453.8L724.5 455.9L722.0 456.7ZM724.0 453.8L726.5 453.0L726.5 455.0L724.0 455.9ZM726.0 453.0L728.5 452.2L728.5 454.2L726.0 455.0ZM728.0 452.2L730.5 451.5L730.5 453.5L728.0 454.2ZM736.0 449.3L738.5 448.6L738.5 450.7L736.0 451.4ZM738.0 448.6L740.5 447.9L740.5 450.0L738.0 450.7ZM740.0 447.9L742.5 447.2L742.5 449.3L740.0 450.0ZM742.0 447.2L744.5 446.5L744.5 448.6L742.0 449.3ZM744.0 446.5L746.5 445.7L746.5 447.8L744.0 448.6ZM746.0 445.7L748.5 444.9L748.5 447.0L746.0 447.8ZM748.0 444.9L750.5 444.0L750.5 446.1L748.0 447.0ZM752.0 444.7L754.5 443.9L754.5 446.0L752.0 446.9ZM754.0 443.9L756.5 443.0L756.5 445.2L754.0 446.0ZM756.0 443.0L758.5 442.2L758.5 446.0L756.0 446.8ZM758.0 443.8L760.5 443.0L760.5 446.9L758.0 447.6ZM760.0 443.0L762.5 442.3L762.5 447.8L760.0 448.5ZM762.0 443.9L764.5 443.2L764.5 450.4L762.0 451.0ZM764.0 444.9L766.5 444.2L766.5 453.0L764.0 453.6ZM766.0 447.4L768.5 446.8L768.5 452.3L766.0 453.0ZM774.0 399.6L776.5 398.8L776.5 401.0L774.0 401.9ZM776.0 398.8L778.5 397.9L778.5 403.5L776.0 404.4ZM778.0 397.9L780.5 397.0L780.5 406.1L778.0 406.9ZM780.0 400.4L782.5 399.6L782.5 406.9L780.0 407.8ZM782.0 402.9L784.5 402.1L784.5 407.8L782.0 408.6ZM784.0 403.8L786.5 403.0L786.5 408.7L784.0 409.5ZM786.0 404.7L788.5 403.9L788.5 407.9L786.0 408.7ZM788.0 405.6L790.5 404.8L790.5 407.1L788.0 407.9ZM790.0 404.8L792.5 404.2L792.5 406.5L790.0 407.1ZM792.0 405.9L794.5 405.3L794.5 407.7L792.0 408.2ZM794.0 405.3L796.5 404.7L796.5 407.1L794.0 407.7ZM796.0 404.7L798.5 404.1L798.5 406.5L796.0 407.1ZM798.0 404.1L800.5 403.6L800.5 405.9L798.0 406.5ZM804.0 404.2L806.5 403.7L806.5 406.1L804.0 406.6ZM806.0 403.7L808.5 403.2L808.5 405.7L806.0 406.1ZM808.0 403.2L810.5 402.8L810.5 405.2L808.0 405.7ZM810.0 402.8L812.5 402.3L812.5 404.7L810.0 405.2ZM812.0 402.3L814.5 401.8L814.5 404.2L812.0 404.7ZM814.0 401.8L816.5 401.3L816.5 403.7L814.0 404.2ZM816.0 401.3L818.5 400.8L818.5 403.3L816.0 403.7ZM818.0 400.8L820.5 400.3L820.5 402.8L818.0 403.3ZM820.0 400.3L822.5 399.8L822.5 402.3L820.0 402.8ZM822.0 399.8L824.5 399.3L824.5 401.8L822.0 402.3ZM824.0 399.3L826.5 398.8L826.5 401.4L824.0 401.8ZM826.0 398.8L828.5 398.3L828.5 400.9L826.0 401.4ZM828.0 398.3L830.5 397.8L830.5 400.4L828.0 400.9ZM830.0 397.8L832.5 397.3L832.5 399.9L830.0 400.4ZM832.0 397.3L834.5 396.8L834.5 399.5L832.0 399.9ZM834.0 396.8L836.5 396.4L836.5 399.1L834.0 399.5ZM836.0 396.4L838.5 396.0L838.5 398.7L836.0 399.1ZM838.0 396.0L840.5 395.6L840.5 398.3L838.0 398.7ZM840.0 395.6L842.5 395.2L842.5 397.9L840.0 398.3ZM842.0 395.2L844.5 394.8L844.5 397.4L842.0 397.9ZM844.0 394.8L846.5 394.3L846.5 397.0L844.0 397.4ZM844.0 434.1L846.5 433.8L846.5 438.6L844.0 438.8ZM846.0 394.3L848.5 393.9L848.5 396.6L846.0 397.0ZM846.0 429.6L848.5 429.4L848.5 438.3L846.0 438.6ZM848.0 425.2L850.5 424.9L850.5 436.0L848.0 436.2ZM850.0 422.8L852.5 422.5L852.5 429.4L850.0 429.7ZM852.0 390.9L854.5 390.5L854.5 393.2L852.0 393.6ZM852.0 420.4L854.5 420.1L854.5 427.0L852.0 427.3ZM854.0 390.5L856.5 390.0L856.5 392.8L854.0 393.2ZM854.0 420.1L856.5 419.7L856.5 424.6L854.0 424.9ZM856.0 390.0L858.5 389.6L858.5 392.3L856.0 392.8ZM856.0 419.7L858.5 419.3L858.5 422.1L856.0 422.5ZM858.0 389.6L860.5 389.1L860.5 391.8L858.0 392.3ZM858.0 417.2L860.5 416.8L860.5 419.5L858.0 419.9ZM860.0 387.0L862.5 386.5L862.5 389.2L860.0 389.7ZM860.0 416.8L862.5 416.4L862.5 419.1L860.0 419.5ZM862.0 386.5L864.5 386.0L864.5 388.8L862.0 389.2ZM862.0 416.4L864.5 416.0L864.5 418.8L862.0 419.1ZM864.0 383.9L866.5 383.4L866.5 388.3L864.0 388.8ZM864.0 416.0L866.5 415.6L866.5 418.4L864.0 418.8ZM866.0 381.3L868.5 380.8L868.5 387.8L866.0 388.3ZM868.0 378.6L870.5 378.1L870.5 385.2L868.0 385.7ZM868.0 413.1L870.5 412.6L870.5 415.4L868.0 415.8ZM870.0 373.8L872.5 373.3L872.5 382.6L870.0 383.0ZM870.0 412.6L872.5 412.2L872.5 415.0L870.0 415.4ZM872.0 369.0L874.5 368.5L874.5 379.9L872.0 380.4ZM872.0 412.2L874.5 411.8L874.5 414.6L872.0 415.0ZM874.0 368.5L876.5 368.0L876.5 375.1L874.0 375.6ZM874.0 411.8L876.5 411.4L876.5 414.2L874.0 414.6ZM876.0 368.0L878.5 367.2L878.5 370.0L876.0 370.7ZM876.0 411.4L878.5 411.0L878.5 413.7L876.0 414.2ZM878.0 411.0L880.5 410.4L880.5 413.2L878.0 413.7ZM880.0 410.4L882.5 409.9L882.5 412.7L880.0 413.2ZM882.0 409.9L884.5 409.3L884.5 412.2L882.0 412.7ZM884.0 409.3L886.5 408.8L886.5 411.7L884.0 412.2ZM886.0 408.8L888.5 408.3L888.5 411.1L886.0 411.7ZM888.0 408.3L890.5 407.8L890.5 410.7L888.0 411.1ZM890.0 407.8L892.5 407.1L892.5 410.0L890.0 410.7ZM892.0 407.1L894.5 406.4L894.5 409.3L892.0 410.0ZM894.0 406.4L896.5 405.7L896.5 408.6L894.0 409.3ZM896.0 405.7L898.5 405.0L898.5 407.9L896.0 408.6ZM898.0 405.0L900.5 404.3L900.5 407.2L898.0 407.9ZM900.0 404.3L902.5 403.6L902.5 406.5L900.0 407.2ZM902.0 403.6L904.5 402.9L904.5 405.8L902.0 406.5ZM906.0 404.5L908.5 403.8L908.5 406.6L906.0 407.3ZM908.0 403.8L910.5 403.0L910.5 405.9L908.0 406.6ZM910.0 403.0L912.5 402.2L912.5 405.0L910.0 405.9ZM912.0 402.2L914.5 401.7L914.5 404.5L912.0 405.0ZM914.0 403.9L916.5 403.3L916.5 406.0L914.0 406.6ZM916.0 403.3L918.5 402.8L918.5 407.4L916.0 408.1ZM918.0 402.8L920.5 402.3L920.5 408.7L918.0 409.4ZM920.0 404.2L922.5 403.6L922.5 409.8L920.0 410.6ZM922.0 405.5L924.5 404.8L924.5 414.4L922.0 415.5ZM924.0 408.4L926.5 407.6L926.5 415.2L924.0 416.3ZM926.0 411.1L928.5 410.1L928.5 414.1L926.0 415.2Z"/>
<path fill="#00ff66" d="M442.0 524.1L444.5 523.5L444.5 524.7L442.0 524.9ZM444.0 523.5L446.5 522.8L446.5 524.4L444.0 524.7ZM446.0 523.1L448.5 522.6L448.5 523.8L446.0 524.2ZM510.0 484.8L512.5 484.0L512.5 486.3L510.0 487.0ZM512.0 484.0L514.5 483.2L514.5 489.1L512.0 489.7ZM514.0 483.2L516.5 482.5L516.5 492.0L514.0 492.6ZM516.0 486.0L518.5 485.3L518.5 493.2L516.0 493.8ZM518.0 487.2L520.5 486.5L520.5 494.6L518.0 495.1ZM520.0 490.2L522.5 489.7L522.5 494.1L520.0 494.6ZM522.0 491.6L524.5 490.9L524.5 495.3L522.0 496.0ZM524.0 490.9L526.5 490.2L526.5 494.6L524.0 495.3ZM526.0 492.1L528.5 491.4L528.5 494.0L526.0 494.6ZM528.0 491.4L530.5 490.7L530.5 493.3L528.0 494.0ZM534.0 491.4L536.5 490.7L536.5 493.3L534.0 493.9ZM536.0 490.7L538.5 490.0L538.5 492.6L536.0 493.3ZM538.0 490.0L540.5 489.3L540.5 492.0L538.0 492.6ZM540.0 489.3L542.5 488.7L542.5 491.3L540.0 492.0ZM542.0 488.7L544.5 488.0L544.5 490.6L542.0 491.3ZM544.0 488.0L546.5 487.5L546.5 490.2L544.0 490.6ZM546.0 487.5L548.5 487.1L548.5 489.7L546.0 490.2ZM548.0 487.1L550.5 486.6L550.5 489.3L548.0 489.7ZM550.0 486.6L552.5 486.2L552.5 488.8L550.0 489.3ZM552.0 486.2L554.5 485.7L554.5 488.4L552.0 488.8ZM554.0 485.7L556.5 485.2L556.5 487.9L554.0 488.4ZM556.0 485.2L558.5 484.8L558.5 487.4L556.0 487.9ZM558.0 484.8L560.5 484.3L560.5 487.0L558.0 487.4ZM560.0 484.3L562.5 483.9L562.5 486.6L560.0 487.0ZM562.0 483.9L564.5 483.5L564.5 486.2L562.0 486.6ZM568.0 480.5L570.5 480.1L570.5 482.8L568.0 483.2ZM570.0 480.1L572.5 479.7L572.5 482.4L570.0 482.8ZM572.0 477.6L574.5 477.1L574.5 482.0L572.0 482.4ZM574.0 477.1L576.5 476.7L576.5 481.6L574.0 482.0ZM576.0 474.6L578.5 474.3L578.5 479.1L576.0 479.4ZM578.0 470.0L580.5 469.9L580.5 479.0L578.0 479.1ZM578.0 525.4L580.5 525.2L580.5 527.9L578.0 528.1ZM580.0 467.7L582.5 467.6L582.5 476.7L580.0 476.9ZM580.0 520.9L582.5 520.7L582.5 527.7L580.0 527.9ZM582.0 463.4L584.5 463.2L584.5 474.4L582.0 474.6ZM582.0 516.4L584.5 516.2L584.5 527.4L582.0 527.7ZM584.0 463.2L586.5 463.1L586.5 470.0L584.0 470.2ZM584.0 514.1L586.5 513.7L586.5 522.8L584.0 523.2ZM586.0 463.1L588.5 462.9L588.5 465.6L586.0 465.8ZM586.0 511.6L588.5 511.1L588.5 518.0L586.0 518.6ZM588.0 511.1L590.5 510.6L590.5 515.4L588.0 515.9ZM590.0 508.6L592.5 508.1L592.5 512.8L590.0 513.3ZM592.0 508.1L594.5 507.6L594.5 510.2L592.0 510.7ZM594.0 507.6L596.5 507.1L596.5 509.7L594.0 510.2ZM596.0 507.1L598.5 506.6L598.5 509.2L596.0 509.7ZM600.0 504.1L602.5 503.6L602.5 506.2L600.0 506.7ZM602.0 503.6L604.5 503.1L604.5 505.7L602.0 506.2ZM604.0 503.1L606.5 502.6L606.5 505.2L604.0 505.7ZM606.0 502.6L608.5 502.1L608.5 504.7L606.0 505.2ZM608.0 502.1L610.5 501.6L610.5 504.1L608.0 504.7ZM610.0 501.6L612.5 501.1L612.5 503.6L610.0 504.1ZM612.0 501.1L614.5 500.6L614.5 503.1L612.0 503.6ZM614.0 500.6L616.5 500.1L616.5 502.6L614.0 503.1ZM616.0 500.1L618.5 499.6L618.5 502.1L616.0 502.6ZM618.0 499.6L620.5 498.9L620.5 501.4L618.0 502.1ZM620.0 498.9L622.5 498.3L622.5 500.8L620.0 501.4ZM622.0 498.3L624.5 497.7L624.5 500.2L622.0 500.8ZM624.0 497.7L626.5 497.1L626.5 499.5L624.0 500.2ZM626.0 497.1L628.5 496.5L628.5 498.9L626.0 499.5ZM628.0 496.5L630.5 495.9L630.5 498.3L628.0 498.9ZM632.0 497.0L634.5 496.4L634.5 498.8L632.0 499.4ZM634.0 496.4L636.5 495.8L636.5 498.1L634.0 498.8ZM636.0 495.8L638.5 495.1L638.5 497.5L636.0 498.1ZM638.0 495.1L640.5 494.5L640.5 498.5L638.0 499.2ZM640.0 496.2L642.5 495.6L642.5 499.6L640.0 500.3ZM642.0 495.6L644.5 494.8L644.5 500.5L642.0 501.3ZM644.0 496.5L646.5 495.8L646.5 503.2L644.0 503.9ZM646.0 455.0L648.5 454.3L648.5 458.3L646.0 459.0ZM646.0 497.5L648.5 496.7L648.5 505.8L646.0 506.6ZM648.0 454.3L650.5 453.6L650.5 459.3L648.0 460.0ZM648.0 500.1L650.5 498.9L650.5 504.5L648.0 505.8ZM650.0 455.3L652.5 454.6L652.5 461.9L650.0 462.6ZM650.0 502.2L652.5 501.0L652.5 503.2L650.0 504.5ZM652.0 457.9L654.5 457.2L654.5 462.7L652.0 463.5ZM654.0 458.9L656.5 458.1L656.5 463.6L654.0 464.4ZM656.0 459.7L658.5 459.0L658.5 462.7L656.0 463.6ZM658.0 459.0L660.5 458.2L660.5 461.9L658.0 462.7ZM660.0 459.8L662.5 459.0L662.5 462.7L660.0 463.5ZM662.0 459.0L664.5 458.2L664.5 461.9L662.0 462.7ZM664.0 459.7L666.5 458.9L666.5 461.0L664.0 461.9ZM666.0 458.9L668.5 458.1L668.5 460.2L666.0 461.0ZM668.0 458.1L670.5 457.3L670.5 459.4L668.0 460.2ZM670.0 457.3L672.5 456.5L672.5 458.5L670.0 459.4ZM672.0 456.5L674.5 455.7L674.5 457.7L672.0 458.5ZM674.0 455.7L676.5 454.9L676.5 456.9L674.0 457.7ZM676.0 454.9L678.5 454.0L678.5 456.0L676.0 456.9ZM678.0 454.0L680.5 453.1L680.5 455.1L678.0 456.0ZM680.0 451.8L682.5 450.9L682.5 454.2L680.0 455.1ZM682.0 450.9L684.5 450.0L684.5 453.3L682.0 454.2ZM684.0 448.6L686.5 447.8L686.5 451.1L684.0 451.9ZM686.0 447.8L688.5 447.1L688.5 450.4L686.0 451.1ZM688.0 445.7L690.5 444.9L690.5 449.6L688.0 450.4ZM690.0 443.6L692.5 442.8L692.5 447.5L690.0 448.2ZM692.0 440.1L694.5 439.3L694.5 445.4L692.0 446.1ZM694.0 437.9L696.5 437.1L696.5 441.8L694.0 442.6ZM696.0 437.1L698.5 436.2L698.5 439.6L696.0 440.5ZM702.0 473.8L704.5 473.0L704.5 476.4L702.0 477.2ZM704.0 470.1L706.5 469.2L706.5 475.5L704.0 476.4ZM706.0 467.8L708.5 466.9L708.5 473.2L706.0 474.1ZM708.0 465.4L710.5 464.5L710.5 469.4L708.0 470.3ZM710.0 463.1L712.5 462.1L712.5 467.0L710.0 468.0ZM712.0 462.1L714.5 461.2L714.5 464.7L712.0 465.6ZM714.0 459.7L716.5 458.8L716.5 462.3L714.0 463.2ZM716.0 458.8L718.5 457.9L718.5 459.9L716.0 460.8ZM718.0 457.9L720.5 457.0L720.5 459.1L718.0 459.9ZM720.0 457.0L722.5 456.1L722.5 458.2L720.0 459.1ZM722.0 456.1L724.5 455.3L724.5 457.3L722.0 458.2ZM730.0 451.5L732.5 450.7L732.5 452.8L730.0 453.5ZM732.0 450.7L734.5 450.0L734.5 452.1L732.0 452.8ZM734.0 450.0L736.5 449.3L736.5 451.4L734.0 452.1ZM742.0 448.7L744.5 448.0L744.5 450.0L742.0 450.7ZM744.0 448.0L746.5 447.2L746.5 449.3L744.0 450.0ZM746.0 447.2L748.5 446.4L748.5 448.5L746.0 449.3ZM748.0 446.4L750.5 445.5L750.5 447.7L748.0 448.5ZM750.0 445.5L752.5 444.7L752.5 448.4L750.0 449.2ZM752.0 446.3L754.5 445.4L754.5 449.2L752.0 449.9ZM754.0 445.4L756.5 444.6L756.5 450.0L754.0 450.7ZM756.0 446.2L758.5 445.4L758.5 450.8L756.0 451.6ZM758.0 447.0L760.5 446.3L760.5 453.3L758.0 454.0ZM760.0 447.9L762.5 447.2L762.5 454.3L760.0 455.0ZM762.0 450.4L764.5 449.8L764.5 453.6L762.0 454.3ZM780.0 397.0L782.5 396.2L782.5 400.2L780.0 401.0ZM782.0 396.2L784.5 395.3L784.5 402.7L782.0 403.5ZM784.0 397.0L786.5 396.1L786.5 403.6L784.0 404.4ZM786.0 399.6L788.5 398.7L788.5 404.5L786.0 405.3ZM788.0 400.4L790.5 399.6L790.5 405.4L788.0 406.2ZM790.0 401.3L792.5 400.7L792.5 404.8L790.0 405.4ZM792.0 402.5L794.5 401.9L794.5 405.9L792.0 406.5ZM794.0 403.6L796.5 403.0L796.5 405.3L794.0 405.9ZM796.0 403.0L798.5 402.4L798.5 404.7L796.0 405.3ZM800.0 403.6L802.5 403.0L802.5 405.3L800.0 405.9ZM802.0 403.0L804.5 402.5L804.5 404.8L802.0 405.3ZM804.0 402.5L806.5 401.9L806.5 404.3L804.0 404.8ZM806.0 401.9L808.5 401.4L808.5 403.8L806.0 404.3ZM808.0 401.4L810.5 400.9L810.5 403.4L808.0 403.8ZM810.0 400.9L812.5 400.4L812.5 402.9L810.0 403.4ZM840.0 393.6L842.5 393.1L842.5 395.8L840.0 396.2ZM842.0 393.1L844.5 392.7L844.5 395.4L842.0 395.8ZM844.0 392.7L846.5 392.2L846.5 394.9L844.0 395.4ZM846.0 392.2L848.5 391.8L848.5 394.5L846.0 394.9ZM848.0 391.8L850.5 391.4L850.5 394.1L848.0 394.5ZM848.0 435.6L850.5 435.4L850.5 438.1L848.0 438.3ZM850.0 391.4L852.5 390.9L852.5 393.6L850.0 394.1ZM850.0 429.1L852.5 428.8L852.5 437.8L850.0 438.1ZM852.0 426.7L854.5 426.4L854.5 437.6L852.0 437.8ZM854.0 388.4L856.5 387.9L856.5 390.6L854.0 391.1ZM854.0 424.3L856.5 424.0L856.5 430.9L854.0 431.2ZM856.0 387.9L858.5 387.4L858.5 390.2L856.0 390.6ZM856.0 421.9L858.5 421.5L858.5 426.3L856.0 426.7ZM858.0 385.3L860.5 384.8L860.5 389.7L858.0 390.2ZM858.0 419.3L860.5 418.9L860.5 423.8L858.0 424.2ZM860.0 382.7L862.5 382.2L862.5 387.1L860.0 387.6ZM860.0 418.9L862.5 418.5L862.5 421.3L860.0 421.7ZM862.0 380.1L864.5 379.6L864.5 386.6L862.0 387.1ZM862.0 418.5L864.5 418.2L864.5 420.9L862.0 421.3ZM864.0 377.5L866.5 377.0L866.5 384.0L864.0 384.5ZM866.0 372.7L868.5 372.2L868.5 381.4L866.0 381.9ZM866.0 415.6L868.5 415.2L868.5 418.0L866.0 418.4ZM868.0 370.0L870.5 369.5L870.5 378.7L868.0 379.2ZM868.0 415.2L870.5 414.8L870.5 417.6L868.0 418.0ZM870.0 369.5L872.5 369.0L872.5 373.9L870.0 374.4ZM870.0 414.8L872.5 414.4L872.5 417.2L870.0 417.6ZM872.0 414.4L874.5 414.0L874.5 416.8L872.0 417.2ZM874.0 414.0L876.5 413.6L876.5 416.4L874.0 416.8ZM896.0 408.0L898.5 407.3L898.5 410.2L896.0 410.9ZM898.0 407.3L900.5 406.6L900.5 409.4L898.0 410.2ZM900.0 406.6L902.5 405.9L902.5 408.7L900.0 409.4ZM902.0 405.9L904.5 405.2L904.5 408.0L902.0 408.7ZM904.0 405.2L906.5 404.5L906.5 407.3L904.0 408.0ZM908.0 406.0L910.5 405.3L910.5 408.1L908.0 408.8ZM910.0 405.3L912.5 404.4L912.5 407.3L910.0 408.1ZM912.0 404.4L914.5 403.9L914.5 408.8L912.0 409.5ZM914.0 406.0L916.5 405.4L916.5 410.2L914.0 410.9ZM916.0 407.5L918.5 406.8L918.5 413.5L916.0 414.3ZM918.0 408.8L920.5 408.1L920.5 418.4L918.0 419.5ZM920.0 410.0L922.5 409.2L922.5 417.3L920.0 418.4ZM922.0 414.9L924.5 413.8L924.5 416.3L922.0 417.3Z"/>
<path fill="#c8ff00" d="M516.0 482.5L518.5 481.7L518.5 485.9L516.0 486.6ZM518.0 481.7L520.5 480.9L520.5 487.1L518.0 487.8ZM520.0 482.8L522.5 482.1L522.5 490.3L520.0 490.8ZM522.0 484.0L524.5 483.2L524.5 491.5L522.0 492.2ZM524.0 487.0L526.5 486.3L526.5 490.8L524.0 491.5ZM526.0 486.3L528.5 485.6L528.5 492.0L526.0 492.7ZM528.0 487.5L530.5 486.8L530.5 491.3L528.0 492.0ZM530.0 488.8L532.5 488.1L532.5 492.6L530.0 493.3ZM532.0 488.1L534.5 487.4L534.5 492.0L532.0 492.6ZM534.0 489.4L536.5 488.7L536.5 491.3L534.0 492.0ZM536.0 488.7L538.5 488.0L538.5 490.6L536.0 491.3ZM538.0 488.0L540.5 487.3L540.5 489.9L538.0 490.6ZM540.0 487.3L542.5 486.7L542.5 489.3L540.0 489.9ZM542.0 486.7L544.5 486.0L544.5 488.6L542.0 489.3ZM544.0 486.0L546.5 485.5L546.5 488.1L544.0 488.6ZM552.0 484.1L554.5 483.7L554.5 486.3L552.0 486.8ZM554.0 483.7L556.5 483.2L556.5 485.8L554.0 486.3ZM556.0 483.2L558.5 482.7L558.5 485.4L556.0 485.8ZM558.0 482.7L560.5 482.3L560.5 484.9L558.0 485.4ZM560.0 482.3L562.5 481.8L562.5 484.5L560.0 484.9ZM562.0 481.8L564.5 481.4L564.5 484.1L562.0 484.5ZM564.0 479.3L566.5 478.9L566.5 483.7L564.0 484.1ZM566.0 478.9L568.5 478.5L568.5 483.2L566.0 483.7ZM568.0 476.4L570.5 475.9L570.5 480.7L568.0 481.1ZM570.0 473.8L572.5 473.4L572.5 480.3L570.0 480.7ZM572.0 473.4L574.5 472.9L574.5 477.7L572.0 478.2ZM574.0 468.7L576.5 468.2L576.5 477.3L574.0 477.7ZM576.0 466.1L578.5 465.8L578.5 474.9L576.0 475.2ZM578.0 463.6L580.5 463.5L580.5 470.5L578.0 470.6ZM580.0 463.5L582.5 463.4L582.5 468.2L580.0 468.3ZM584.0 522.6L586.5 522.2L586.5 527.0L584.0 527.4ZM586.0 518.0L588.5 517.4L588.5 526.4L586.0 527.0ZM588.0 515.3L590.5 514.8L590.5 523.7L588.0 524.3ZM590.0 512.7L592.5 512.2L592.5 519.0L590.0 519.5ZM592.0 510.1L594.5 509.6L594.5 516.4L592.0 516.9ZM594.0 509.6L596.5 509.1L596.5 513.8L594.0 514.3ZM596.0 509.1L598.5 508.6L598.5 511.3L596.0 511.8ZM598.0 506.6L600.5 506.1L600.5 510.7L598.0 511.3ZM600.0 506.1L602.5 505.6L602.5 508.2L600.0 508.7ZM602.0 505.6L604.5 505.1L604.5 507.7L602.0 508.2ZM604.0 505.1L606.5 504.6L606.5 507.1L604.0 507.7ZM606.0 504.6L608.5 504.1L608.5 506.6L606.0 507.1ZM608.0 504.1L610.5 503.5L610.5 506.1L608.0 506.6ZM610.0 503.5L612.5 503.0L612.5 505.6L610.0 506.1ZM618.0 501.5L620.5 500.8L620.5 503.3L618.0 504.0ZM620.0 500.8L622.5 500.2L622.5 502.7L620.0 503.3ZM622.0 500.2L624.5 499.6L624.5 502.0L622.0 502.7ZM624.0 499.6L626.5 498.9L626.5 501.4L624.0 502.0ZM626.0 498.9L628.5 498.3L628.5 500.7L626.0 501.4ZM628.0 498.3L630.5 497.7L630.5 500.1L628.0 500.7ZM630.0 497.7L632.5 497.0L632.5 501.2L630.0 501.9ZM632.0 498.8L634.5 498.2L634.5 500.5L632.0 501.2ZM634.0 498.2L636.5 497.5L636.5 501.6L634.0 502.3ZM636.0 497.5L638.5 496.9L638.5 502.7L636.0 503.4ZM638.0 498.6L640.5 497.9L640.5 503.7L638.0 504.4ZM640.0 499.7L642.5 499.0L642.5 506.4L640.0 507.1ZM642.0 500.7L644.5 499.9L644.5 507.3L642.0 508.1ZM644.0 503.3L646.5 502.6L646.5 506.6L644.0 507.3ZM650.0 453.6L652.5 453.0L652.5 455.2L650.0 455.9ZM652.0 453.0L654.5 452.3L654.5 457.8L652.0 458.6ZM654.0 452.3L656.5 451.7L656.5 458.7L654.0 459.5ZM656.0 454.9L658.5 454.2L658.5 459.6L656.0 460.3ZM658.0 455.8L660.5 455.0L660.5 458.8L658.0 459.6ZM660.0 456.6L662.5 455.9L662.5 459.6L660.0 460.4ZM662.0 455.9L664.5 455.1L664.5 458.8L662.0 459.6ZM664.0 456.7L666.5 455.9L666.5 459.5L664.0 460.3ZM666.0 455.9L668.5 455.1L668.5 458.7L666.0 459.5ZM668.0 455.1L670.5 454.4L670.5 457.9L668.0 458.7ZM670.0 454.4L672.5 453.6L672.5 457.1L670.0 457.9ZM672.0 453.6L674.5 452.8L674.5 456.3L672.0 457.1ZM674.0 452.8L676.5 452.1L676.5 455.5L674.0 456.3ZM676.0 452.1L678.5 451.3L678.5 454.6L676.0 455.5ZM678.0 451.3L680.5 450.4L680.5 453.7L678.0 454.6ZM680.0 449.0L682.5 448.1L682.5 451.5L680.0 452.4ZM682.0 448.1L684.5 447.3L684.5 450.6L682.0 451.5ZM684.0 445.9L686.5 445.1L686.5 448.4L684.0 449.2ZM686.0 443.8L688.5 443.0L688.5 447.7L686.0 448.4ZM688.0 440.3L690.5 439.5L690.5 445.5L688.0 446.3ZM690.0 439.5L692.5 438.7L692.5 443.4L690.0 444.2ZM692.0 438.7L694.5 437.9L694.5 439.9L692.0 440.7ZM706.0 473.5L708.5 472.6L708.5 474.6L706.0 475.5ZM708.0 469.7L710.5 468.8L710.5 473.7L708.0 474.6ZM710.0 467.4L712.5 466.4L712.5 472.8L710.0 473.7ZM712.0 465.0L714.5 464.1L714.5 469.0L712.0 469.9ZM714.0 462.6L716.5 461.7L716.5 466.6L714.0 467.5ZM716.0 460.2L718.5 459.3L718.5 464.3L716.0 465.2ZM718.0 459.3L720.5 458.5L720.5 461.9L718.0 462.8ZM720.0 458.5L722.5 457.6L722.5 461.0L720.0 461.9ZM722.0 457.6L724.5 456.7L724.5 458.7L722.0 459.6ZM724.0 455.3L726.5 454.4L726.5 457.8L724.0 458.7ZM726.0 454.4L728.5 453.6L728.5 457.0L726.0 457.8ZM728.0 453.6L730.5 452.9L730.5 454.9L728.0 455.6ZM730.0 452.9L732.5 452.2L732.5 454.2L730.0 454.9ZM732.0 452.2L734.5 451.5L734.5 453.5L732.0 454.2ZM734.0 451.5L736.5 450.8L736.5 452.8L734.0 453.5ZM736.0 450.8L738.5 450.1L738.5 452.1L736.0 452.8ZM738.0 450.1L740.5 449.4L740.5 452.9L738.0 453.6ZM740.0 449.4L742.5 448.7L742.5 452.2L740.0 452.9ZM742.0 450.1L744.5 449.4L744.5 451.5L742.0 452.2ZM744.0 449.4L746.5 448.7L746.5 452.2L744.0 453.0ZM746.0 448.7L748.5 447.9L748.5 451.5L746.0 452.2ZM748.0 447.9L750.5 447.1L750.5 452.2L748.0 453.0ZM750.0 448.6L752.5 447.8L752.5 453.0L750.0 453.7ZM752.0 449.3L754.5 448.6L754.5 453.8L752.0 454.6ZM754.0 450.1L756.5 449.4L756.5 456.3L754.0 457.0ZM756.0 451.0L758.5 450.2L758.5 455.6L756.0 456.3ZM758.0 453.4L760.5 452.7L760.5 455.0L758.0 455.6ZM784.0 395.3L786.5 394.4L786.5 396.7L784.0 397.6ZM786.0 394.4L788.5 393.6L788.5 399.3L786.0 400.2ZM788.0 393.6L790.5 392.7L790.5 400.2L788.0 401.0ZM790.0 396.2L792.5 395.5L792.5 401.3L790.0 401.9ZM792.0 397.3L794.5 396.6L794.5 402.5L792.0 403.1ZM794.0 398.4L796.5 397.8L796.5 403.6L794.0 404.2ZM796.0 399.5L798.5 398.9L798.5 403.0L796.0 403.6ZM798.0 400.6L800.5 400.0L800.5 404.2L798.0 404.7ZM800.0 400.0L802.5 399.4L802.5 403.6L800.0 404.2ZM802.0 401.2L804.5 400.7L804.5 403.1L802.0 403.6ZM804.0 400.7L806.5 400.2L806.5 402.5L804.0 403.1ZM806.0 400.2L808.5 399.6L808.5 402.0L806.0 402.5ZM812.0 400.4L814.5 399.9L814.5 402.4L812.0 402.9ZM814.0 399.9L816.5 399.4L816.5 401.9L814.0 402.4ZM816.0 399.4L818.5 398.9L818.5 401.4L816.0 401.9ZM818.0 398.9L820.5 398.4L820.5 400.9L818.0 401.4ZM820.0 398.4L822.5 397.9L822.5 400.4L820.0 400.9ZM822.0 397.9L824.5 397.4L824.5 399.9L822.0 400.4ZM824.0 397.4L826.5 396.9L826.5 399.4L824.0 399.9ZM826.0 396.9L828.5 396.4L828.5 398.9L826.0 399.4ZM828.0 396.4L830.5 395.8L830.5 398.4L828.0 398.9ZM830.0 395.8L832.5 395.3L832.5 397.9L830.0 398.4ZM832.0 395.3L834.5 394.8L834.5 397.4L832.0 397.9ZM834.0 394.8L836.5 394.4L836.5 397.0L834.0 397.4ZM836.0 394.4L838.5 394.0L838.5 396.6L836.0 397.0ZM838.0 394.0L840.5 393.6L840.5 396.2L838.0 396.6ZM844.0 390.6L846.5 390.2L846.5 392.8L844.0 393.3ZM846.0 390.2L848.5 389.7L848.5 392.4L846.0 392.8ZM848.0 389.7L850.5 389.3L850.5 392.0L848.0 392.4ZM850.0 387.2L852.5 386.7L852.5 391.5L850.0 392.0ZM852.0 386.7L854.5 386.3L854.5 391.1L852.0 391.5ZM854.0 384.1L856.5 383.7L856.5 388.5L854.0 389.0ZM854.0 430.6L856.5 430.3L856.5 437.3L854.0 437.6ZM856.0 381.6L858.5 381.1L858.5 388.0L856.0 388.5ZM856.0 426.1L858.5 425.7L858.5 436.9L856.0 437.3ZM858.0 378.9L860.5 378.4L860.5 385.4L858.0 385.9ZM858.0 423.6L860.5 423.2L860.5 432.3L858.0 432.7ZM860.0 376.3L862.5 375.8L862.5 382.8L860.0 383.3ZM860.0 421.1L862.5 420.7L862.5 427.7L860.0 428.1ZM862.0 371.5L864.5 371.0L864.5 380.2L862.0 380.7ZM862.0 420.7L864.5 420.3L864.5 425.2L862.0 425.6ZM864.0 371.0L866.5 370.5L866.5 377.6L864.0 378.1ZM864.0 418.2L866.5 417.8L866.5 422.7L864.0 423.0ZM866.0 370.5L868.5 370.0L868.5 372.8L866.0 373.3ZM866.0 417.8L868.5 417.4L868.5 420.1L866.0 420.5ZM868.0 417.4L870.5 417.0L870.5 419.7L868.0 420.1ZM870.0 417.0L872.5 416.6L872.5 419.3L870.0 419.7ZM876.0 413.6L878.5 413.1L878.5 415.9L876.0 416.4ZM878.0 413.1L880.5 412.6L880.5 415.4L878.0 415.9ZM880.0 412.6L882.5 412.1L882.5 414.9L880.0 415.4ZM882.0 412.1L884.5 411.6L884.5 414.4L882.0 414.9ZM884.0 411.6L886.5 411.1L886.5 413.9L884.0 414.4ZM886.0 411.1L888.5 410.5L888.5 413.4L886.0 413.9ZM888.0 410.5L890.5 410.1L890.5 413.0L888.0 413.4ZM890.0 410.1L892.5 409.4L892.5 412.3L890.0 413.0ZM892.0 409.4L894.5 408.7L894.5 411.6L892.0 412.3ZM894.0 408.7L896.5 408.0L896.5 410.9L894.0 411.6ZM900.0 408.8L902.5 408.1L902.5 411.0L900.0 411.7ZM902.0 408.1L904.5 407.4L904.5 410.3L902.0 411.0ZM904.0 407.4L906.5 406.7L906.5 409.5L904.0 410.3ZM906.0 406.7L908.5 406.0L908.5 411.0L906.0 411.8ZM908.0 408.2L910.5 407.5L910.5 412.5L908.0 413.3ZM910.0 407.5L912.5 406.7L912.5 413.9L910.0 414.8ZM912.0 408.9L914.5 408.2L914.5 417.4L912.0 418.3ZM914.0 410.3L916.5 409.6L916.5 420.6L914.0 421.7ZM916.0 413.7L918.5 412.9L918.5 419.5L916.0 420.6Z"/>
<path fill="#ffee00" d="M520.0 480.9L522.5 480.2L522.5 482.7L520.0 483.4ZM522.0 480.2L524.5 479.4L524.5 483.8L522.0 484.6ZM524.0 479.4L526.5 478.6L526.5 486.9L524.0 487.6ZM526.0 480.5L528.5 479.8L528.5 486.2L526.0 486.9ZM528.0 481.7L530.5 481.0L530.5 487.4L528.0 488.1ZM530.0 482.9L532.5 482.2L532.5 488.7L530.0 489.4ZM532.0 484.2L534.5 483.5L534.5 488.0L532.0 488.7ZM534.0 485.4L536.5 484.7L536.5 489.3L534.0 490.0ZM536.0 484.7L538.5 484.0L538.5 488.6L536.0 489.3ZM538.0 484.0L540.5 483.3L540.5 487.9L538.0 488.6ZM540.0 485.3L542.5 484.6L542.5 487.3L540.0 487.9ZM542.0 484.6L544.5 483.9L544.5 486.6L542.0 487.3ZM544.0 483.9L546.5 483.5L546.5 486.1L544.0 486.6ZM546.0 483.5L548.5 483.0L548.5 487.7L546.0 488.1ZM548.0 483.0L550.5 482.5L550.5 487.2L548.0 487.7ZM550.0 482.5L552.5 482.1L552.5 486.8L550.0 487.2ZM552.0 482.1L554.5 481.6L554.5 484.3L552.0 484.7ZM554.0 481.6L556.5 481.1L556.5 483.8L554.0 484.3ZM556.0 481.1L558.5 480.7L558.5 483.3L556.0 483.8ZM558.0 478.6L560.5 478.1L560.5 482.9L558.0 483.3ZM560.0 478.1L562.5 477.7L562.5 482.4L560.0 482.9ZM562.0 477.7L564.5 477.2L564.5 482.0L562.0 482.4ZM564.0 475.2L566.5 474.7L566.5 479.5L564.0 479.9ZM566.0 472.6L568.5 472.2L568.5 479.1L566.0 479.5ZM568.0 470.1L570.5 469.6L570.5 476.5L568.0 477.0ZM570.0 467.5L572.5 467.0L572.5 474.0L570.0 474.4ZM572.0 464.9L574.5 464.4L574.5 473.5L572.0 474.0ZM574.0 464.4L576.5 463.9L576.5 468.8L574.0 469.3ZM576.0 463.9L578.5 463.6L578.5 466.4L576.0 466.7ZM588.0 523.7L590.5 523.1L590.5 525.8L588.0 526.4ZM590.0 518.9L592.5 518.4L592.5 525.2L590.0 525.8ZM592.0 516.3L594.5 515.8L594.5 524.6L592.0 525.2ZM594.0 513.7L596.5 513.2L596.5 519.9L594.0 520.5ZM596.0 511.2L598.5 510.7L598.5 517.3L596.0 517.9ZM598.0 510.7L600.5 510.1L600.5 514.7L598.0 515.3ZM600.0 508.1L602.5 507.6L602.5 514.2L600.0 514.7ZM602.0 507.6L604.5 507.1L604.5 511.6L602.0 512.2ZM604.0 507.1L606.5 506.5L606.5 511.1L604.0 511.6ZM606.0 506.5L608.5 506.0L608.5 508.6L606.0 509.1ZM608.0 506.0L610.5 505.5L610.5 508.0L608.0 508.6ZM610.0 505.5L612.5 505.0L612.5 507.5L610.0 508.0ZM612.0 503.0L614.5 502.5L614.5 507.0L612.0 507.5ZM614.0 502.5L616.5 502.0L616.5 506.4L614.0 507.0ZM616.0 502.0L618.5 501.5L618.5 505.9L616.0 506.4ZM618.0 503.4L620.5 502.7L620.5 505.2L618.0 505.9ZM620.0 502.7L622.5 502.1L622.5 504.5L620.0 505.2ZM622.0 502.1L624.5 501.4L624.5 503.9L622.0 504.5ZM624.0 501.4L626.5 500.8L626.5 505.0L624.0 505.7ZM626.0 500.8L628.5 500.1L628.5 504.4L626.0 505.0ZM628.0 500.1L630.5 499.5L630.5 505.5L628.0 506.2ZM630.0 501.3L632.5 500.6L632.5 504.8L630.0 505.5ZM632.0 500.6L634.5 499.9L634.5 505.8L632.0 506.6ZM634.0 501.7L636.5 501.0L636.5 506.9L634.0 507.6ZM636.0 502.8L638.5 502.1L638.5 509.6L636.0 510.4ZM638.0 503.8L640.5 503.1L640.5 508.9L638.0 509.6ZM640.0 506.5L642.5 505.8L642.5 508.1L640.0 508.9ZM656.0 451.7L658.5 451.0L658.5 454.8L656.0 455.5ZM658.0 451.0L660.5 450.3L660.5 455.6L658.0 456.4ZM660.0 451.9L662.5 451.2L662.5 456.5L660.0 457.2ZM662.0 452.8L664.5 452.1L664.5 455.7L662.0 456.5ZM664.0 452.1L666.5 451.4L666.5 456.5L664.0 457.3ZM666.0 452.9L668.5 452.1L668.5 455.7L666.0 456.5ZM668.0 452.1L670.5 451.4L670.5 455.0L668.0 455.7ZM670.0 451.4L672.5 450.7L672.5 454.2L670.0 455.0ZM672.0 450.7L674.5 450.0L674.5 453.4L672.0 454.2ZM674.0 450.0L676.5 449.3L676.5 452.7L674.0 453.4ZM676.0 449.3L678.5 448.5L678.5 451.9L676.0 452.7ZM678.0 447.1L680.5 446.3L680.5 451.0L678.0 451.9ZM680.0 446.3L682.5 445.4L682.5 448.8L680.0 449.6ZM682.0 444.1L684.5 443.2L684.5 447.9L682.0 448.8ZM684.0 441.9L686.5 441.1L686.5 445.7L684.0 446.5ZM686.0 441.1L688.5 440.3L688.5 443.6L686.0 444.4ZM712.0 469.3L714.5 468.4L714.5 471.9L712.0 472.8ZM714.0 466.9L716.5 466.0L716.5 470.9L714.0 471.9ZM716.0 464.6L718.5 463.7L718.5 468.6L716.0 469.5ZM718.0 462.2L720.5 461.3L720.5 466.2L718.0 467.1ZM720.0 461.3L722.5 460.4L722.5 463.9L720.0 464.8ZM722.0 459.0L724.5 458.1L724.5 461.6L722.0 462.5ZM724.0 458.1L726.5 457.2L726.5 460.7L724.0 461.6ZM726.0 457.2L728.5 456.4L728.5 459.9L726.0 460.7ZM728.0 455.0L730.5 454.3L730.5 457.8L728.0 458.5ZM730.0 454.3L732.5 453.6L732.5 457.1L730.0 457.8ZM732.0 453.6L734.5 452.9L734.5 456.4L732.0 457.1ZM734.0 452.9L736.5 452.2L736.5 455.7L734.0 456.4ZM736.0 452.2L738.5 451.5L738.5 455.0L736.0 455.7ZM738.0 453.0L740.5 452.3L740.5 455.8L738.0 456.5ZM740.0 452.3L742.5 451.6L742.5 455.1L740.0 455.8ZM742.0 451.6L744.5 450.9L744.5 454.4L742.0 455.1ZM744.0 452.4L746.5 451.6L746.5 455.2L744.0 455.9ZM746.0 451.6L748.5 450.9L748.5 456.0L746.0 456.7ZM748.0 452.4L750.5 451.6L750.5 456.8L748.0 457.5ZM750.0 453.1L752.5 452.4L752.5 457.6L750.0 458.3ZM752.0 454.0L754.5 453.2L754.5 457.0L752.0 457.6ZM790.0 392.7L792.5 392.1L792.5 396.1L790.0 396.8ZM792.0 392.1L794.5 391.4L794.5 397.2L792.0 397.9ZM794.0 393.2L796.5 392.5L796.5 398.4L794.0 399.0ZM796.0 394.3L798.5 393.7L798.5 399.5L796.0 400.1ZM798.0 395.4L800.5 394.8L800.5 400.6L798.0 401.2ZM800.0 396.5L802.5 395.9L802.5 400.0L800.0 400.6ZM802.0 397.7L804.5 397.1L804.5 401.3L802.0 401.8ZM804.0 397.1L806.5 396.6L806.5 400.8L804.0 401.3ZM806.0 398.4L808.5 397.8L808.5 400.2L806.0 400.8ZM808.0 397.8L810.5 397.3L810.5 401.5L808.0 402.0ZM810.0 399.1L812.5 398.6L812.5 401.0L810.0 401.5ZM812.0 398.6L814.5 398.1L814.5 400.5L812.0 401.0ZM814.0 398.1L816.5 397.5L816.5 400.0L814.0 400.5ZM816.0 397.5L818.5 397.0L818.5 399.5L816.0 400.0ZM818.0 397.0L820.5 396.5L820.5 399.0L818.0 399.5ZM820.0 396.5L822.5 396.0L822.5 398.5L820.0 399.0ZM822.0 396.0L824.5 395.4L824.5 398.0L822.0 398.5ZM828.0 394.4L830.5 393.9L830.5 396.4L828.0 397.0ZM830.0 393.9L832.5 393.3L832.5 395.9L830.0 396.4ZM832.0 393.3L834.5 392.8L834.5 395.4L832.0 395.9ZM834.0 392.8L836.5 392.4L836.5 395.0L834.0 395.4ZM836.0 392.4L838.5 392.0L838.5 394.6L836.0 395.0ZM838.0 392.0L840.5 391.5L840.5 394.2L838.0 394.6ZM840.0 391.5L842.5 391.1L842.5 393.7L840.0 394.2ZM842.0 389.0L844.5 388.6L844.5 393.3L842.0 393.7ZM844.0 388.6L846.5 388.1L846.5 390.8L844.0 391.2ZM846.0 386.0L848.5 385.5L848.5 390.3L846.0 390.8ZM848.0 385.5L850.5 385.1L850.5 389.9L848.0 390.3ZM850.0 383.0L852.5 382.5L852.5 387.3L850.0 387.8ZM852.0 380.4L854.5 379.9L854.5 386.9L852.0 387.3ZM854.0 377.8L856.5 377.3L856.5 384.3L854.0 384.7ZM856.0 375.2L858.5 374.7L858.5 381.7L856.0 382.2ZM858.0 372.6L860.5 372.0L860.5 379.0L858.0 379.5ZM858.0 432.1L860.5 431.7L860.5 436.6L858.0 436.9ZM860.0 372.0L862.5 371.5L862.5 376.4L860.0 376.9ZM860.0 427.5L862.5 427.1L862.5 436.2L860.0 436.6ZM862.0 425.0L864.5 424.6L864.5 431.6L862.0 432.0ZM864.0 422.4L866.5 422.1L866.5 429.1L864.0 429.5ZM866.0 419.9L868.5 419.5L868.5 426.6L866.0 426.9ZM868.0 419.5L870.5 419.1L870.5 424.0L868.0 424.4ZM870.0 419.1L872.5 418.7L872.5 421.5L870.0 421.9ZM872.0 416.6L874.5 416.2L874.5 421.1L872.0 421.5ZM874.0 416.2L876.5 415.8L876.5 418.6L874.0 418.9ZM876.0 415.8L878.5 415.3L878.5 418.1L876.0 418.6ZM878.0 415.3L880.5 414.8L880.5 417.6L878.0 418.1ZM880.0 414.8L882.5 414.3L882.5 417.2L880.0 417.6ZM882.0 414.3L884.5 413.8L884.5 416.7L882.0 417.2ZM884.0 413.8L886.5 413.3L886.5 416.2L884.0 416.7ZM886.0 413.3L888.5 412.8L888.5 415.7L886.0 416.2ZM888.0 412.8L890.5 412.4L890.5 415.3L888.0 415.7ZM890.0 412.4L892.5 411.7L892.5 414.6L890.0 415.3ZM892.0 411.7L894.5 411.0L894.5 413.9L892.0 414.6ZM894.0 411.0L896.5 410.3L896.5 413.1L894.0 413.9ZM896.0 410.3L898.5 409.6L898.5 412.4L896.0 413.1ZM898.0 409.6L900.5 408.8L900.5 414.0L898.0 414.7ZM900.0 411.1L902.5 410.4L902.5 413.2L900.0 414.0ZM902.0 410.4L904.5 409.7L904.5 414.7L902.0 415.5ZM904.0 409.7L906.5 408.9L906.5 416.3L904.0 417.0ZM906.0 411.2L908.5 410.4L908.5 417.7L906.0 418.5ZM908.0 412.7L910.5 411.9L910.5 419.2L908.0 420.0ZM910.0 414.2L912.5 413.3L912.5 422.8L910.0 423.7ZM912.0 417.7L914.5 416.8L914.5 421.7L912.0 422.8Z"/>
<path fill="#ffdc00" d="M526.0 478.6L528.5 477.9L528.5 480.4L526.0 481.1ZM528.0 477.9L530.5 477.1L530.5 481.6L528.0 482.3ZM530.0 477.1L532.5 476.3L532.5 482.8L530.0 483.5ZM532.0 478.3L534.5 477.5L534.5 484.1L532.0 484.8ZM534.0 479.5L536.5 478.8L536.5 485.3L534.0 486.0ZM536.0 480.7L538.5 480.0L538.5 484.6L536.0 485.3ZM538.0 480.0L540.5 479.3L540.5 483.9L538.0 484.6ZM540.0 481.3L542.5 480.6L542.5 485.2L540.0 485.9ZM542.0 480.6L544.5 479.9L544.5 484.5L542.0 485.2ZM544.0 479.9L546.5 479.4L546.5 484.1L544.0 484.5ZM546.0 479.4L548.5 478.9L548.5 483.6L546.0 484.1ZM548.0 478.9L550.5 478.4L550.5 483.1L548.0 483.6ZM550.0 478.4L552.5 478.0L552.5 482.7L550.0 483.1ZM552.0 478.0L554.5 477.5L554.5 482.2L552.0 482.7ZM554.0 477.5L556.5 477.0L556.5 481.7L554.0 482.2ZM556.0 477.0L558.5 476.5L558.5 481.3L556.0 481.7ZM558.0 474.5L560.5 474.0L560.5 478.7L558.0 479.2ZM560.0 474.0L562.5 473.5L562.5 478.3L560.0 478.7ZM562.0 471.5L564.5 471.0L564.5 477.8L562.0 478.3ZM564.0 468.9L566.5 468.5L566.5 475.3L564.0 475.8ZM566.0 466.4L568.5 465.9L568.5 472.8L566.0 473.2ZM568.0 465.9L570.5 465.4L570.5 470.2L568.0 470.7ZM570.0 465.4L572.5 464.9L572.5 467.6L570.0 468.1ZM594.0 519.9L596.5 519.3L596.5 524.0L594.0 524.6ZM596.0 517.3L598.5 516.7L598.5 523.4L596.0 524.0ZM598.0 514.7L600.5 514.1L600.5 520.8L598.0 521.3ZM600.0 514.1L602.5 513.6L602.5 518.2L600.0 518.7ZM602.0 511.6L604.5 511.0L604.5 515.6L602.0 516.2ZM604.0 511.0L606.5 510.5L606.5 515.0L604.0 515.6ZM606.0 508.5L608.5 508.0L608.5 512.5L606.0 513.1ZM608.0 508.0L610.5 507.4L610.5 511.9L608.0 512.5ZM610.0 507.4L612.5 506.9L612.5 511.4L610.0 511.9ZM612.0 506.9L614.5 506.4L614.5 510.8L612.0 511.4ZM614.0 506.4L616.5 505.8L616.5 510.2L614.0 510.8ZM616.0 505.8L618.5 505.3L618.5 509.7L616.0 510.2ZM618.0 505.3L620.5 504.6L620.5 509.0L618.0 509.7ZM620.0 504.6L622.5 503.9L622.5 508.3L620.0 509.0ZM622.0 503.9L624.5 503.3L624.5 507.6L622.0 508.3ZM624.0 505.1L626.5 504.4L626.5 508.7L624.0 509.4ZM626.0 504.4L628.5 503.8L628.5 508.0L626.0 508.7ZM628.0 505.6L630.5 504.9L630.5 509.1L628.0 509.8ZM630.0 504.9L632.5 504.2L632.5 510.1L630.0 510.9ZM632.0 506.0L634.5 505.2L634.5 511.2L632.0 511.9ZM634.0 507.0L636.5 506.3L636.5 510.4L634.0 511.2ZM660.0 450.3L662.5 449.7L662.5 451.8L660.0 452.5ZM662.0 449.7L664.5 449.0L664.5 452.7L662.0 453.4ZM664.0 449.0L666.5 448.3L666.5 452.0L664.0 452.7ZM666.0 449.9L668.5 449.2L668.5 452.7L666.0 453.5ZM668.0 449.2L670.5 448.5L670.5 452.0L668.0 452.7ZM670.0 448.5L672.5 447.8L672.5 451.3L670.0 452.0ZM672.0 447.8L674.5 447.1L674.5 450.6L672.0 451.3ZM674.0 447.1L676.5 446.4L676.5 449.9L674.0 450.6ZM676.0 446.4L678.5 445.7L678.5 449.1L676.0 449.9ZM678.0 444.3L680.5 443.5L680.5 446.9L678.0 447.7ZM680.0 443.5L682.5 442.7L682.5 446.0L680.0 446.9ZM682.0 442.7L684.5 441.9L684.5 443.8L682.0 444.7ZM716.0 468.9L718.5 468.0L718.5 470.0L716.0 470.9ZM718.0 466.5L720.5 465.6L720.5 469.1L718.0 470.0ZM720.0 464.2L722.5 463.3L722.5 468.2L720.0 469.1ZM722.0 461.9L724.5 461.0L724.5 465.8L722.0 466.8ZM724.0 461.0L726.5 460.1L726.5 463.5L724.0 464.4ZM726.0 460.1L728.5 459.3L728.5 462.7L726.0 463.5ZM728.0 457.9L730.5 457.2L730.5 460.6L728.0 461.3ZM730.0 457.2L732.5 456.5L732.5 459.9L730.0 460.6ZM732.0 456.5L734.5 455.8L734.5 459.3L732.0 459.9ZM734.0 455.8L736.5 455.1L736.5 458.6L734.0 459.3ZM736.0 455.1L738.5 454.4L738.5 457.9L736.0 458.6ZM738.0 455.9L740.5 455.2L740.5 458.7L738.0 459.4ZM740.0 455.2L742.5 454.5L742.5 458.0L740.0 458.7ZM742.0 454.5L744.5 453.8L744.5 458.8L742.0 459.5ZM744.0 455.3L746.5 454.6L746.5 459.6L744.0 460.3ZM746.0 456.1L748.5 455.4L748.5 459.0L746.0 459.6ZM748.0 456.9L750.5 456.2L750.5 458.3L748.0 459.0ZM794.0 391.4L796.5 390.8L796.5 393.1L794.0 393.8ZM796.0 390.8L798.5 390.2L798.5 394.3L796.0 394.9ZM798.0 390.2L800.5 389.5L800.5 395.4L798.0 396.0ZM800.0 391.3L802.5 390.6L802.5 396.5L800.0 397.1ZM802.0 392.4L804.5 391.8L804.5 397.7L802.0 398.3ZM804.0 393.6L806.5 393.0L806.5 397.2L804.0 397.7ZM806.0 394.8L808.5 394.2L808.5 398.4L806.0 399.0ZM808.0 394.2L810.5 393.6L810.5 397.9L808.0 398.4ZM810.0 395.5L812.5 394.9L812.5 399.2L810.0 399.7ZM812.0 394.9L814.5 394.3L814.5 398.7L812.0 399.2ZM814.0 396.2L816.5 395.7L816.5 398.1L814.0 398.7ZM816.0 395.7L818.5 395.1L818.5 397.6L816.0 398.1ZM818.0 395.1L820.5 394.6L820.5 397.1L818.0 397.6ZM820.0 394.6L822.5 394.0L822.5 396.6L820.0 397.1ZM822.0 394.0L824.5 393.5L824.5 396.0L822.0 396.6ZM824.0 393.5L826.5 393.0L826.5 397.5L824.0 398.0ZM826.0 393.0L828.5 392.4L828.5 397.0L826.0 397.5ZM828.0 392.4L830.5 391.9L830.5 394.5L828.0 395.0ZM830.0 391.9L832.5 391.3L832.5 393.9L830.0 394.5ZM832.0 391.3L834.5 390.8L834.5 393.4L832.0 393.9ZM834.0 390.8L836.5 390.4L836.5 393.0L834.0 393.4ZM836.0 390.4L838.5 389.9L838.5 392.6L836.0 393.0ZM838.0 387.9L840.5 387.4L840.5 392.1L838.0 392.6ZM840.0 387.4L842.5 387.0L842.5 391.7L840.0 392.1ZM842.0 384.9L844.5 384.4L844.5 389.2L842.0 389.6ZM844.0 384.4L846.5 383.9L846.5 388.7L844.0 389.2ZM846.0 381.9L848.5 381.4L848.5 386.1L846.0 386.6ZM848.0 379.3L850.5 378.8L850.5 385.7L848.0 386.1ZM850.0 376.7L852.5 376.2L852.5 383.1L850.0 383.6ZM852.0 374.1L854.5 373.6L854.5 380.5L852.0 381.0ZM854.0 373.6L856.5 373.1L856.5 377.9L854.0 378.4ZM856.0 373.1L858.5 372.6L858.5 375.3L856.0 375.8ZM862.0 431.4L864.5 431.0L864.5 435.9L862.0 436.2ZM864.0 428.9L866.5 428.5L866.5 435.5L864.0 435.9ZM866.0 426.3L868.5 426.0L868.5 433.0L866.0 433.4ZM868.0 423.8L870.5 423.4L870.5 430.5L868.0 430.9ZM870.0 421.3L872.5 420.9L872.5 428.0L870.0 428.4ZM872.0 420.9L874.5 420.5L874.5 425.4L872.0 425.8ZM874.0 418.3L876.5 418.0L876.5 422.9L874.0 423.3ZM876.0 418.0L878.5 417.5L878.5 422.5L876.0 422.9ZM878.0 417.5L880.5 417.0L880.5 422.0L878.0 422.5ZM880.0 417.0L882.5 416.6L882.5 419.4L880.0 419.8ZM882.0 416.6L884.5 416.1L884.5 418.9L882.0 419.4ZM884.0 416.1L886.5 415.6L886.5 418.4L884.0 418.9ZM886.0 415.6L888.5 415.1L888.5 418.0L886.0 418.4ZM888.0 415.1L890.5 414.7L890.5 417.6L888.0 418.0ZM890.0 414.7L892.5 414.0L892.5 416.9L890.0 417.6ZM892.0 414.0L894.5 413.3L894.5 418.4L892.0 419.1ZM894.0 413.3L896.5 412.5L896.5 417.7L894.0 418.4ZM896.0 412.5L898.5 411.8L898.5 416.9L896.0 417.7ZM898.0 414.1L900.5 413.4L900.5 418.5L898.0 419.2ZM900.0 413.4L902.5 412.6L902.5 420.0L900.0 420.7ZM902.0 414.9L904.5 414.1L904.5 421.5L902.0 422.2ZM904.0 416.4L906.5 415.7L906.5 423.0L904.0 423.7ZM906.0 417.9L908.5 417.1L908.5 424.4L906.0 425.2ZM908.0 419.4L910.5 418.6L910.5 423.7L908.0 424.4Z"/>
<path fill="#ffc600" d="M532.0 476.3L534.5 475.5L534.5 478.1L532.0 478.9ZM534.0 475.5L536.5 474.8L536.5 479.4L534.0 480.1ZM536.0 474.8L538.5 474.0L538.5 480.6L536.0 481.3ZM538.0 476.0L540.5 475.3L540.5 479.9L538.0 480.6ZM540.0 477.3L542.5 476.5L542.5 481.2L540.0 481.9ZM542.0 476.5L544.5 475.8L544.5 480.5L542.0 481.2ZM544.0 475.8L546.5 475.3L546.5 480.0L544.0 480.5ZM546.0 477.3L548.5 476.9L548.5 479.5L546.0 480.0ZM548.0 476.9L550.5 476.4L550.5 479.0L548.0 479.5ZM550.0 476.4L552.5 475.9L552.5 478.6L550.0 479.0ZM552.0 473.9L554.5 473.4L554.5 478.1L552.0 478.6ZM554.0 473.4L556.5 472.9L556.5 477.6L554.0 478.1ZM556.0 472.9L558.5 472.4L558.5 477.1L556.0 477.6ZM558.0 470.4L560.5 469.9L560.5 474.6L558.0 475.1ZM560.0 467.8L562.5 467.3L562.5 474.1L560.0 474.6ZM562.0 467.3L564.5 466.9L564.5 471.6L562.0 472.1ZM564.0 466.9L566.5 466.4L566.5 469.1L564.0 469.5ZM598.0 520.7L600.5 520.2L600.5 522.8L598.0 523.4ZM600.0 518.1L602.5 517.6L602.5 522.1L600.0 522.8ZM602.0 515.6L604.5 515.0L604.5 521.5L602.0 522.1ZM604.0 515.0L606.5 514.4L606.5 519.0L604.0 519.6ZM606.0 512.5L608.5 511.9L608.5 516.4L606.0 517.0ZM608.0 511.9L610.5 511.3L610.5 515.8L608.0 516.4ZM610.0 511.3L612.5 510.8L612.5 515.2L610.0 515.8ZM612.0 510.8L614.5 510.2L614.5 512.7L612.0 513.3ZM614.0 510.2L616.5 509.6L616.5 512.2L614.0 512.7ZM616.0 509.6L618.5 509.1L618.5 511.6L616.0 512.2ZM618.0 509.1L620.5 508.4L620.5 512.8L618.0 513.5ZM620.0 508.4L622.5 507.7L622.5 512.0L620.0 512.8ZM622.0 507.7L624.5 507.0L624.5 511.3L622.0 512.0ZM624.0 508.8L626.5 508.1L626.5 512.4L624.0 513.1ZM626.0 508.1L628.5 507.4L628.5 513.5L626.0 514.2ZM628.0 509.2L630.5 508.5L630.5 512.7L628.0 513.5ZM630.0 510.3L632.5 509.5L632.5 511.9L630.0 512.7ZM666.0 448.3L668.5 447.7L668.5 449.8L666.0 450.5ZM668.0 447.7L670.5 447.0L670.5 449.1L668.0 449.8ZM670.0 447.0L672.5 446.4L672.5 448.4L670.0 449.1ZM672.0 446.4L674.5 445.7L674.5 447.7L672.0 448.4ZM674.0 445.7L676.5 445.0L676.5 447.0L674.0 447.7ZM676.0 445.0L678.5 444.3L678.5 446.3L676.0 447.0ZM722.0 466.2L724.5 465.2L724.5 467.3L722.0 468.2ZM724.0 463.8L726.5 462.9L726.5 466.4L724.0 467.3ZM726.0 462.9L728.5 462.1L728.5 465.6L726.0 466.4ZM728.0 460.7L730.5 460.0L730.5 463.5L728.0 464.1ZM730.0 460.0L732.5 459.3L732.5 462.8L730.0 463.5ZM732.0 459.3L734.5 458.7L734.5 462.1L732.0 462.8ZM734.0 458.7L736.5 458.0L736.5 461.5L734.0 462.1ZM736.0 458.0L738.5 457.3L738.5 460.8L736.0 461.5ZM738.0 458.8L740.5 458.1L740.5 461.6L738.0 462.3ZM740.0 458.1L742.5 457.4L742.5 460.9L740.0 461.6ZM742.0 458.9L744.5 458.2L744.5 460.3L742.0 460.9ZM800.0 389.5L802.5 388.9L802.5 391.2L800.0 391.9ZM802.0 388.9L804.5 388.2L804.5 392.4L802.0 393.0ZM804.0 388.2L806.5 387.6L806.5 393.6L804.0 394.2ZM806.0 389.4L808.5 388.8L808.5 394.8L806.0 395.4ZM808.0 390.6L810.5 390.0L810.5 394.2L808.0 394.8ZM810.0 391.8L812.5 391.2L812.5 395.5L810.0 396.1ZM812.0 391.2L814.5 390.6L814.5 394.9L812.0 395.5ZM814.0 392.5L816.5 391.9L816.5 396.3L814.0 396.8ZM816.0 391.9L818.5 391.3L818.5 395.7L816.0 396.3ZM818.0 391.3L820.5 390.8L820.5 395.2L818.0 395.7ZM820.0 392.7L822.5 392.1L822.5 394.6L820.0 395.2ZM822.0 392.1L824.5 391.6L824.5 394.1L822.0 394.6ZM824.0 391.6L826.5 391.0L826.5 393.6L824.0 394.1ZM826.0 391.0L828.5 390.4L828.5 393.0L826.0 393.6ZM828.0 390.4L830.5 389.9L830.5 392.5L828.0 393.0ZM830.0 389.9L832.5 389.3L832.5 391.9L830.0 392.5ZM832.0 387.3L834.5 386.8L834.5 391.4L832.0 391.9ZM834.0 386.8L836.5 386.3L836.5 391.0L834.0 391.4ZM836.0 386.3L838.5 385.8L838.5 390.5L836.0 391.0ZM838.0 383.8L840.5 383.3L840.5 388.0L838.0 388.5ZM840.0 383.3L842.5 382.8L842.5 387.6L840.0 388.0ZM842.0 380.8L844.5 380.3L844.5 385.0L842.0 385.5ZM844.0 378.2L846.5 377.7L846.5 384.5L844.0 385.0ZM846.0 375.6L848.5 375.1L848.5 382.0L846.0 382.5ZM848.0 375.1L850.5 374.6L850.5 379.4L848.0 379.9ZM850.0 374.6L852.5 374.1L852.5 376.8L850.0 377.3ZM866.0 432.8L868.5 432.4L868.5 435.2L866.0 435.5ZM868.0 430.3L870.5 429.9L870.5 434.8L868.0 435.2ZM870.0 427.8L872.5 427.4L872.5 434.5L870.0 434.8ZM872.0 425.2L874.5 424.8L874.5 429.8L872.0 430.1ZM874.0 422.7L876.5 422.3L876.5 429.4L874.0 429.8ZM876.0 422.3L878.5 421.9L878.5 426.9L876.0 427.2ZM878.0 421.9L880.5 421.4L880.5 424.2L878.0 424.7ZM880.0 419.2L882.5 418.8L882.5 423.8L880.0 424.2ZM882.0 418.8L884.5 418.3L884.5 423.4L882.0 423.8ZM884.0 418.3L886.5 417.8L886.5 423.0L884.0 423.4ZM886.0 417.8L888.5 417.4L888.5 422.5L886.0 423.0ZM888.0 417.4L890.5 417.0L890.5 422.2L888.0 422.5ZM890.0 417.0L892.5 416.3L892.5 421.4L890.0 422.2ZM892.0 418.5L894.5 417.8L894.5 420.7L892.0 421.4ZM894.0 417.8L896.5 417.1L896.5 422.2L894.0 423.0ZM896.0 417.1L898.5 416.3L898.5 423.7L896.0 424.5ZM898.0 418.6L900.5 417.9L900.5 423.0L898.0 423.7ZM900.0 420.1L902.5 419.4L902.5 426.7L900.0 427.5ZM902.0 421.6L904.5 420.9L904.5 426.0L902.0 426.7ZM904.0 423.1L906.5 422.4L906.5 425.2L904.0 426.0Z"/>
<path fill="#ffa800" d="M538.0 474.0L540.5 473.2L540.5 475.9L538.0 476.6ZM540.0 473.2L542.5 472.5L542.5 477.1L540.0 477.9ZM542.0 472.5L544.5 471.7L544.5 476.4L542.0 477.1ZM544.0 471.7L546.5 471.2L546.5 475.9L544.0 476.4ZM546.0 473.3L548.5 472.8L548.5 477.5L546.0 477.9ZM548.0 472.8L550.5 472.3L550.5 477.0L548.0 477.5ZM550.0 472.3L552.5 471.8L552.5 476.5L550.0 477.0ZM552.0 469.8L554.5 469.3L554.5 474.0L552.0 474.5ZM554.0 469.3L556.5 468.8L556.5 473.5L554.0 474.0ZM556.0 468.8L558.5 468.3L558.5 473.0L556.0 473.5ZM558.0 468.3L560.5 467.8L560.5 470.5L558.0 471.0ZM604.0 519.0L606.5 518.4L606.5 520.9L604.0 521.5ZM606.0 516.4L608.5 515.8L608.5 520.3L606.0 520.9ZM608.0 515.8L610.5 515.2L610.5 519.7L608.0 520.3ZM610.0 515.2L612.5 514.6L612.5 519.1L610.0 519.7ZM612.0 512.7L614.5 512.1L614.5 516.6L612.0 517.2ZM614.0 512.1L616.5 511.6L616.5 516.0L614.0 516.6ZM616.0 511.6L618.5 511.0L618.5 515.4L616.0 516.0ZM618.0 512.9L620.5 512.2L620.5 516.5L618.0 517.3ZM620.0 512.2L622.5 511.4L622.5 515.8L620.0 516.5ZM622.0 511.4L624.5 510.7L624.5 515.0L622.0 515.8ZM624.0 512.5L626.5 511.8L626.5 514.2L624.0 515.0ZM728.0 463.5L730.5 462.9L730.5 464.9L728.0 465.6ZM730.0 462.9L732.5 462.2L732.5 464.2L730.0 464.9ZM732.0 462.2L734.5 461.5L734.5 463.6L732.0 464.2ZM734.0 461.5L736.5 460.9L736.5 462.9L734.0 463.6ZM736.0 460.9L738.5 460.2L738.5 462.3L736.0 462.9ZM806.0 387.6L808.5 387.0L808.5 389.4L806.0 390.0ZM808.0 387.0L810.5 386.3L810.5 390.6L808.0 391.2ZM810.0 386.3L812.5 385.7L812.5 391.8L810.0 392.4ZM812.0 387.5L814.5 386.9L814.5 391.2L812.0 391.8ZM814.0 388.8L816.5 388.2L816.5 392.5L814.0 393.1ZM816.0 388.2L818.5 387.6L818.5 391.9L816.0 392.5ZM818.0 389.5L820.5 388.9L820.5 391.4L818.0 391.9ZM820.0 388.9L822.5 388.3L822.5 392.7L820.0 393.3ZM822.0 388.3L824.5 387.7L824.5 392.2L822.0 392.7ZM824.0 387.7L826.5 387.1L826.5 391.6L824.0 392.2ZM826.0 387.1L828.5 386.5L828.5 391.0L826.0 391.6ZM828.0 386.5L830.5 385.9L830.5 390.5L828.0 391.0ZM830.0 385.9L832.5 385.3L832.5 389.9L830.0 390.5ZM832.0 385.3L834.5 384.7L834.5 387.4L832.0 387.9ZM834.0 382.7L836.5 382.2L836.5 386.9L834.0 387.4ZM836.0 382.2L838.5 381.8L838.5 386.4L836.0 386.9ZM838.0 379.7L840.5 379.2L840.5 383.9L838.0 384.4ZM840.0 377.2L842.5 376.7L842.5 383.4L840.0 383.9ZM842.0 376.7L844.5 376.1L844.5 380.9L842.0 381.4ZM844.0 376.1L846.5 375.6L846.5 378.3L844.0 378.8ZM872.0 429.5L874.5 429.2L874.5 434.1L872.0 434.5ZM874.0 429.2L876.5 428.8L876.5 433.8L874.0 434.1ZM876.0 426.6L878.5 426.3L878.5 431.2L876.0 431.6ZM878.0 424.1L880.5 423.6L880.5 428.7L878.0 429.0ZM880.0 423.6L882.5 423.2L882.5 428.3L880.0 428.7ZM882.0 423.2L884.5 422.8L884.5 427.9L882.0 428.3ZM884.0 422.8L886.5 422.4L886.5 427.5L884.0 427.9ZM886.0 422.4L888.5 421.9L888.5 427.1L886.0 427.5ZM888.0 421.9L890.5 421.6L890.5 426.7L888.0 427.1ZM890.0 421.6L892.5 420.8L892.5 426.0L890.0 426.7ZM892.0 420.8L894.5 420.1L894.5 425.2L892.0 426.0ZM894.0 422.4L896.5 421.6L896.5 426.7L894.0 427.5ZM896.0 423.9L898.5 423.1L898.5 428.3L896.0 429.0ZM898.0 423.1L900.5 422.4L900.5 427.5L898.0 428.3Z"/>
<path fill="#ff9000" d="M546.0 471.2L548.5 470.7L548.5 473.4L546.0 473.9ZM548.0 470.7L550.5 470.2L550.5 472.9L548.0 473.4ZM550.0 470.2L552.5 469.8L552.5 472.4L550.0 472.9ZM612.0 516.6L614.5 516.0L614.5 518.5L612.0 519.1ZM614.0 516.0L616.5 515.4L616.5 517.9L614.0 518.5ZM616.0 515.4L618.5 514.8L618.5 517.3L616.0 517.9ZM812.0 385.7L814.5 385.1L814.5 387.5L812.0 388.1ZM814.0 385.1L816.5 384.4L816.5 388.8L814.0 389.4ZM816.0 384.4L818.5 383.8L818.5 388.2L816.0 388.8ZM818.0 385.7L820.5 385.1L820.5 389.5L818.0 390.1ZM820.0 385.1L822.5 384.4L822.5 388.9L820.0 389.5ZM822.0 384.4L824.5 383.8L824.5 388.3L822.0 388.9ZM824.0 383.8L826.5 383.2L826.5 387.7L824.0 388.3ZM826.0 383.2L828.5 382.6L828.5 387.1L826.0 387.7ZM828.0 382.6L830.5 382.0L830.5 386.5L828.0 387.1ZM830.0 382.0L832.5 381.3L832.5 385.9L830.0 386.5ZM832.0 381.3L834.5 380.7L834.5 385.3L832.0 385.9ZM834.0 378.7L836.5 378.2L836.5 382.8L834.0 383.3ZM836.0 378.2L838.5 377.7L838.5 382.4L836.0 382.8ZM838.0 377.7L840.5 377.2L840.5 379.8L838.0 380.3ZM876.0 431.0L878.5 430.6L878.5 433.4L876.0 433.8ZM878.0 428.4L880.5 428.1L880.5 433.1L878.0 433.4ZM880.0 428.1L882.5 427.7L882.5 432.7L880.0 433.1ZM882.0 427.7L884.5 427.3L884.5 432.4L882.0 432.7ZM884.0 427.3L886.5 426.9L886.5 429.7L884.0 430.1ZM886.0 426.9L888.5 426.5L888.5 429.4L886.0 429.7ZM888.0 426.5L890.5 426.1L890.5 431.3L888.0 431.7ZM890.0 426.1L892.5 425.4L892.5 430.5L890.0 431.3ZM892.0 425.4L894.5 424.6L894.5 429.8L892.0 430.5ZM894.0 426.9L896.5 426.1L896.5 429.0L894.0 429.8Z"/>
<path fill="#ff7200" d="M818.0 383.8L820.5 383.2L820.5 385.7L818.0 386.3ZM820.0 383.2L822.5 382.5L822.5 385.0L820.0 385.7ZM822.0 382.5L824.5 381.9L824.5 384.4L822.0 385.0ZM824.0 381.9L826.5 381.2L826.5 383.8L824.0 384.4ZM826.0 381.2L828.5 380.6L828.5 383.2L826.0 383.8ZM828.0 380.6L830.5 380.0L830.5 382.6L828.0 383.2ZM830.0 380.0L832.5 379.3L832.5 381.9L830.0 382.6ZM832.0 379.3L834.5 378.7L834.5 381.3L832.0 381.9ZM884.0 429.5L886.5 429.1L886.5 432.0L884.0 432.4ZM886.0 429.1L888.5 428.8L888.5 431.7L886.0 432.0Z"/>
<polyline points="520.0,535.3 523.0,535.5 526.0,534.9 529.0,534.3 532.0,533.7 535.0,533.1 538.0,532.5 541.0,532.0 544.0,531.4 547.0,530.8 550.0,530.2 553.0,529.6 556.0,529.0 559.0,528.4 562.0,528.0 565.0,527.6 568.0,527.2 571.0,526.9 574.0,526.5 577.0,526.2 580.0,525.8 583.0,525.4 586.0,524.9 589.0,524.0 592.0,523.1 595.0,522.2 598.0,521.3 601.0,520.4 604.0,519.4 607.0,518.5 610.0,517.6 613.0,516.7 616.0,515.8 619.0,514.8 622.0,513.7 625.0,512.5 628.0,511.4 631.0,510.2 634.0,509.1 637.0,507.9 640.0,506.8 643.0,505.6 646.0,504.5 649.0,503.1 652.0,501.1 655.0,499.2 658.0,497.3 661.0,495.3 664.0,493.4 667.0,491.5 670.0,489.6 673.0,487.7 676.0,485.8 679.0,483.9 682.0,482.1 685.0,480.2 688.0,479.3 691.0,478.4 694.0,477.5 697.0,476.6 700.0,475.7 703.0,474.8 706.0,473.4 709.0,472.1 712.0,470.7 715.0,469.3 718.0,467.9 721.0,466.6 724.0,465.2 727.0,463.8 730.0,462.8 733.0,461.8 736.0,460.8 739.0,459.8 742.0,458.8 745.0,457.9 748.0,456.9 751.0,455.9 754.0,454.9 757.0,453.9 760.0,452.9 763.0,451.9 766.0,450.9 769.0,449.9 772.0,448.9 775.0,447.9 778.0,446.9 781.0,445.9 784.0,444.9 787.0,443.9 790.0,443.0 793.0,442.3 796.0,441.6 799.0,440.9 802.0,440.2 805.0,440.0 808.0,439.7 811.0,439.5 814.0,439.3 817.0,439.0 820.0,438.8 823.0,438.5 826.0,438.3 829.0,438.1 832.0,437.8 835.0,437.6 838.0,437.4 841.0,437.1 844.0,436.7 847.0,436.3 850.0,435.9 853.0,435.6 856.0,435.2 859.0,434.7 862.0,434.1 865.0,433.6 868.0,433.1 871.0,432.6 874.0,432.0 877.0,431.5 880.0,431.0 883.0,430.4 886.0,429.9 889.0,429.4 892.0,428.4 895.0,427.3 898.0,426.2 901.0,425.0 904.0,423.9 907.0,422.7 910.0,421.6 913.0,420.1 916.0,418.5 919.0,416.9 922.0,415.2 925.0,413.6 928.0,412.0 931.0,410.4 934.0,408.7 937.0,406.6 940.0,404.2 943.0,401.8 946.0,399.4 949.0,397.0" fill="none" stroke="#f4f8fa" stroke-width="3.4" stroke-dasharray="2.2 1.2" opacity="0.85"/>
<line x1="724.5" y1="233" x2="724.5" y2="421" stroke="#1a6ae6" stroke-width="1"/>
<line x1="724.5" y1="421" x2="724.5" y2="484" stroke="#2020c8" stroke-width="1"/>
<line x1="808.5" y1="260" x2="808.5" y2="440" stroke="#1a6ae6" stroke-width="1"/>
<line x1="808.5" y1="440" x2="808.5" y2="511" stroke="#2020c8" stroke-width="1"/>
<path d="M724.0 248.0L662.8 308.2M724.0 252.6L663.5 312.8M724.0 257.2L669.9 311.5M724.0 261.9L666.4 320.1M724.0 266.5L677.0 314.5M724.0 271.1L670.2 327.7M724.0 275.8L684.1 319.0M724.0 280.4L675.1 336.0M724.0 285.0L691.2 324.5M724.0 289.6L682.8 343.4M724.0 294.2L698.3 331.0M724.0 298.9L692.6 348.9M724.0 303.5L705.4 337.3M724.0 308.1L702.6 353.3M724.0 312.8L712.5 342.2M724.0 317.4L713.0 354.9M724.0 322.0L719.6 346.5M808.5 276.0L759.3 317.2M808.5 281.4L744.0 337.3M808.5 286.7L765.8 324.9M808.5 292.1L751.7 344.7M808.5 297.4L772.3 332.3M808.5 302.8L758.8 352.0M808.5 308.1L778.8 338.5M808.5 313.5L766.3 358.2M808.5 318.9L785.4 344.1M808.5 324.2L773.7 363.6M808.5 329.6L791.9 349.6M808.5 334.9L784.4 366.2M808.5 340.3L798.4 354.5M808.5 345.6L793.6 370.8M808.5 351.0L804.9 360.1" fill="none" stroke="#1a6ce6" stroke-width="0.85" shape-rendering="crispEdges"/>
<path d="M662.8 308.2L571.1 398.6M663.5 312.8L572.8 403.0M669.9 311.5L588.8 393.0M666.4 320.1L580.0 407.4M677.0 314.5L606.6 386.6M670.2 327.7L589.4 412.7M684.1 319.0L624.3 384.0M675.1 336.0L601.8 419.5M691.2 324.5L642.0 383.7M682.8 343.4L621.0 424.1M698.3 331.0L659.8 386.2M692.6 348.9L645.4 424.1M705.4 337.3L677.5 387.9M702.6 353.3L670.4 421.0M712.5 342.2L695.3 386.4M713.0 354.9L696.5 411.3M719.6 346.5L713.0 383.3M759.3 317.2L685.6 379.1M744.0 337.3L647.2 421.3M765.8 324.9L701.8 382.2M751.7 344.7L666.6 423.8M772.3 332.3L718.1 384.6M758.8 352.0L684.3 425.9M778.8 338.5L734.4 384.0M766.3 358.2L702.9 425.2M785.4 344.1L750.6 382.1M773.7 363.6L721.5 422.7M791.9 349.6L766.9 379.6M784.4 366.2L748.3 413.1M798.4 354.5L783.2 375.8M793.6 370.8L771.2 408.6M804.9 360.1L799.4 373.8" fill="none" stroke="#0a9ee8" stroke-width="0.85" shape-rendering="crispEdges"/>
<path d="M571.1 398.6L501.6 467.0M572.8 403.0L504.0 471.3M588.8 393.0L527.4 454.7M580.0 407.4L514.6 473.5M606.6 386.6L553.2 441.2M589.4 412.7L528.2 477.0M601.8 419.5L546.3 482.7M621.0 424.1L574.1 485.2M659.8 386.2L630.6 427.9M645.4 424.1L609.7 481.0M677.5 387.9L656.4 426.3M696.5 411.3L684.0 454.0M713.0 383.3L708.0 411.1M685.6 379.1L629.7 426.0M647.2 421.3L573.9 484.8M701.8 382.2L653.4 425.6M666.6 423.8L602.1 483.6M718.1 384.6L677.0 424.2M684.3 425.9L627.8 481.8M750.6 382.1L724.3 410.8M721.5 422.7L681.9 467.4M766.9 379.6L748.0 402.4M748.3 413.1L720.9 448.7M783.2 375.8L771.6 392.0" fill="none" stroke="#02bce2" stroke-width="0.85" shape-rendering="crispEdges"/>
<path d="M501.6 467.0L446.0 521.8M504.0 471.3L449.0 525.9M527.4 454.7L478.2 504.1M514.6 473.5L462.2 526.4M528.2 477.0L479.3 528.5M546.3 482.7L501.9 533.3M630.6 427.9L607.2 461.4M684.0 454.0L674.0 488.1M936.8 355.9L990.0 382.8M939.1 362.0L992.9 389.2M911.4 352.9L958.3 376.6M935.4 366.7L988.3 392.7M886.0 343.8L926.5 362.8M936.8 368.1L990.0 392.0M860.6 344.3L894.8 361.0M900.0 378.6L944.0 402.6M797.1 414.4L815.4 440.0M759.1 385.5L767.9 402.6M653.4 425.6L614.6 460.4M602.1 483.6L550.5 531.5M748.0 402.4L732.9 420.6M771.6 392.0L762.4 404.9M956.9 362.1L994.0 383.6M956.1 366.9L993.0 387.9M936.0 360.7L967.8 378.5M951.8 374.3L987.6 393.7M915.0 356.5L941.6 369.8M953.5 374.8L989.8 391.0M894.1 349.5L915.5 357.6M953.4 377.9L989.7 391.4M873.1 356.2L889.3 362.6M918.7 387.6L946.2 400.1" fill="none" stroke="#10d8c0" stroke-width="0.85" shape-rendering="crispEdges"/>
<path d="M553.2 441.2L510.5 484.9M574.1 485.2L536.6 534.1M609.7 481.0L581.1 526.5M656.4 426.3L639.5 456.9M708.0 411.1L704.0 433.4M756.7 426.1L764.9 452.1M629.7 426.0L585.0 463.5M573.9 484.8L515.3 535.7M677.0 424.2L644.1 455.9M627.8 481.8L582.6 526.6M724.3 410.8L703.3 433.8M681.9 467.4L650.3 503.2M720.9 448.7L699.0 477.1M899.1 403.2L921.8 416.3" fill="none" stroke="#60e060" stroke-width="0.85" shape-rendering="crispEdges"/>
<path d="M624.3 384.0L579.0 433.1M642.0 383.7L604.8 428.6M695.3 386.4L682.2 419.9M800.5 333.7L835.3 354.7M783.0 342.7L809.9 363.3M765.6 352.7L784.5 373.4M734.4 384.0L700.7 418.5M799.4 373.8L795.3 384.1M838.5 359.2L852.2 366.1" fill="none" stroke="#e0e800" stroke-width="0.85" shape-rendering="crispEdges"/>
<path d="M579.0 433.1L542.8 472.5M875.8 394.9L913.7 420.6M784.5 373.4L799.6 389.9M700.7 418.5L673.7 446.1" fill="none" stroke="#f0a800" stroke-width="0.85" shape-rendering="crispEdges"/>
<path d="M604.8 428.6L575.0 464.5M646.1 472.2L626.6 513.3M682.2 419.9L671.8 446.7M835.3 354.7L863.1 371.6M809.9 363.3L831.3 379.8M840.3 407.4L869.4 433.6M654.9 475.9L616.5 516.5M754.3 437.3L740.8 460.2M795.3 384.1L792.0 392.4M852.2 366.1L863.1 371.6" fill="none" stroke="#e8e000" stroke-width="0.85" shape-rendering="crispEdges"/>
<path d="M670.4 421.0L646.1 472.2M828.4 362.9L875.8 394.9M804.0 374.5L840.3 407.4M702.9 425.2L654.9 475.9M771.2 408.6L754.3 437.3" fill="none" stroke="#40d8a0" stroke-width="0.85" shape-rendering="crispEdges"/>
<path d="M724.0 248.0L782.5 277.7M724.0 252.9L783.2 282.9M724.0 257.9L775.5 284.0M724.0 262.8L782.1 291.4M724.0 267.7L768.6 288.6M724.0 272.7L782.5 298.9M724.0 277.6L761.6 296.0M724.0 282.5L772.4 309.0M724.0 287.5L754.6 306.0M724.0 292.4L765.7 320.6M724.0 297.3L747.6 315.5M724.0 302.3L756.0 331.2M724.0 307.2L740.6 325.4M724.0 312.1L744.1 340.3M724.0 317.1L733.7 335.9M724.0 322.0L733.0 350.6M808.5 276.0L849.3 299.7M808.5 282.8L849.1 305.9M808.5 289.6L843.5 309.2M808.5 296.5L847.9 317.9M808.5 303.3L837.8 317.9M808.5 310.1L848.4 327.9M808.5 316.9L832.0 325.9M808.5 323.7L848.4 338.6M808.5 330.5L826.3 337.6M808.5 337.4L838.8 351.2M808.5 344.2L820.5 350.2M808.5 351.0L833.4 365.4" fill="none" stroke="#2a56e2" stroke-width="0.85" shape-rendering="crispEdges"/>
<path d="M782.5 277.7L870.3 322.2M783.2 282.9L871.9 327.9M775.5 284.0L852.8 323.2M782.1 291.4L869.3 334.2M768.6 288.6L835.4 320.0M782.5 298.9L870.3 338.3M761.6 296.0L817.9 323.5M772.4 309.0L845.0 348.6M754.6 306.0L800.5 333.7M765.7 320.6L828.4 362.9M747.6 315.5L783.0 342.7M756.0 331.2L804.0 374.5M740.6 325.4L765.6 352.7M744.1 340.3L774.3 382.5M733.7 335.9L748.1 364.1M733.0 350.6L746.5 393.6M849.3 299.7L910.5 335.2M849.1 305.9L910.0 340.6M843.5 309.2L896.1 338.5M847.9 317.9L907.0 350.0M837.8 317.9L881.7 339.9M848.4 327.9L908.2 354.6M832.0 325.9L867.3 339.3M848.4 338.6L908.1 361.0M826.3 337.6L852.9 348.2M838.8 351.2L884.3 371.9M820.5 350.2L838.5 359.2M833.4 365.4L870.8 386.9" fill="none" stroke="#2a5ce4" stroke-width="0.85" shape-rendering="crispEdges"/>
<path d="M870.3 322.2L936.8 355.9M871.9 327.9L939.1 362.0M852.8 323.2L911.4 352.9M869.3 334.2L935.4 366.7M835.4 320.0L886.0 343.8M870.3 338.3L936.8 368.1M817.9 323.5L860.6 344.3M845.0 348.6L900.0 378.6M774.3 382.5L797.1 414.4M748.1 364.1L759.1 385.5M746.5 393.6L756.7 426.1M910.5 335.2L956.9 362.1M910.0 340.6L956.1 366.9M896.1 338.5L936.0 360.7M907.0 350.0L951.8 374.3M881.7 339.9L915.0 356.5M908.2 354.6L953.5 374.8M867.3 339.3L894.1 349.5M908.1 361.0L953.4 377.9M852.9 348.2L873.1 356.2M884.3 371.9L918.7 387.6M870.8 386.9L899.1 403.2" fill="none" stroke="#1a84e6" stroke-width="0.85" shape-rendering="crispEdges"/>
<path fill="#1400ff" d="M872 368 L896 357 L912 354.6 L909 364 L940 374 Z"/>
<rect x="422.80" y="666.5" width="36.94" height="15" fill="#1400ff"/>
<rect x="459.44" y="666.5" width="36.94" height="15" fill="#0062ff"/>
<rect x="496.08" y="666.5" width="36.94" height="15" fill="#0082ff"/>
<rect x="532.71" y="666.5" width="36.94" height="15" fill="#009cff"/>
<rect x="569.35" y="666.5" width="36.94" height="15" fill="#00c0ff"/>
<rect x="605.99" y="666.5" width="36.94" height="15" fill="#00e2ff"/>
<rect x="642.62" y="666.5" width="36.94" height="15" fill="#00ffdc"/>
<rect x="679.26" y="666.5" width="36.94" height="15" fill="#00ff66"/>
<rect x="715.90" y="666.5" width="36.94" height="15" fill="#c8ff00"/>
<rect x="752.54" y="666.5" width="36.94" height="15" fill="#ffee00"/>
<rect x="789.17" y="666.5" width="36.94" height="15" fill="#ffdc00"/>
<rect x="825.81" y="666.5" width="36.94" height="15" fill="#ffc600"/>
<rect x="862.45" y="666.5" width="36.94" height="15" fill="#ffa800"/>
<rect x="899.09" y="666.5" width="36.94" height="15" fill="#ff9000"/>
<rect x="935.73" y="666.5" width="36.94" height="15" fill="#ff7200"/>
<rect x="972.36" y="666.5" width="36.94" height="15" fill="#ff2200"/>
<rect x="423.5" y="666.5" width="586.0" height="15" fill="none" stroke="#000" stroke-width="1"/>
<line x1="496.5" y1="667" x2="496.5" y2="681" stroke="#000" stroke-width="1"/>
<line x1="569.5" y1="667" x2="569.5" y2="681" stroke="#000" stroke-width="1"/>
<line x1="642.5" y1="667" x2="642.5" y2="681" stroke="#000" stroke-width="1"/>
<line x1="716.5" y1="667" x2="716.5" y2="681" stroke="#000" stroke-width="1"/>
<line x1="789.5" y1="667" x2="789.5" y2="681" stroke="#000" stroke-width="1"/>
<line x1="862.5" y1="667" x2="862.5" y2="681" stroke="#000" stroke-width="1"/>
<line x1="935.5" y1="667" x2="935.5" y2="681" stroke="#000" stroke-width="1"/>
<line x1="423.5" y1="662" x2="423.5" y2="667" stroke="#000" stroke-width="1"/>
<line x1="569.5" y1="662" x2="569.5" y2="667" stroke="#000" stroke-width="1"/>
<line x1="642.5" y1="662" x2="642.5" y2="667" stroke="#000" stroke-width="1"/>
<line x1="716.5" y1="662" x2="716.5" y2="667" stroke="#000" stroke-width="1"/>
<line x1="789.5" y1="662" x2="789.5" y2="667" stroke="#000" stroke-width="1"/>
<line x1="862.5" y1="662" x2="862.5" y2="667" stroke="#000" stroke-width="1"/>
<line x1="1009.5" y1="662" x2="1009.5" y2="667" stroke="#000" stroke-width="1"/>
<text x="420.2" y="643.8" font-family="Liberation Mono" font-size="11.7" fill="#000" textLength="356.0" lengthAdjust="spacing">Colours on NPart_1: bridge.b2m_MODE.1.10(amplitude)</text>
<text x="540.8" y="659.8" font-family="Liberation Mono" font-size="11.7" fill="#000" textLength="56.4" lengthAdjust="spacing">2.51e-01</text>
<text x="615.0" y="659.8" font-family="Liberation Mono" font-size="11.7" fill="#000" textLength="56.4" lengthAdjust="spacing">3.76e-01</text>
<text x="687.8" y="659.8" font-family="Liberation Mono" font-size="11.7" fill="#000" textLength="56.4" lengthAdjust="spacing">5.01e-01</text>
<text x="761.4" y="659.8" font-family="Liberation Mono" font-size="11.7" fill="#000" textLength="56.4" lengthAdjust="spacing">6.27e-01</text>
<text x="835.2" y="659.8" font-family="Liberation Mono" font-size="11.7" fill="#000" textLength="56.4" lengthAdjust="spacing">7.52e-01</text>
<text x="420.2" y="659.8" font-family="Liberation Mono" font-size="11.7" fill="#000" textLength="56.4" lengthAdjust="spacing">0.00e+00</text>
<text x="957.5" y="659.8" font-family="Liberation Mono" font-size="11.7" fill="#000" textLength="56.4" lengthAdjust="spacing">1.00e+00</text>
<rect x="416" y="689" width="600" height="6" fill="#e9e7e6"/>
<circle cx="710" cy="692" r="1" fill="#c4c0c0"/>
<circle cx="716" cy="692" r="1" fill="#c4c0c0"/>
<circle cx="722" cy="692" r="1" fill="#c4c0c0"/>
<text x="735.6" y="714.8" font-family="Liberation Sans" font-size="18.6" fill="#d91c1c" textLength="61.2" lengthAdjust="spacing" stroke="#d91c1c" stroke-width="0.1">handle</text>
<text x="418.3" y="708.0" font-family="Liberation Mono" font-size="13.3" fill="#167016" textLength="208.4" lengthAdjust="spacing" stroke="#167016" stroke-width="0.1">Python console for baspl++</text>
<text x="418.7" y="724.8" font-family="Liberation Mono" font-size="13.3" fill="#000" textLength="183.3" lengthAdjust="spacing" stroke="#000" stroke-width="0.1">&gt;&gt;&gt; from baspl import *</text>
<text x="418.7" y="741.3" font-family="Liberation Mono" font-size="13.3" fill="#000" textLength="22.8" lengthAdjust="spacing" stroke="#000" stroke-width="0.1">&gt;&gt;&gt;</text>
<text x="853.8" y="785.0" font-family="Liberation Sans" font-size="18.6" fill="#d91c1c" textLength="139.7" lengthAdjust="spacing" stroke="#d91c1c" stroke-width="0.1">Python console</text>
<rect x="1002.5" y="695.5" width="13" height="99" fill="#e6e3e3" stroke="#a8a2a2"/>
<path d="M1003 720 Q1003 709.5 1009 709.5 Q1015 709.5 1015 720 V772 Q1015 782 1009 782 Q1003 782 1003 772 Z" fill="url(#scrollg)" stroke="#a8a2a2"/>
<path d="M1005.5 704 L1009 700.5 L1012.5 704 M1005.5 786 L1009 789.5 L1012.5 786" fill="none" stroke="#b8b4b4" stroke-width="1"/>
<path d="M1006.3 741 h2 M1007.3 740 v2" stroke="#c8c4c4" stroke-width="0.6"/>
<path d="M1010.3 741 h2 M1011.3 740 v2" stroke="#c8c4c4" stroke-width="0.6"/>
<path d="M1006.3 745 h2 M1007.3 744 v2" stroke="#c8c4c4" stroke-width="0.6"/>
<path d="M1010.3 745 h2 M1011.3 744 v2" stroke="#c8c4c4" stroke-width="0.6"/>
<path d="M1006.3 749 h2 M1007.3 748 v2" stroke="#c8c4c4" stroke-width="0.6"/>
<path d="M1010.3 749 h2 M1011.3 748 v2" stroke="#c8c4c4" stroke-width="0.6"/>
<circle cx="42.5" cy="423.5" r="30.2" fill="none" stroke="#e00808" stroke-width="1.4"/>
<path d="M8 828 A62.7 62.7 0 1 1 128.65 828 Z" fill="none" stroke="#e00808" stroke-width="1.4"/>
<circle cx="716" cy="691" r="13.8" fill="none" stroke="#e00808" stroke-width="1.15"/></svg></body></html>
